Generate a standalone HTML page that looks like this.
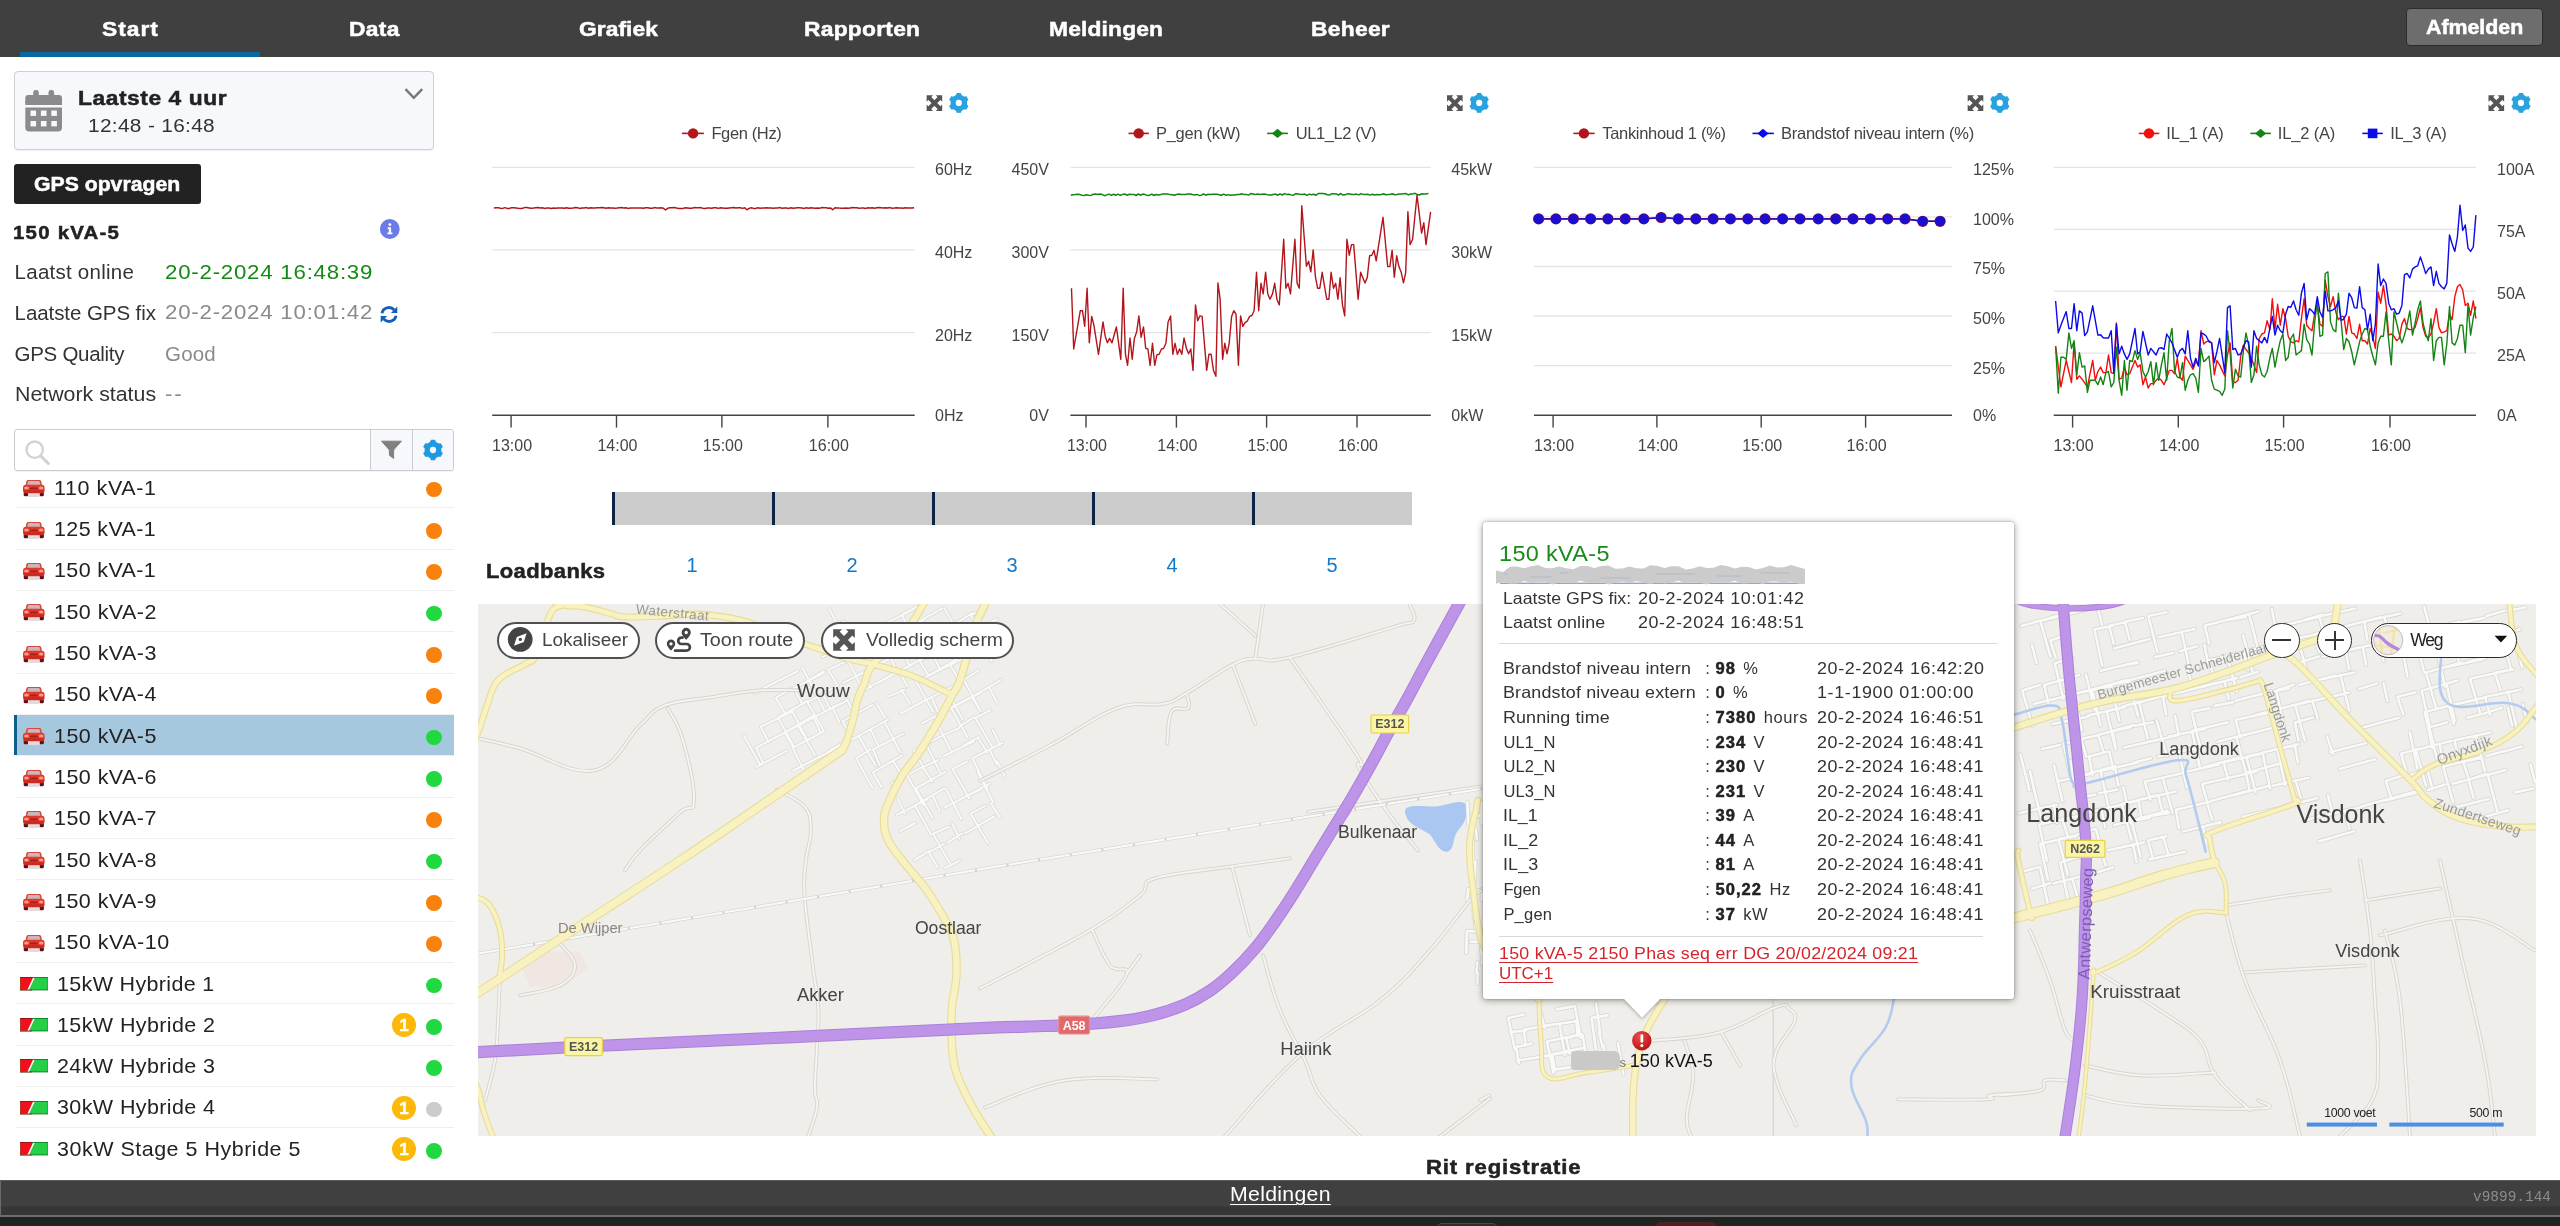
<!DOCTYPE html>
<html><head><meta charset="utf-8"><title>Dashboard</title>
<style>
html,body{margin:0;padding:0;background:#fff}
body{width:2560px;height:1226px;position:relative;overflow:hidden;font-family:"Liberation Sans",sans-serif;}
section{position:absolute;left:0;top:0;width:0;height:0}
section>div,section>span,section>svg{position:absolute;}
span{white-space:nowrap;line-height:1;display:block;opacity:.999}
svg{overflow:visible;opacity:.999}
svg text{font-family:"Liberation Sans",sans-serif}
</style></head><body>
<section id="sidebar">
<div id="nav" style="left:0;top:0;width:2560px;height:56.7px;background:#404040"></div>
<div style="left:19.7px;top:51.6px;width:240.6px;height:5.1px;background:#0869a2"></div>
<span style="left:102.20px;top:17.82px;font-size:21px;color:#fff;font-weight:700;-webkit-text-stroke:0.5px currentColor;letter-spacing:0.910px;transform:scaleX(1.0850);transform-origin:0 0;">Start</span>
<span style="left:348.50px;top:17.82px;font-size:21px;color:#fff;font-weight:700;-webkit-text-stroke:0.5px currentColor;letter-spacing:0.290px;transform:scaleX(1.0850);transform-origin:0 0;">Data</span>
<span style="left:578.50px;top:17.82px;font-size:21px;color:#fff;font-weight:700;-webkit-text-stroke:0.5px currentColor;letter-spacing:0.060px;transform:scaleX(1.0850);transform-origin:0 0;">Grafiek</span>
<span style="left:804.00px;top:17.82px;font-size:21px;color:#fff;font-weight:700;-webkit-text-stroke:0.5px currentColor;letter-spacing:0.239px;transform:scaleX(1.0850);transform-origin:0 0;">Rapporten</span>
<span style="left:1049.00px;top:17.82px;font-size:21px;color:#fff;font-weight:700;-webkit-text-stroke:0.5px currentColor;letter-spacing:0.153px;transform:scaleX(1.0850);transform-origin:0 0;">Meldingen</span>
<span style="left:1310.50px;top:17.82px;font-size:21px;color:#fff;font-weight:700;-webkit-text-stroke:0.5px currentColor;letter-spacing:0.269px;transform:scaleX(1.0850);transform-origin:0 0;">Beheer</span>
<div style="left:2405.6px;top:7.8px;width:137.6px;height:38.6px;background:#6d6d6d;border:1.4px solid #2c2c2c;border-radius:4px;box-sizing:border-box"></div>
<span style="left:2425.80px;top:17.37px;font-size:20px;color:#fff;font-weight:700;-webkit-text-stroke:0.5px currentColor;transform:scaleX(1.0670);transform-origin:0 0;">Afmelden</span>
<div style="left:14px;top:71px;width:420px;height:79px;background:#f7f8fb;border:1px solid #cdd0d4;border-radius:4px;box-sizing:border-box;box-shadow:0 1px 1px rgba(0,0,0,.06)"></div>
<svg style="left:25px;top:89px" width="38" height="44" viewBox="0 0 38 44">
<g fill="#8b8b8f"><rect x="0.3" y="6" width="36.7" height="9.5" rx="3"/><rect x="0.3" y="12" width="36.7" height="4"/>
<rect x="8.2" y="1" width="5.6" height="10" rx="2.4"/><rect x="23.5" y="1" width="5.6" height="10" rx="2.4"/>
<path d="M0.3,18.5 H37 V38.5 a4,4 0 0 1 -4,4 H4.3 a4,4 0 0 1 -4,-4 Z"/></g>
<g fill="#f7f8fb"><rect x="5.5" y="21.5" width="5.6" height="5.4"/><rect x="15.9" y="21.5" width="5.6" height="5.4"/><rect x="26.3" y="21.5" width="5.6" height="5.4"/>
<rect x="5.5" y="32" width="5.6" height="5.4"/><rect x="15.9" y="32" width="5.6" height="5.4"/><rect x="26.3" y="32" width="5.6" height="5.4"/></g></svg>
<span style="left:78.40px;top:87.22px;font-size:21px;color:#222;font-weight:700;-webkit-text-stroke:0.5px currentColor;letter-spacing:0.519px;transform:scaleX(1.0850);transform-origin:0 0;">Laatste 4 uur</span>
<span style="left:87.60px;top:115.65px;font-size:19.2px;color:#333;letter-spacing:0.307px;transform:scaleX(1.0850);transform-origin:0 0;">12:48 - 16:48</span>
<svg style="left:403px;top:86px" width="22" height="16" viewBox="0 0 22 16"><path d="M2.5,3.2 L10.8,11.8 L19.2,3.2" fill="none" stroke="#777" stroke-width="2.4"/></svg>
<div style="left:14px;top:164px;width:187px;height:40px;background:#222;border-radius:3px"></div>
<span style="left:34.30px;top:174.71px;font-size:19.6px;color:#fff;font-weight:700;-webkit-text-stroke:0.5px currentColor;transform:scaleX(1.0826);transform-origin:0 0;">GPS opvragen</span>
<span style="left:13.10px;top:224.39px;font-size:18.8px;color:#222;font-weight:700;-webkit-text-stroke:0.5px currentColor;letter-spacing:1.155px;transform:scaleX(1.0850);transform-origin:0 0;">150 kVA-5</span>
<svg style="left:379px;top:218px" width="22" height="22" viewBox="0 0 22 22"><circle cx="10.8" cy="11" r="9.9" fill="#6b7bea"/><g fill="#fff"><circle cx="10.9" cy="6.6" r="1.45"/><path d="M8.7,9.3 h3.4 v5.2 h1.3 v1.7 h-5 v-1.7 h1.4 v-3.5 h-1.1z"/></g></svg>
<span style="left:14.60px;top:261.85px;font-size:20.5px;color:#333;letter-spacing:0.247px;">Laatst online</span>
<span style="left:165.00px;top:261.65px;font-size:20.5px;color:#148a14;letter-spacing:0.717px;transform:scaleX(1.0850);transform-origin:0 0;">20-2-2024 16:48:39</span>
<span style="left:14.60px;top:302.65px;font-size:20.5px;color:#333;letter-spacing:-0.077px;">Laatste GPS fix</span>
<span style="left:165.00px;top:302.45px;font-size:20.5px;color:#8a8a8a;letter-spacing:0.717px;transform:scaleX(1.0850);transform-origin:0 0;">20-2-2024 10:01:42</span>
<span style="left:14.60px;top:344.35px;font-size:20.5px;color:#333;letter-spacing:-0.295px;">GPS Quality</span>
<span style="left:165.00px;top:344.15px;font-size:20.5px;color:#8a8a8a;letter-spacing:0.192px;">Good</span>
<span style="left:14.60px;top:384.35px;font-size:20.5px;color:#333;transform:scaleX(1.0405);transform-origin:0 0;">Network status</span>
<span style="left:165.00px;top:384.15px;font-size:20.5px;color:#8a8a8a;letter-spacing:1.667px;transform:scaleX(1.0850);transform-origin:0 0;">--</span>
<svg style="left:380px;top:306px" width="18" height="17" viewBox="0 0 18 17"><g fill="none" stroke="#125fba" stroke-width="2.9">
<path d="M2.0,7.2 A7,6.6 0 0 1 14.2,3.9"/><path d="M16.0,9.8 A7,6.6 0 0 1 3.8,13.1"/></g>
<g fill="#125fba"><polygon points="17.3,0.6 17.3,7.0 10.9,7.0"/><polygon points="0.7,16.4 0.7,10.0 7.1,10.0"/></g></svg>
<div style="left:14px;top:429px;width:440px;height:42px;background:#fff;border:1px solid #c9ccd0;border-radius:3px;box-sizing:border-box;box-shadow:0 1px 1px rgba(0,0,0,.05)"></div>
<div style="left:370px;top:430px;width:83px;height:40px;background:#f7f8fb;border-left:1px solid #c9ccd0;border-radius:0 2px 2px 0;box-sizing:border-box"></div>
<div style="left:411.5px;top:430px;width:1px;height:40px;background:#c9ccd0"></div>
<svg style="left:22px;top:437px" width="30" height="30" viewBox="0 0 30 30"><circle cx="12.7" cy="12.7" r="8.2" fill="none" stroke="#d2d2d2" stroke-width="2.4"/><path d="M18.6,18.8 L26.2,26.4" stroke="#d2d2d2" stroke-width="3" stroke-linecap="round"/></svg>
<svg style="left:380px;top:440px" width="23" height="20" viewBox="0 0 23 20"><path d="M1.6,1.2 H21.4 L13.6,10 V18.6 L9.4,15.2 V10 Z" fill="#808080" stroke="#808080" stroke-width="1" stroke-linejoin="round"/></svg>
<svg style="left:421px;top:438px" width="24" height="24" viewBox="421 438 24 24"><path d="M430.70,442.38 L431.28,440.46 L434.72,440.46 L435.30,442.38 L438.45,444.20 L440.40,443.75 L442.12,446.72 L440.75,448.18 L440.75,451.82 L442.12,453.28 L440.40,456.25 L438.45,455.80 L435.30,457.62 L434.72,459.54 L431.28,459.54 L430.70,457.62 L427.55,455.80 L425.60,456.25 L423.88,453.28 L425.25,451.82 L425.25,448.18 L423.88,446.72 L425.60,443.75 L427.55,444.20Z" fill="#1e9ae0" stroke="#1e9ae0" stroke-width="1.22" stroke-linejoin="round"/><path d="M425.04,450.00 a7.96,7.96 0 1,0 15.91,0 a7.96,7.96 0 1,0 -15.91,0Z" fill="#1e9ae0"/><circle cx="433.00" cy="450.00" r="3.16" fill="#f7f8fb"/></svg>
<div style="left:14px;top:715px;width:440px;height:40px;background:#a6c8de;border-left:3px solid #0e5d8c;box-sizing:border-box"></div>
<svg style="left:23.2px;top:480.30px" width="21.6" height="17.2" viewBox="0 0 21.6 16.6" preserveAspectRatio="none">
<rect x="0.7" y="11.4" width="4.5" height="4.3" rx="1.1" fill="#5c111a"/><rect x="16.4" y="11.4" width="4.5" height="4.3" rx="1.1" fill="#5c111a"/>
<rect x="5" y="11.8" width="11.6" height="4.7" rx="1" fill="#e4dada"/>
<path d="M2.4,5.8 L3.5,1.3 Q3.8,0.1 5.3,0.1 H16.3 Q17.8,0.1 18.1,1.3 L19.2,5.8 Z" fill="#d8463e"/>
<path d="M4.1,5.2 L4.9,1.7 Q5.1,1.0 5.9,1.0 H15.7 Q16.5,1.0 16.7,1.7 L17.5,5.2Z" fill="#cdb6ba"/>
<rect x="0" y="4.7" width="21.6" height="8.2" rx="3" fill="#e0392d"/>
<rect x="0.8" y="9.4" width="20" height="3.2" rx="1.5" fill="#cb2b22"/>
<ellipse cx="3.5" cy="7.7" rx="2.3" ry="1.5" fill="#ffa184"/><ellipse cx="18.1" cy="7.7" rx="2.3" ry="1.5" fill="#ffa184"/>
<rect x="7" y="7.2" width="7.6" height="1.7" rx="0.8" fill="#a91d18"/></svg>
<span style="left:53.80px;top:478.54px;font-size:19.8px;color:#222;letter-spacing:0.553px;transform:scaleX(1.0850);transform-origin:0 0;">110 kVA-1</span>
<div style="left:16px;top:507.40px;width:438px;height:1px;background:#efefef"></div>
<div style="left:426.10px;top:481.70px;width:15.8px;height:15.8px;border-radius:50%;background:#f8820b"></div>
<svg style="left:23.2px;top:521.63px" width="21.6" height="17.2" viewBox="0 0 21.6 16.6" preserveAspectRatio="none">
<rect x="0.7" y="11.4" width="4.5" height="4.3" rx="1.1" fill="#5c111a"/><rect x="16.4" y="11.4" width="4.5" height="4.3" rx="1.1" fill="#5c111a"/>
<rect x="5" y="11.8" width="11.6" height="4.7" rx="1" fill="#e4dada"/>
<path d="M2.4,5.8 L3.5,1.3 Q3.8,0.1 5.3,0.1 H16.3 Q17.8,0.1 18.1,1.3 L19.2,5.8 Z" fill="#d8463e"/>
<path d="M4.1,5.2 L4.9,1.7 Q5.1,1.0 5.9,1.0 H15.7 Q16.5,1.0 16.7,1.7 L17.5,5.2Z" fill="#cdb6ba"/>
<rect x="0" y="4.7" width="21.6" height="8.2" rx="3" fill="#e0392d"/>
<rect x="0.8" y="9.4" width="20" height="3.2" rx="1.5" fill="#cb2b22"/>
<ellipse cx="3.5" cy="7.7" rx="2.3" ry="1.5" fill="#ffa184"/><ellipse cx="18.1" cy="7.7" rx="2.3" ry="1.5" fill="#ffa184"/>
<rect x="7" y="7.2" width="7.6" height="1.7" rx="0.8" fill="#a91d18"/></svg>
<span style="left:53.80px;top:519.87px;font-size:19.8px;color:#222;letter-spacing:0.367px;transform:scaleX(1.0850);transform-origin:0 0;">125 kVA-1</span>
<div style="left:16px;top:548.73px;width:438px;height:1px;background:#efefef"></div>
<div style="left:426.10px;top:523.03px;width:15.8px;height:15.8px;border-radius:50%;background:#f8820b"></div>
<svg style="left:23.2px;top:562.96px" width="21.6" height="17.2" viewBox="0 0 21.6 16.6" preserveAspectRatio="none">
<rect x="0.7" y="11.4" width="4.5" height="4.3" rx="1.1" fill="#5c111a"/><rect x="16.4" y="11.4" width="4.5" height="4.3" rx="1.1" fill="#5c111a"/>
<rect x="5" y="11.8" width="11.6" height="4.7" rx="1" fill="#e4dada"/>
<path d="M2.4,5.8 L3.5,1.3 Q3.8,0.1 5.3,0.1 H16.3 Q17.8,0.1 18.1,1.3 L19.2,5.8 Z" fill="#d8463e"/>
<path d="M4.1,5.2 L4.9,1.7 Q5.1,1.0 5.9,1.0 H15.7 Q16.5,1.0 16.7,1.7 L17.5,5.2Z" fill="#cdb6ba"/>
<rect x="0" y="4.7" width="21.6" height="8.2" rx="3" fill="#e0392d"/>
<rect x="0.8" y="9.4" width="20" height="3.2" rx="1.5" fill="#cb2b22"/>
<ellipse cx="3.5" cy="7.7" rx="2.3" ry="1.5" fill="#ffa184"/><ellipse cx="18.1" cy="7.7" rx="2.3" ry="1.5" fill="#ffa184"/>
<rect x="7" y="7.2" width="7.6" height="1.7" rx="0.8" fill="#a91d18"/></svg>
<span style="left:53.80px;top:561.20px;font-size:19.8px;color:#222;letter-spacing:0.367px;transform:scaleX(1.0850);transform-origin:0 0;">150 kVA-1</span>
<div style="left:16px;top:590.06px;width:438px;height:1px;background:#efefef"></div>
<div style="left:426.10px;top:564.36px;width:15.8px;height:15.8px;border-radius:50%;background:#f8820b"></div>
<svg style="left:23.2px;top:604.29px" width="21.6" height="17.2" viewBox="0 0 21.6 16.6" preserveAspectRatio="none">
<rect x="0.7" y="11.4" width="4.5" height="4.3" rx="1.1" fill="#5c111a"/><rect x="16.4" y="11.4" width="4.5" height="4.3" rx="1.1" fill="#5c111a"/>
<rect x="5" y="11.8" width="11.6" height="4.7" rx="1" fill="#e4dada"/>
<path d="M2.4,5.8 L3.5,1.3 Q3.8,0.1 5.3,0.1 H16.3 Q17.8,0.1 18.1,1.3 L19.2,5.8 Z" fill="#d8463e"/>
<path d="M4.1,5.2 L4.9,1.7 Q5.1,1.0 5.9,1.0 H15.7 Q16.5,1.0 16.7,1.7 L17.5,5.2Z" fill="#cdb6ba"/>
<rect x="0" y="4.7" width="21.6" height="8.2" rx="3" fill="#e0392d"/>
<rect x="0.8" y="9.4" width="20" height="3.2" rx="1.5" fill="#cb2b22"/>
<ellipse cx="3.5" cy="7.7" rx="2.3" ry="1.5" fill="#ffa184"/><ellipse cx="18.1" cy="7.7" rx="2.3" ry="1.5" fill="#ffa184"/>
<rect x="7" y="7.2" width="7.6" height="1.7" rx="0.8" fill="#a91d18"/></svg>
<span style="left:53.80px;top:602.53px;font-size:19.8px;color:#222;letter-spacing:0.436px;transform:scaleX(1.0850);transform-origin:0 0;">150 kVA-2</span>
<div style="left:16px;top:631.39px;width:438px;height:1px;background:#efefef"></div>
<div style="left:426.10px;top:605.69px;width:15.8px;height:15.8px;border-radius:50%;background:#20d840"></div>
<svg style="left:23.2px;top:645.62px" width="21.6" height="17.2" viewBox="0 0 21.6 16.6" preserveAspectRatio="none">
<rect x="0.7" y="11.4" width="4.5" height="4.3" rx="1.1" fill="#5c111a"/><rect x="16.4" y="11.4" width="4.5" height="4.3" rx="1.1" fill="#5c111a"/>
<rect x="5" y="11.8" width="11.6" height="4.7" rx="1" fill="#e4dada"/>
<path d="M2.4,5.8 L3.5,1.3 Q3.8,0.1 5.3,0.1 H16.3 Q17.8,0.1 18.1,1.3 L19.2,5.8 Z" fill="#d8463e"/>
<path d="M4.1,5.2 L4.9,1.7 Q5.1,1.0 5.9,1.0 H15.7 Q16.5,1.0 16.7,1.7 L17.5,5.2Z" fill="#cdb6ba"/>
<rect x="0" y="4.7" width="21.6" height="8.2" rx="3" fill="#e0392d"/>
<rect x="0.8" y="9.4" width="20" height="3.2" rx="1.5" fill="#cb2b22"/>
<ellipse cx="3.5" cy="7.7" rx="2.3" ry="1.5" fill="#ffa184"/><ellipse cx="18.1" cy="7.7" rx="2.3" ry="1.5" fill="#ffa184"/>
<rect x="7" y="7.2" width="7.6" height="1.7" rx="0.8" fill="#a91d18"/></svg>
<span style="left:53.80px;top:643.86px;font-size:19.8px;color:#222;letter-spacing:0.436px;transform:scaleX(1.0850);transform-origin:0 0;">150 kVA-3</span>
<div style="left:16px;top:672.72px;width:438px;height:1px;background:#efefef"></div>
<div style="left:426.10px;top:647.02px;width:15.8px;height:15.8px;border-radius:50%;background:#f8820b"></div>
<svg style="left:23.2px;top:686.95px" width="21.6" height="17.2" viewBox="0 0 21.6 16.6" preserveAspectRatio="none">
<rect x="0.7" y="11.4" width="4.5" height="4.3" rx="1.1" fill="#5c111a"/><rect x="16.4" y="11.4" width="4.5" height="4.3" rx="1.1" fill="#5c111a"/>
<rect x="5" y="11.8" width="11.6" height="4.7" rx="1" fill="#e4dada"/>
<path d="M2.4,5.8 L3.5,1.3 Q3.8,0.1 5.3,0.1 H16.3 Q17.8,0.1 18.1,1.3 L19.2,5.8 Z" fill="#d8463e"/>
<path d="M4.1,5.2 L4.9,1.7 Q5.1,1.0 5.9,1.0 H15.7 Q16.5,1.0 16.7,1.7 L17.5,5.2Z" fill="#cdb6ba"/>
<rect x="0" y="4.7" width="21.6" height="8.2" rx="3" fill="#e0392d"/>
<rect x="0.8" y="9.4" width="20" height="3.2" rx="1.5" fill="#cb2b22"/>
<ellipse cx="3.5" cy="7.7" rx="2.3" ry="1.5" fill="#ffa184"/><ellipse cx="18.1" cy="7.7" rx="2.3" ry="1.5" fill="#ffa184"/>
<rect x="7" y="7.2" width="7.6" height="1.7" rx="0.8" fill="#a91d18"/></svg>
<span style="left:53.80px;top:685.19px;font-size:19.8px;color:#222;letter-spacing:0.436px;transform:scaleX(1.0850);transform-origin:0 0;">150 kVA-4</span>
<div style="left:16px;top:714.05px;width:438px;height:1px;background:#efefef"></div>
<div style="left:426.10px;top:688.35px;width:15.8px;height:15.8px;border-radius:50%;background:#f8820b"></div>
<svg style="left:23.2px;top:728.28px" width="21.6" height="17.2" viewBox="0 0 21.6 16.6" preserveAspectRatio="none">
<rect x="0.7" y="11.4" width="4.5" height="4.3" rx="1.1" fill="#5c111a"/><rect x="16.4" y="11.4" width="4.5" height="4.3" rx="1.1" fill="#5c111a"/>
<rect x="5" y="11.8" width="11.6" height="4.7" rx="1" fill="#e4dada"/>
<path d="M2.4,5.8 L3.5,1.3 Q3.8,0.1 5.3,0.1 H16.3 Q17.8,0.1 18.1,1.3 L19.2,5.8 Z" fill="#d8463e"/>
<path d="M4.1,5.2 L4.9,1.7 Q5.1,1.0 5.9,1.0 H15.7 Q16.5,1.0 16.7,1.7 L17.5,5.2Z" fill="#cdb6ba"/>
<rect x="0" y="4.7" width="21.6" height="8.2" rx="3" fill="#e0392d"/>
<rect x="0.8" y="9.4" width="20" height="3.2" rx="1.5" fill="#cb2b22"/>
<ellipse cx="3.5" cy="7.7" rx="2.3" ry="1.5" fill="#ffa184"/><ellipse cx="18.1" cy="7.7" rx="2.3" ry="1.5" fill="#ffa184"/>
<rect x="7" y="7.2" width="7.6" height="1.7" rx="0.8" fill="#a91d18"/></svg>
<span style="left:53.80px;top:726.52px;font-size:19.8px;color:#222;letter-spacing:0.436px;transform:scaleX(1.0850);transform-origin:0 0;">150 kVA-5</span>
<div style="left:16px;top:755.38px;width:438px;height:1px;background:#efefef"></div>
<div style="left:426.10px;top:729.68px;width:15.8px;height:15.8px;border-radius:50%;background:#20d840"></div>
<svg style="left:23.2px;top:769.61px" width="21.6" height="17.2" viewBox="0 0 21.6 16.6" preserveAspectRatio="none">
<rect x="0.7" y="11.4" width="4.5" height="4.3" rx="1.1" fill="#5c111a"/><rect x="16.4" y="11.4" width="4.5" height="4.3" rx="1.1" fill="#5c111a"/>
<rect x="5" y="11.8" width="11.6" height="4.7" rx="1" fill="#e4dada"/>
<path d="M2.4,5.8 L3.5,1.3 Q3.8,0.1 5.3,0.1 H16.3 Q17.8,0.1 18.1,1.3 L19.2,5.8 Z" fill="#d8463e"/>
<path d="M4.1,5.2 L4.9,1.7 Q5.1,1.0 5.9,1.0 H15.7 Q16.5,1.0 16.7,1.7 L17.5,5.2Z" fill="#cdb6ba"/>
<rect x="0" y="4.7" width="21.6" height="8.2" rx="3" fill="#e0392d"/>
<rect x="0.8" y="9.4" width="20" height="3.2" rx="1.5" fill="#cb2b22"/>
<ellipse cx="3.5" cy="7.7" rx="2.3" ry="1.5" fill="#ffa184"/><ellipse cx="18.1" cy="7.7" rx="2.3" ry="1.5" fill="#ffa184"/>
<rect x="7" y="7.2" width="7.6" height="1.7" rx="0.8" fill="#a91d18"/></svg>
<span style="left:53.80px;top:767.85px;font-size:19.8px;color:#222;letter-spacing:0.436px;transform:scaleX(1.0850);transform-origin:0 0;">150 kVA-6</span>
<div style="left:16px;top:796.71px;width:438px;height:1px;background:#efefef"></div>
<div style="left:426.10px;top:771.01px;width:15.8px;height:15.8px;border-radius:50%;background:#20d840"></div>
<svg style="left:23.2px;top:810.94px" width="21.6" height="17.2" viewBox="0 0 21.6 16.6" preserveAspectRatio="none">
<rect x="0.7" y="11.4" width="4.5" height="4.3" rx="1.1" fill="#5c111a"/><rect x="16.4" y="11.4" width="4.5" height="4.3" rx="1.1" fill="#5c111a"/>
<rect x="5" y="11.8" width="11.6" height="4.7" rx="1" fill="#e4dada"/>
<path d="M2.4,5.8 L3.5,1.3 Q3.8,0.1 5.3,0.1 H16.3 Q17.8,0.1 18.1,1.3 L19.2,5.8 Z" fill="#d8463e"/>
<path d="M4.1,5.2 L4.9,1.7 Q5.1,1.0 5.9,1.0 H15.7 Q16.5,1.0 16.7,1.7 L17.5,5.2Z" fill="#cdb6ba"/>
<rect x="0" y="4.7" width="21.6" height="8.2" rx="3" fill="#e0392d"/>
<rect x="0.8" y="9.4" width="20" height="3.2" rx="1.5" fill="#cb2b22"/>
<ellipse cx="3.5" cy="7.7" rx="2.3" ry="1.5" fill="#ffa184"/><ellipse cx="18.1" cy="7.7" rx="2.3" ry="1.5" fill="#ffa184"/>
<rect x="7" y="7.2" width="7.6" height="1.7" rx="0.8" fill="#a91d18"/></svg>
<span style="left:53.80px;top:809.18px;font-size:19.8px;color:#222;letter-spacing:0.436px;transform:scaleX(1.0850);transform-origin:0 0;">150 kVA-7</span>
<div style="left:16px;top:838.04px;width:438px;height:1px;background:#efefef"></div>
<div style="left:426.10px;top:812.34px;width:15.8px;height:15.8px;border-radius:50%;background:#f8820b"></div>
<svg style="left:23.2px;top:852.27px" width="21.6" height="17.2" viewBox="0 0 21.6 16.6" preserveAspectRatio="none">
<rect x="0.7" y="11.4" width="4.5" height="4.3" rx="1.1" fill="#5c111a"/><rect x="16.4" y="11.4" width="4.5" height="4.3" rx="1.1" fill="#5c111a"/>
<rect x="5" y="11.8" width="11.6" height="4.7" rx="1" fill="#e4dada"/>
<path d="M2.4,5.8 L3.5,1.3 Q3.8,0.1 5.3,0.1 H16.3 Q17.8,0.1 18.1,1.3 L19.2,5.8 Z" fill="#d8463e"/>
<path d="M4.1,5.2 L4.9,1.7 Q5.1,1.0 5.9,1.0 H15.7 Q16.5,1.0 16.7,1.7 L17.5,5.2Z" fill="#cdb6ba"/>
<rect x="0" y="4.7" width="21.6" height="8.2" rx="3" fill="#e0392d"/>
<rect x="0.8" y="9.4" width="20" height="3.2" rx="1.5" fill="#cb2b22"/>
<ellipse cx="3.5" cy="7.7" rx="2.3" ry="1.5" fill="#ffa184"/><ellipse cx="18.1" cy="7.7" rx="2.3" ry="1.5" fill="#ffa184"/>
<rect x="7" y="7.2" width="7.6" height="1.7" rx="0.8" fill="#a91d18"/></svg>
<span style="left:53.80px;top:850.51px;font-size:19.8px;color:#222;letter-spacing:0.436px;transform:scaleX(1.0850);transform-origin:0 0;">150 kVA-8</span>
<div style="left:16px;top:879.37px;width:438px;height:1px;background:#efefef"></div>
<div style="left:426.10px;top:853.67px;width:15.8px;height:15.8px;border-radius:50%;background:#20d840"></div>
<svg style="left:23.2px;top:893.60px" width="21.6" height="17.2" viewBox="0 0 21.6 16.6" preserveAspectRatio="none">
<rect x="0.7" y="11.4" width="4.5" height="4.3" rx="1.1" fill="#5c111a"/><rect x="16.4" y="11.4" width="4.5" height="4.3" rx="1.1" fill="#5c111a"/>
<rect x="5" y="11.8" width="11.6" height="4.7" rx="1" fill="#e4dada"/>
<path d="M2.4,5.8 L3.5,1.3 Q3.8,0.1 5.3,0.1 H16.3 Q17.8,0.1 18.1,1.3 L19.2,5.8 Z" fill="#d8463e"/>
<path d="M4.1,5.2 L4.9,1.7 Q5.1,1.0 5.9,1.0 H15.7 Q16.5,1.0 16.7,1.7 L17.5,5.2Z" fill="#cdb6ba"/>
<rect x="0" y="4.7" width="21.6" height="8.2" rx="3" fill="#e0392d"/>
<rect x="0.8" y="9.4" width="20" height="3.2" rx="1.5" fill="#cb2b22"/>
<ellipse cx="3.5" cy="7.7" rx="2.3" ry="1.5" fill="#ffa184"/><ellipse cx="18.1" cy="7.7" rx="2.3" ry="1.5" fill="#ffa184"/>
<rect x="7" y="7.2" width="7.6" height="1.7" rx="0.8" fill="#a91d18"/></svg>
<span style="left:53.80px;top:891.84px;font-size:19.8px;color:#222;letter-spacing:0.436px;transform:scaleX(1.0850);transform-origin:0 0;">150 kVA-9</span>
<div style="left:16px;top:920.70px;width:438px;height:1px;background:#efefef"></div>
<div style="left:426.10px;top:895.00px;width:15.8px;height:15.8px;border-radius:50%;background:#f8820b"></div>
<svg style="left:23.2px;top:934.93px" width="21.6" height="17.2" viewBox="0 0 21.6 16.6" preserveAspectRatio="none">
<rect x="0.7" y="11.4" width="4.5" height="4.3" rx="1.1" fill="#5c111a"/><rect x="16.4" y="11.4" width="4.5" height="4.3" rx="1.1" fill="#5c111a"/>
<rect x="5" y="11.8" width="11.6" height="4.7" rx="1" fill="#e4dada"/>
<path d="M2.4,5.8 L3.5,1.3 Q3.8,0.1 5.3,0.1 H16.3 Q17.8,0.1 18.1,1.3 L19.2,5.8 Z" fill="#d8463e"/>
<path d="M4.1,5.2 L4.9,1.7 Q5.1,1.0 5.9,1.0 H15.7 Q16.5,1.0 16.7,1.7 L17.5,5.2Z" fill="#cdb6ba"/>
<rect x="0" y="4.7" width="21.6" height="8.2" rx="3" fill="#e0392d"/>
<rect x="0.8" y="9.4" width="20" height="3.2" rx="1.5" fill="#cb2b22"/>
<ellipse cx="3.5" cy="7.7" rx="2.3" ry="1.5" fill="#ffa184"/><ellipse cx="18.1" cy="7.7" rx="2.3" ry="1.5" fill="#ffa184"/>
<rect x="7" y="7.2" width="7.6" height="1.7" rx="0.8" fill="#a91d18"/></svg>
<span style="left:53.80px;top:933.17px;font-size:19.8px;color:#222;letter-spacing:0.467px;transform:scaleX(1.0850);transform-origin:0 0;">150 kVA-10</span>
<div style="left:16px;top:962.03px;width:438px;height:1px;background:#efefef"></div>
<div style="left:426.10px;top:936.33px;width:15.8px;height:15.8px;border-radius:50%;background:#f8820b"></div>
<svg style="left:20px;top:976.66px" width="28" height="14" viewBox="0 0 28 14">
<rect x="0" y="0" width="28" height="13.4" fill="#0f8a2c"/><rect x="0" y="0" width="12" height="13.4" fill="#a30d14"/>
<rect x="0.4" y="1" width="27.2" height="11.4" fill="#25cf48"/>
<polygon points="0.4,1 14.2,1 8.6,12.4 0.4,12.4" fill="#f20f1e"/>
<polygon points="12.9,1 14.6,1 9.2,12.4 7.5,12.4" fill="#fff"/></svg>
<span style="left:56.70px;top:974.50px;font-size:19.8px;color:#222;letter-spacing:0.322px;transform:scaleX(1.0850);transform-origin:0 0;">15kW Hybride 1</span>
<div style="left:16px;top:1003.36px;width:438px;height:1px;background:#efefef"></div>
<div style="left:426.10px;top:977.66px;width:15.8px;height:15.8px;border-radius:50%;background:#20d840"></div>
<svg style="left:20px;top:1017.99px" width="28" height="14" viewBox="0 0 28 14">
<rect x="0" y="0" width="28" height="13.4" fill="#0f8a2c"/><rect x="0" y="0" width="12" height="13.4" fill="#a30d14"/>
<rect x="0.4" y="1" width="27.2" height="11.4" fill="#25cf48"/>
<polygon points="0.4,1 14.2,1 8.6,12.4 0.4,12.4" fill="#f20f1e"/>
<polygon points="12.9,1 14.6,1 9.2,12.4 7.5,12.4" fill="#fff"/></svg>
<span style="left:56.70px;top:1015.83px;font-size:19.8px;color:#222;letter-spacing:0.379px;transform:scaleX(1.0850);transform-origin:0 0;">15kW Hybride 2</span>
<div style="left:16px;top:1044.69px;width:438px;height:1px;background:#efefef"></div>
<div style="left:426.10px;top:1018.99px;width:15.8px;height:15.8px;border-radius:50%;background:#20d840"></div>
<div style="left:392.10px;top:1013.09px;width:23.8px;height:23.8px;border-radius:50%;background:#fcb908"></div>
<span style="left:399.42px;top:1017.22px;font-size:16.5px;color:#fff;font-weight:700;-webkit-text-stroke:0.5px currentColor;">1</span>
<div style="left:400.3px;top:1028.89px;width:8px;height:2.3px;background:#fff"></div>
<svg style="left:20px;top:1059.32px" width="28" height="14" viewBox="0 0 28 14">
<rect x="0" y="0" width="28" height="13.4" fill="#0f8a2c"/><rect x="0" y="0" width="12" height="13.4" fill="#a30d14"/>
<rect x="0.4" y="1" width="27.2" height="11.4" fill="#25cf48"/>
<polygon points="0.4,1 14.2,1 8.6,12.4 0.4,12.4" fill="#f20f1e"/>
<polygon points="12.9,1 14.6,1 9.2,12.4 7.5,12.4" fill="#fff"/></svg>
<span style="left:56.70px;top:1057.16px;font-size:19.8px;color:#222;letter-spacing:0.379px;transform:scaleX(1.0850);transform-origin:0 0;">24kW Hybride 3</span>
<div style="left:16px;top:1086.02px;width:438px;height:1px;background:#efefef"></div>
<div style="left:426.10px;top:1060.32px;width:15.8px;height:15.8px;border-radius:50%;background:#20d840"></div>
<svg style="left:20px;top:1100.65px" width="28" height="14" viewBox="0 0 28 14">
<rect x="0" y="0" width="28" height="13.4" fill="#0f8a2c"/><rect x="0" y="0" width="12" height="13.4" fill="#a30d14"/>
<rect x="0.4" y="1" width="27.2" height="11.4" fill="#25cf48"/>
<polygon points="0.4,1 14.2,1 8.6,12.4 0.4,12.4" fill="#f20f1e"/>
<polygon points="12.9,1 14.6,1 9.2,12.4 7.5,12.4" fill="#fff"/></svg>
<span style="left:56.70px;top:1098.49px;font-size:19.8px;color:#222;letter-spacing:0.379px;transform:scaleX(1.0850);transform-origin:0 0;">30kW Hybride 4</span>
<div style="left:16px;top:1127.35px;width:438px;height:1px;background:#efefef"></div>
<div style="left:426.10px;top:1101.65px;width:15.8px;height:15.8px;border-radius:50%;background:#cccccc"></div>
<div style="left:392.10px;top:1095.75px;width:23.8px;height:23.8px;border-radius:50%;background:#fcb908"></div>
<span style="left:399.42px;top:1099.88px;font-size:16.5px;color:#fff;font-weight:700;-webkit-text-stroke:0.5px currentColor;">1</span>
<div style="left:400.3px;top:1111.55px;width:8px;height:2.3px;background:#fff"></div>
<svg style="left:20px;top:1141.98px" width="28" height="14" viewBox="0 0 28 14">
<rect x="0" y="0" width="28" height="13.4" fill="#0f8a2c"/><rect x="0" y="0" width="12" height="13.4" fill="#a30d14"/>
<rect x="0.4" y="1" width="27.2" height="11.4" fill="#25cf48"/>
<polygon points="0.4,1 14.2,1 8.6,12.4 0.4,12.4" fill="#f20f1e"/>
<polygon points="12.9,1 14.6,1 9.2,12.4 7.5,12.4" fill="#fff"/></svg>
<span style="left:56.70px;top:1139.82px;font-size:19.8px;color:#222;letter-spacing:0.475px;transform:scaleX(1.0850);transform-origin:0 0;">30kW Stage 5 Hybride 5</span>
<div style="left:426.10px;top:1142.98px;width:15.8px;height:15.8px;border-radius:50%;background:#20d840"></div>
<div style="left:392.10px;top:1137.08px;width:23.8px;height:23.8px;border-radius:50%;background:#fcb908"></div>
<span style="left:399.42px;top:1141.21px;font-size:16.5px;color:#fff;font-weight:700;-webkit-text-stroke:0.5px currentColor;">1</span>
<div style="left:400.3px;top:1152.88px;width:8px;height:2.3px;background:#fff"></div>
</section>
<section id="charts">
<svg style="left:0;top:0" width="2560" height="480"><line x1="492.2" y1="167.3" x2="914.5" y2="167.3" stroke="#e4e4e4" stroke-width="1.3"/><line x1="492.2" y1="249.9" x2="914.5" y2="249.9" stroke="#e4e4e4" stroke-width="1.3"/><line x1="492.2" y1="332.6" x2="914.5" y2="332.6" stroke="#e4e4e4" stroke-width="1.3"/><line x1="492.2" y1="415.2" x2="914.7" y2="415.2" stroke="#444" stroke-width="1.6"/><line x1="511.1" y1="415.2" x2="511.1" y2="427.59999999999997" stroke="#444" stroke-width="1.4"/><line x1="616.5" y1="415.2" x2="616.5" y2="427.59999999999997" stroke="#444" stroke-width="1.4"/><line x1="721.9" y1="415.2" x2="721.9" y2="427.59999999999997" stroke="#444" stroke-width="1.4"/><line x1="827.9" y1="415.2" x2="827.9" y2="427.59999999999997" stroke="#444" stroke-width="1.4"/><polyline points="493.9,208.1 496.1,207.8 498.3,207.8 500.5,208.2 502.7,208.4 504.9,207.6 507.1,208.4 509.3,208.4 511.5,207.8 513.7,207.8 515.9,207.9 518.1,208.2 520.3,208.4 522.5,208.3 524.7,207.6 526.9,207.6 529.1,207.9 531.3,208.2 533.5,208.1 535.7,207.8 537.9,207.6 540.1,208.1 542.3,207.7 544.5,208.4 546.7,208.0 548.9,208.0 551.1,208.4 553.3,208.1 555.5,208.3 557.7,208.0 559.9,207.9 562.1,207.9 564.3,208.3 566.5,207.7 568.7,208.3 570.9,208.2 573.1,208.1 575.3,207.6 577.5,207.8 579.7,208.4 581.9,208.1 584.1,207.9 586.3,207.6 588.5,208.3 590.7,207.7 592.9,208.0 595.1,207.9 597.3,207.7 599.5,207.7 601.7,207.6 603.9,207.8 606.1,208.3 608.3,207.8 610.5,208.1 612.7,208.1 614.9,208.3 617.1,208.1 619.3,207.8 621.5,207.6 623.7,208.0 625.9,207.8 628.1,208.4 630.3,208.0 632.5,208.1 634.7,208.1 636.9,208.0 639.1,208.0 641.3,207.9 643.5,208.2 645.7,207.7 647.9,207.8 650.1,208.2 652.3,208.2 654.5,207.6 656.7,208.0 658.9,208.0 661.1,207.8 663.3,208.2 665.5,210.0 667.7,208.3 669.9,207.8 672.1,207.7 674.3,207.6 676.5,208.1 678.7,208.4 680.9,208.4 683.1,208.4 685.3,207.8 687.5,207.9 689.7,208.3 691.9,208.2 694.1,207.6 696.3,207.8 698.5,207.7 700.7,207.6 702.9,208.3 705.1,208.4 707.3,207.9 709.5,208.0 711.7,208.2 713.9,207.7 716.1,207.8 718.3,208.4 720.5,207.8 722.7,208.0 724.9,208.2 727.1,208.2 729.3,207.9 731.5,207.7 733.7,207.6 735.9,208.1 738.1,207.8 740.3,207.7 742.5,208.4 744.7,207.7 746.9,209.8 749.1,208.4 751.3,207.8 753.5,208.4 755.7,208.4 757.9,207.7 760.1,208.2 762.3,208.0 764.5,208.0 766.7,207.8 768.9,208.1 771.1,208.0 773.3,208.2 775.5,207.9 777.7,208.0 779.9,207.6 782.1,208.2 784.3,208.0 786.5,208.1 788.7,208.4 790.9,207.7 793.1,208.3 795.3,208.0 797.5,207.8 799.7,207.8 801.9,208.1 804.1,208.4 806.3,207.8 808.5,208.2 810.7,207.7 812.9,207.9 815.1,208.2 817.3,208.0 819.5,208.3 821.7,207.6 823.9,207.7 826.1,207.7 828.3,208.3 830.5,207.9 832.7,209.8 834.9,207.8 837.1,207.9 839.3,208.1 841.5,208.2 843.7,208.2 845.9,208.1 848.1,208.2 850.3,207.9 852.5,207.6 854.7,207.8 856.9,207.8 859.1,208.2 861.3,208.1 863.5,207.9 865.7,208.4 867.9,207.7 870.1,207.9 872.3,207.7 874.5,208.2 876.7,207.8 878.9,207.6 881.1,207.8 883.3,208.1 885.5,207.7 887.7,207.9 889.9,207.6 892.1,208.3 894.3,208.1 896.5,207.7 898.7,208.0 900.9,208.0 903.1,208.2 905.3,207.7 907.5,208.1 909.7,208.1 911.9,208.0 914.1,207.7" fill="none" stroke="#b2151c" stroke-width="1.5" stroke-linejoin="round"/><line x1="1070.4" y1="167.3" x2="1430.8" y2="167.3" stroke="#e4e4e4" stroke-width="1.3"/><line x1="1070.4" y1="249.9" x2="1430.8" y2="249.9" stroke="#e4e4e4" stroke-width="1.3"/><line x1="1070.4" y1="332.6" x2="1430.8" y2="332.6" stroke="#e4e4e4" stroke-width="1.3"/><line x1="1070.4" y1="415.2" x2="1430.8" y2="415.2" stroke="#444" stroke-width="1.6"/><line x1="1086.0" y1="415.2" x2="1086.0" y2="427.59999999999997" stroke="#444" stroke-width="1.4"/><line x1="1176.4" y1="415.2" x2="1176.4" y2="427.59999999999997" stroke="#444" stroke-width="1.4"/><line x1="1266.6" y1="415.2" x2="1266.6" y2="427.59999999999997" stroke="#444" stroke-width="1.4"/><line x1="1357.0" y1="415.2" x2="1357.0" y2="427.59999999999997" stroke="#444" stroke-width="1.4"/><polyline points="1070.8,195.2 1073.0,194.7 1075.3,194.6 1077.5,194.2 1079.8,194.6 1082.0,195.3 1084.3,195.5 1086.5,194.8 1088.8,195.3 1091.0,195.4 1093.3,194.3 1095.5,194.0 1097.8,194.5 1100.0,194.1 1102.3,194.6 1104.5,195.7 1106.8,194.9 1109.0,194.1 1111.3,195.3 1113.5,194.2 1115.8,195.3 1118.0,194.2 1120.3,195.4 1122.5,194.4 1124.8,193.9 1127.0,195.3 1129.3,194.3 1131.5,194.5 1133.8,194.4 1136.0,195.5 1138.3,194.0 1140.5,195.2 1142.8,194.1 1145.0,194.6 1147.3,195.4 1149.5,195.3 1151.8,194.1 1154.0,195.5 1156.3,194.5 1158.5,194.9 1160.8,194.5 1163.0,193.9 1165.3,193.9 1167.5,193.9 1169.8,194.6 1172.0,194.7 1174.3,195.3 1176.5,194.5 1178.8,193.9 1181.0,194.4 1183.3,194.6 1185.5,194.4 1187.8,194.1 1190.0,194.0 1192.3,194.6 1194.5,195.0 1196.8,194.4 1199.0,195.4 1201.3,195.2 1203.5,194.0 1205.8,195.2 1208.0,194.3 1210.3,194.5 1212.5,194.3 1214.8,194.2 1217.0,194.2 1219.3,194.7 1221.5,195.2 1223.8,194.1 1226.0,195.3 1228.3,194.6 1230.5,195.3 1232.8,194.9 1235.0,195.0 1237.3,194.6 1239.5,194.4 1241.8,193.8 1244.0,194.4 1246.3,194.4 1248.5,195.1 1250.8,193.6 1253.0,194.0 1255.3,194.6 1257.5,194.0 1259.8,194.4 1262.0,194.2 1264.3,194.0 1266.5,194.4 1268.8,195.1 1271.0,195.0 1273.3,194.4 1275.5,194.1 1277.8,195.2 1280.0,193.8 1282.3,195.0 1284.5,193.6 1286.8,194.4 1289.0,194.2 1291.3,194.9 1293.5,195.2 1295.8,193.7 1298.0,194.0 1300.3,194.3 1302.5,194.5 1304.8,194.1 1307.0,195.3 1309.3,194.1 1311.5,194.8 1313.8,194.2 1316.0,195.2 1318.3,193.5 1320.5,193.5 1322.8,193.6 1325.0,193.7 1327.3,194.8 1329.5,195.1 1331.8,193.7 1334.0,193.7 1336.3,193.9 1338.5,195.0 1340.8,193.5 1343.0,195.1 1345.3,194.8 1347.5,193.7 1349.8,194.0 1352.0,194.5 1354.3,194.6 1356.5,194.1 1358.8,194.9 1361.0,193.6 1363.3,194.4 1365.5,194.4 1367.8,194.2 1370.0,195.1 1372.3,194.2 1374.5,195.0 1376.8,194.6 1379.0,194.8 1381.3,194.6 1383.5,193.8 1385.8,194.8 1388.0,194.5 1390.3,194.3 1392.5,193.7 1394.8,194.8 1397.0,194.4 1399.3,193.9 1401.5,193.9 1403.8,193.7 1406.0,193.6 1408.3,194.9 1410.5,194.0 1412.8,193.9 1415.0,193.3 1417.3,194.6 1419.5,195.0 1421.8,193.7 1424.0,194.1 1426.3,194.0 1428.5,193.4" fill="none" stroke="#138313" stroke-width="1.5" stroke-linejoin="round"/><polyline points="1071.5,288.2 1073.7,349.0 1080.3,310.7 1082.5,310.7 1084.7,326.3 1087.1,288.2 1089.3,342.8 1091.7,316.4 1093.9,325.2 1098.5,354.3 1103.0,321.9 1105.2,336.2 1107.4,342.8 1109.6,338.4 1112.0,342.8 1116.4,327.0 1120.8,359.3 1123.2,288.2 1125.4,353.8 1127.6,365.3 1130.0,338.0 1132.2,359.3 1134.4,338.4 1136.7,331.8 1138.9,315.9 1141.1,337.3 1143.5,327.0 1145.7,348.3 1147.9,349.0 1150.1,365.3 1152.5,343.3 1154.7,365.3 1156.9,354.9 1159.1,354.3 1161.5,349.0 1163.7,348.3 1165.9,343.3 1168.1,321.9 1170.6,315.9 1172.8,354.3 1175.0,343.3 1177.4,354.3 1179.6,349.0 1181.8,354.3 1184.0,338.0 1186.4,348.3 1188.6,353.8 1190.8,349.0 1193.0,370.4 1195.5,304.9 1197.7,320.8 1199.9,315.9 1202.1,316.4 1206.7,370.4 1208.9,354.3 1211.1,354.3 1213.5,370.4 1215.9,376.3 1217.9,282.9 1220.1,298.8 1222.6,359.3 1224.8,343.3 1227.0,353.8 1229.2,343.3 1231.6,316.4 1233.8,310.7 1236.0,314.2 1238.4,365.3 1240.6,315.9 1242.8,326.3 1245.0,322.6 1247.2,321.2 1249.6,316.4 1251.9,315.5 1254.1,310.7 1256.5,272.3 1258.7,310.7 1261.0,283.3 1263.2,293.9 1265.6,272.3 1267.8,293.9 1270.0,299.2 1272.5,293.9 1274.7,283.3 1276.9,299.2 1279.3,304.9 1283.7,239.3 1285.9,288.2 1288.1,283.3 1290.5,293.9 1294.9,239.3 1297.1,283.3 1299.3,288.2 1301.8,205.8 1306.4,266.2 1308.6,261.3 1310.8,271.9 1313.2,249.9 1315.4,276.7 1317.6,288.2 1319.8,288.2 1322.2,272.3 1326.7,299.2 1328.9,299.2 1331.1,272.3 1333.5,288.2 1335.7,283.3 1337.9,299.2 1340.1,277.8 1342.5,304.9 1344.7,315.9 1346.9,239.3 1349.3,255.2 1351.5,244.6 1353.7,244.6 1358.1,299.2 1360.6,272.3 1365.0,282.9 1367.2,277.8 1369.6,255.8 1371.8,255.2 1374.0,250.3 1376.2,260.9 1383.0,217.3 1387.7,266.6 1389.9,266.6 1392.1,250.3 1394.3,277.2 1396.7,255.8 1398.9,266.6 1401.1,271.9 1403.5,282.9 1405.7,272.3 1407.9,211.8 1410.1,244.6 1412.6,239.3 1417.0,195.2 1421.6,233.1 1423.8,222.8 1426.0,244.6 1430.6,211.8" fill="none" stroke="#b2151c" stroke-width="1.4" stroke-linejoin="round"/><line x1="1533.9" y1="167.3" x2="1952" y2="167.3" stroke="#e4e4e4" stroke-width="1.3"/><line x1="1533.9" y1="216.9" x2="1952" y2="216.9" stroke="#e4e4e4" stroke-width="1.3"/><line x1="1533.9" y1="266.5" x2="1952" y2="266.5" stroke="#e4e4e4" stroke-width="1.3"/><line x1="1533.9" y1="316.0" x2="1952" y2="316.0" stroke="#e4e4e4" stroke-width="1.3"/><line x1="1533.9" y1="365.6" x2="1952" y2="365.6" stroke="#e4e4e4" stroke-width="1.3"/><line x1="1533.9" y1="415.2" x2="1952" y2="415.2" stroke="#444" stroke-width="1.6"/><line x1="1553.1" y1="415.2" x2="1553.1" y2="427.59999999999997" stroke="#444" stroke-width="1.4"/><line x1="1656.9" y1="415.2" x2="1656.9" y2="427.59999999999997" stroke="#444" stroke-width="1.4"/><line x1="1761.2" y1="415.2" x2="1761.2" y2="427.59999999999997" stroke="#444" stroke-width="1.4"/><line x1="1865.6" y1="415.2" x2="1865.6" y2="427.59999999999997" stroke="#444" stroke-width="1.4"/><polyline points="1538.6,218.9 1555.9,218.9 1573.4,218.9 1590.6,218.9 1607.9,218.9 1625.2,218.9 1643.8,218.9 1661.1,217.5 1678.4,218.9 1695.8,218.9 1713.1,218.9 1730.4,218.9 1747.8,218.9 1765.1,218.9 1782.6,218.9 1800.0,218.9 1818.3,218.9 1835.7,218.9 1853.0,218.9 1870.3,218.9 1887.7,218.9 1905.0,218.9 1922.7,221.3 1940.1,221.3" fill="none" stroke="#b2151c" stroke-width="1.6" stroke-linejoin="round"/><polyline points="1538.6,218.9 1555.9,218.9 1573.4,218.9 1590.6,218.9 1607.9,218.9 1625.2,218.9 1643.8,218.9 1661.1,217.5 1678.4,218.9 1695.8,218.9 1713.1,218.9 1730.4,218.9 1747.8,218.9 1765.1,218.9 1782.6,218.9 1800.0,218.9 1818.3,218.9 1835.7,218.9 1853.0,218.9 1870.3,218.9 1887.7,218.9 1905.0,218.9 1922.7,221.3 1940.1,221.3" fill="none" stroke="#0b0bea" stroke-width="1.4" stroke-linejoin="round"/><circle cx="1538.6" cy="218.9" r="5.6" fill="#8a1040"/><circle cx="1538.6" cy="218.9" r="5.0" fill="#1a0fd0"/><circle cx="1555.9" cy="218.9" r="5.6" fill="#8a1040"/><circle cx="1555.9" cy="218.9" r="5.0" fill="#1a0fd0"/><circle cx="1573.4" cy="218.9" r="5.6" fill="#8a1040"/><circle cx="1573.4" cy="218.9" r="5.0" fill="#1a0fd0"/><circle cx="1590.6" cy="218.9" r="5.6" fill="#8a1040"/><circle cx="1590.6" cy="218.9" r="5.0" fill="#1a0fd0"/><circle cx="1607.9" cy="218.9" r="5.6" fill="#8a1040"/><circle cx="1607.9" cy="218.9" r="5.0" fill="#1a0fd0"/><circle cx="1625.2" cy="218.9" r="5.6" fill="#8a1040"/><circle cx="1625.2" cy="218.9" r="5.0" fill="#1a0fd0"/><circle cx="1643.8" cy="218.9" r="5.6" fill="#8a1040"/><circle cx="1643.8" cy="218.9" r="5.0" fill="#1a0fd0"/><circle cx="1661.1" cy="217.5" r="5.6" fill="#8a1040"/><circle cx="1661.1" cy="217.5" r="5.0" fill="#1a0fd0"/><circle cx="1678.4" cy="218.9" r="5.6" fill="#8a1040"/><circle cx="1678.4" cy="218.9" r="5.0" fill="#1a0fd0"/><circle cx="1695.8" cy="218.9" r="5.6" fill="#8a1040"/><circle cx="1695.8" cy="218.9" r="5.0" fill="#1a0fd0"/><circle cx="1713.1" cy="218.9" r="5.6" fill="#8a1040"/><circle cx="1713.1" cy="218.9" r="5.0" fill="#1a0fd0"/><circle cx="1730.4" cy="218.9" r="5.6" fill="#8a1040"/><circle cx="1730.4" cy="218.9" r="5.0" fill="#1a0fd0"/><circle cx="1747.8" cy="218.9" r="5.6" fill="#8a1040"/><circle cx="1747.8" cy="218.9" r="5.0" fill="#1a0fd0"/><circle cx="1765.1" cy="218.9" r="5.6" fill="#8a1040"/><circle cx="1765.1" cy="218.9" r="5.0" fill="#1a0fd0"/><circle cx="1782.6" cy="218.9" r="5.6" fill="#8a1040"/><circle cx="1782.6" cy="218.9" r="5.0" fill="#1a0fd0"/><circle cx="1800.0" cy="218.9" r="5.6" fill="#8a1040"/><circle cx="1800.0" cy="218.9" r="5.0" fill="#1a0fd0"/><circle cx="1818.3" cy="218.9" r="5.6" fill="#8a1040"/><circle cx="1818.3" cy="218.9" r="5.0" fill="#1a0fd0"/><circle cx="1835.7" cy="218.9" r="5.6" fill="#8a1040"/><circle cx="1835.7" cy="218.9" r="5.0" fill="#1a0fd0"/><circle cx="1853.0" cy="218.9" r="5.6" fill="#8a1040"/><circle cx="1853.0" cy="218.9" r="5.0" fill="#1a0fd0"/><circle cx="1870.3" cy="218.9" r="5.6" fill="#8a1040"/><circle cx="1870.3" cy="218.9" r="5.0" fill="#1a0fd0"/><circle cx="1887.7" cy="218.9" r="5.6" fill="#8a1040"/><circle cx="1887.7" cy="218.9" r="5.0" fill="#1a0fd0"/><circle cx="1905.0" cy="218.9" r="5.6" fill="#8a1040"/><circle cx="1905.0" cy="218.9" r="5.0" fill="#1a0fd0"/><circle cx="1922.7" cy="221.3" r="5.6" fill="#8a1040"/><circle cx="1922.7" cy="221.3" r="5.0" fill="#1a0fd0"/><circle cx="1940.1" cy="221.3" r="5.6" fill="#8a1040"/><circle cx="1940.1" cy="221.3" r="5.0" fill="#1a0fd0"/><line x1="2053.7" y1="167.3" x2="2476" y2="167.3" stroke="#e4e4e4" stroke-width="1.3"/><line x1="2053.7" y1="229.3" x2="2476" y2="229.3" stroke="#e4e4e4" stroke-width="1.3"/><line x1="2053.7" y1="291.2" x2="2476" y2="291.2" stroke="#e4e4e4" stroke-width="1.3"/><line x1="2053.7" y1="353.2" x2="2476" y2="353.2" stroke="#e4e4e4" stroke-width="1.3"/><line x1="2053.7" y1="415.2" x2="2476" y2="415.2" stroke="#444" stroke-width="1.6"/><line x1="2072.6" y1="415.2" x2="2072.6" y2="427.59999999999997" stroke="#444" stroke-width="1.4"/><line x1="2178.3" y1="415.2" x2="2178.3" y2="427.59999999999997" stroke="#444" stroke-width="1.4"/><line x1="2283.6" y1="415.2" x2="2283.6" y2="427.59999999999997" stroke="#444" stroke-width="1.4"/><line x1="2390.0" y1="415.2" x2="2390.0" y2="427.59999999999997" stroke="#444" stroke-width="1.4"/><polyline points="2055.6,346.2 2060.9,386.9 2066.2,360.5 2071.5,382.5 2074.1,342.9 2076.8,379.2 2079.4,375.9 2082.1,379.2 2087.4,386.9 2092.7,360.5 2095.3,380.3 2097.9,371.5 2100.6,367.1 2103.2,372.6 2105.9,372.6 2108.5,355.0 2111.2,372.6 2113.8,373.7 2116.4,323.0 2119.1,379.2 2121.7,378.1 2124.4,367.1 2127.0,374.8 2129.7,373.7 2135.0,360.5 2137.6,367.1 2140.2,364.9 2142.9,384.7 2145.5,377.0 2148.2,388.0 2150.8,383.6 2153.5,383.6 2156.1,380.3 2158.7,378.1 2161.4,380.3 2164.0,384.7 2166.7,378.1 2169.3,370.4 2172.0,370.4 2174.6,373.7 2177.3,358.3 2179.9,377.0 2182.5,380.3 2185.2,356.1 2190.5,364.9 2193.1,369.3 2195.8,361.6 2198.4,364.9 2201.0,330.7 2203.7,344.0 2206.3,341.8 2209.0,340.7 2211.6,342.9 2214.3,374.8 2216.9,360.5 2219.6,364.9 2222.2,370.4 2224.8,375.9 2227.5,355.0 2230.1,342.9 2232.8,382.5 2235.4,382.5 2238.1,380.3 2240.7,356.1 2243.3,345.1 2246.0,349.5 2248.6,352.8 2251.3,358.3 2253.9,364.9 2256.6,372.6 2259.2,338.5 2261.9,334.0 2264.5,332.9 2267.1,320.8 2270.0,329.6 2272.3,298.8 2275.0,329.6 2277.6,304.3 2280.3,325.2 2282.9,308.7 2285.6,318.6 2288.2,336.3 2290.8,341.8 2293.5,342.9 2296.1,340.7 2298.8,341.8 2301.4,318.6 2304.1,298.8 2306.7,325.2 2309.4,328.5 2312.0,330.7 2314.6,314.2 2317.3,305.4 2319.9,324.1 2322.6,326.3 2325.2,280.1 2327.9,296.6 2330.5,306.5 2333.1,296.6 2335.8,312.0 2338.4,319.7 2341.1,316.4 2343.7,316.4 2346.4,334.0 2349.0,316.4 2351.7,332.9 2354.3,334.0 2356.9,338.5 2359.6,324.1 2362.2,340.7 2364.9,340.7 2367.5,344.0 2370.2,328.5 2372.8,336.3 2375.4,348.4 2378.1,292.2 2380.7,303.2 2383.4,285.6 2386.0,304.3 2388.7,335.1 2391.3,334.0 2394.0,336.3 2396.6,340.7 2399.2,338.5 2401.9,324.1 2404.5,318.6 2407.2,328.5 2409.8,329.6 2412.5,329.6 2415.1,327.4 2417.7,318.6 2420.4,307.6 2423.0,327.4 2425.7,336.3 2428.3,337.4 2431.0,334.0 2433.6,323.0 2436.3,308.7 2438.9,327.4 2441.5,332.9 2444.2,331.8 2446.8,330.7 2449.5,314.2 2452.1,319.7 2454.8,296.6 2457.4,286.7 2460.0,284.5 2462.7,290.0 2465.3,305.4 2468.0,303.2 2470.6,315.3 2473.3,301.0 2475.9,318.6" fill="none" stroke="#f40d0d" stroke-width="1.4" stroke-linejoin="round"/><polyline points="2055.6,346.2 2058.3,393.1 2060.9,357.2 2063.6,357.2 2066.2,359.4 2068.9,332.9 2071.5,348.4 2074.1,340.7 2076.8,374.8 2079.4,352.8 2082.1,367.1 2084.7,366.0 2087.4,392.4 2090.0,380.3 2092.7,380.3 2095.3,380.3 2097.9,384.7 2100.6,377.0 2103.2,384.7 2105.9,372.6 2108.5,371.5 2111.2,386.9 2113.8,382.5 2116.4,347.3 2119.1,380.3 2121.7,395.3 2124.4,360.5 2127.0,390.2 2129.7,360.5 2132.3,361.6 2135.0,350.6 2137.6,359.4 2140.2,352.8 2142.9,371.5 2145.5,377.0 2148.2,371.5 2150.8,361.6 2153.5,384.7 2156.1,362.7 2158.7,380.3 2161.4,364.9 2164.0,352.8 2166.7,380.3 2169.3,340.7 2172.0,328.5 2174.6,371.5 2177.3,377.0 2179.9,378.1 2182.5,362.7 2185.2,390.2 2187.8,380.3 2190.5,374.8 2193.1,373.7 2195.8,378.1 2198.4,392.4 2201.0,348.4 2203.7,361.6 2206.3,359.4 2209.0,356.1 2211.6,380.3 2214.3,389.1 2216.9,390.2 2219.6,391.3 2222.2,395.3 2224.8,389.1 2227.5,330.7 2230.1,352.8 2232.8,388.0 2235.4,369.3 2238.1,375.9 2240.7,377.0 2243.3,351.7 2246.0,332.9 2248.6,345.1 2251.3,382.5 2253.9,374.8 2256.6,346.2 2259.2,364.9 2261.9,374.8 2264.5,377.0 2267.1,371.5 2270.0,357.2 2272.3,348.4 2275.0,367.1 2277.6,352.8 2280.3,340.7 2282.9,334.0 2285.6,360.5 2288.2,357.2 2290.8,338.5 2293.5,334.0 2296.1,355.0 2298.8,352.8 2301.4,350.6 2304.1,324.1 2306.7,339.6 2309.4,344.0 2312.0,355.0 2314.6,323.0 2317.3,301.0 2319.9,336.3 2322.6,335.1 2325.2,273.5 2327.9,271.9 2330.5,321.9 2333.1,329.6 2335.8,331.8 2338.4,293.3 2341.1,320.8 2343.7,349.5 2346.4,338.5 2349.0,341.8 2351.7,351.7 2354.3,364.9 2356.9,353.9 2359.6,341.8 2362.2,334.0 2364.9,328.5 2367.5,329.6 2370.2,346.2 2372.8,356.1 2375.4,364.9 2378.1,342.9 2380.7,336.3 2383.4,336.3 2386.0,312.0 2388.7,340.7 2391.3,364.9 2394.0,312.0 2396.6,323.0 2399.2,334.0 2401.9,342.9 2404.5,335.1 2407.2,324.1 2409.8,310.9 2412.5,335.1 2415.1,323.0 2417.7,309.8 2420.4,301.0 2423.0,323.0 2425.7,334.0 2428.3,340.7 2431.0,318.6 2433.6,360.5 2436.3,340.7 2438.9,337.4 2441.5,337.4 2444.2,364.9 2446.8,344.0 2449.5,306.5 2452.1,342.9 2454.8,345.1 2457.4,338.5 2460.0,325.2 2462.7,325.2 2465.3,352.8 2468.0,305.4 2470.6,335.1 2473.3,317.5 2475.9,306.5" fill="none" stroke="#138313" stroke-width="1.4" stroke-linejoin="round"/><polyline points="2055.6,301.0 2058.3,332.9 2060.9,325.2 2066.2,311.6 2068.9,328.5 2071.5,328.5 2074.1,303.6 2076.8,330.7 2079.4,310.9 2082.1,313.1 2084.7,335.6 2087.4,331.8 2092.7,305.8 2097.9,335.1 2100.6,334.7 2103.2,337.8 2105.9,338.0 2108.5,338.0 2111.2,330.7 2113.8,372.6 2116.4,324.1 2119.1,353.9 2121.7,346.2 2124.4,353.9 2127.0,359.4 2129.7,353.9 2135.0,328.5 2137.6,353.9 2140.2,351.7 2142.9,331.4 2148.2,355.0 2150.8,348.4 2156.1,355.0 2158.7,348.4 2161.4,347.7 2164.0,349.5 2166.7,334.0 2172.0,342.9 2177.3,357.2 2179.9,350.6 2182.5,348.4 2185.2,353.9 2187.8,330.7 2190.5,358.3 2193.1,367.1 2195.8,358.3 2198.4,366.0 2201.0,332.9 2203.7,334.0 2206.3,336.3 2209.0,341.8 2211.6,342.9 2214.3,362.7 2216.9,351.7 2219.6,338.5 2224.8,372.6 2227.5,307.6 2230.1,305.8 2232.8,349.5 2235.4,348.4 2238.1,355.0 2240.7,353.9 2246.0,340.7 2248.6,341.8 2251.3,367.1 2253.9,330.7 2256.6,338.5 2261.9,342.9 2264.5,337.4 2267.1,342.9 2270.0,327.4 2272.3,316.4 2275.0,335.1 2277.6,325.2 2280.3,330.7 2282.9,332.9 2285.6,314.2 2288.2,306.5 2290.8,307.2 2293.5,301.0 2296.1,309.8 2298.8,315.3 2301.4,293.3 2304.1,283.4 2306.7,319.7 2309.4,308.7 2312.0,310.9 2314.6,314.2 2317.3,296.6 2319.9,312.0 2322.6,317.5 2325.2,291.1 2327.9,310.9 2330.5,310.9 2333.1,309.8 2335.8,307.6 2338.4,301.0 2341.1,320.4 2343.7,319.1 2346.4,314.2 2349.0,293.3 2351.7,297.7 2354.3,307.6 2356.9,308.1 2359.6,286.7 2362.2,307.6 2364.9,309.8 2367.5,329.6 2370.2,314.2 2372.8,340.7 2375.4,324.1 2378.1,264.0 2380.7,285.6 2383.4,279.0 2386.0,283.4 2388.7,303.2 2391.3,309.8 2394.0,308.7 2396.6,314.2 2399.2,313.1 2401.9,305.4 2404.5,274.6 2407.2,273.5 2409.8,277.9 2412.5,269.1 2415.1,266.9 2417.7,265.8 2420.4,256.9 2423.0,264.6 2425.7,273.5 2428.3,269.1 2431.0,266.9 2433.6,285.6 2436.3,271.3 2438.9,283.4 2441.5,286.7 2444.2,288.9 2446.8,283.4 2449.5,234.9 2452.1,243.7 2454.8,251.4 2457.4,237.1 2460.0,205.2 2462.7,230.5 2465.3,225.0 2468.0,248.1 2470.6,251.4 2473.3,247.0 2475.9,215.1" fill="none" stroke="#0b0bea" stroke-width="1.4" stroke-linejoin="round"/></svg>
<span style="left:492.06px;top:438.16px;font-size:16px;color:#444;">13:00</span>
<span style="left:597.46px;top:438.16px;font-size:16px;color:#444;">14:00</span>
<span style="left:702.86px;top:438.16px;font-size:16px;color:#444;">15:00</span>
<span style="left:808.86px;top:438.16px;font-size:16px;color:#444;">16:00</span>
<span style="left:935.00px;top:162.26px;font-size:16px;color:#444;">60Hz</span>
<span style="left:935.00px;top:244.89px;font-size:16px;color:#444;">40Hz</span>
<span style="left:935.00px;top:327.52px;font-size:16px;color:#444;">20Hz</span>
<span style="left:935.00px;top:407.56px;font-size:16px;color:#444;">0Hz</span>
<span style="left:1066.96px;top:438.16px;font-size:16px;color:#444;">13:00</span>
<span style="left:1157.36px;top:438.16px;font-size:16px;color:#444;">14:00</span>
<span style="left:1247.56px;top:438.16px;font-size:16px;color:#444;">15:00</span>
<span style="left:1337.96px;top:438.16px;font-size:16px;color:#444;">16:00</span>
<span style="left:1011.54px;top:162.26px;font-size:16px;color:#444;">450V</span>
<span style="left:1011.54px;top:244.89px;font-size:16px;color:#444;">300V</span>
<span style="left:1011.54px;top:327.52px;font-size:16px;color:#444;">150V</span>
<span style="left:1029.30px;top:407.56px;font-size:16px;color:#444;">0V</span>
<span style="left:1451.30px;top:162.26px;font-size:16px;color:#444;">45kW</span>
<span style="left:1451.30px;top:244.89px;font-size:16px;color:#444;">30kW</span>
<span style="left:1451.30px;top:327.52px;font-size:16px;color:#444;">15kW</span>
<span style="left:1451.30px;top:407.56px;font-size:16px;color:#444;">0kW</span>
<span style="left:1534.06px;top:438.16px;font-size:16px;color:#444;">13:00</span>
<span style="left:1637.86px;top:438.16px;font-size:16px;color:#444;">14:00</span>
<span style="left:1742.16px;top:438.16px;font-size:16px;color:#444;">15:00</span>
<span style="left:1846.56px;top:438.16px;font-size:16px;color:#444;">16:00</span>
<span style="left:1973.00px;top:162.26px;font-size:16px;color:#444;">125%</span>
<span style="left:1973.00px;top:211.84px;font-size:16px;color:#444;">100%</span>
<span style="left:1973.00px;top:261.42px;font-size:16px;color:#444;">75%</span>
<span style="left:1973.00px;top:311.00px;font-size:16px;color:#444;">50%</span>
<span style="left:1973.00px;top:360.58px;font-size:16px;color:#444;">25%</span>
<span style="left:1973.00px;top:407.56px;font-size:16px;color:#444;">0%</span>
<span style="left:2053.56px;top:438.16px;font-size:16px;color:#444;">13:00</span>
<span style="left:2159.26px;top:438.16px;font-size:16px;color:#444;">14:00</span>
<span style="left:2264.56px;top:438.16px;font-size:16px;color:#444;">15:00</span>
<span style="left:2370.96px;top:438.16px;font-size:16px;color:#444;">16:00</span>
<span style="left:2497.00px;top:162.26px;font-size:16px;color:#444;">100A</span>
<span style="left:2497.00px;top:224.23px;font-size:16px;color:#444;">75A</span>
<span style="left:2497.00px;top:286.21px;font-size:16px;color:#444;">50A</span>
<span style="left:2497.00px;top:348.18px;font-size:16px;color:#444;">25A</span>
<span style="left:2497.00px;top:407.56px;font-size:16px;color:#444;">0A</span>
<svg style="left:0;top:0" width="2560" height="130"><polygon points="926.60,95.30 933.03,95.30 926.60,101.73" fill="#555"/><polygon points="942.20,95.30 935.76,95.30 942.20,101.73" fill="#555"/><polygon points="926.60,110.90 933.03,110.90 926.60,104.47" fill="#555"/><polygon points="942.20,110.90 935.76,110.90 942.20,104.47" fill="#555"/><path d="M929.04,97.74 L939.76,108.46 M939.76,97.74 L929.04,108.46" stroke="#555" stroke-width="4.00" fill="none"/><path d="M956.55,95.43 L957.12,93.55 L960.48,93.55 L961.05,95.43 L964.14,97.21 L966.06,96.77 L967.74,99.68 L966.39,101.12 L966.39,104.68 L967.74,106.12 L966.06,109.03 L964.14,108.59 L961.05,110.37 L960.48,112.25 L957.12,112.25 L956.55,110.37 L953.46,108.59 L951.54,109.03 L949.86,106.12 L951.21,104.68 L951.21,101.12 L949.86,99.68 L951.54,96.77 L953.46,97.21Z" fill="#29a3e0" stroke="#29a3e0" stroke-width="1.20" stroke-linejoin="round"/><path d="M951.00,102.90 a7.80,7.80 0 1,0 15.60,0 a7.80,7.80 0 1,0 -15.60,0Z" fill="#29a3e0"/><circle cx="958.80" cy="102.90" r="3.10" fill="#fff"/></svg>
<svg style="left:0;top:0" width="2560" height="130"><polygon points="1447.00,95.30 1453.43,95.30 1447.00,101.73" fill="#555"/><polygon points="1462.60,95.30 1456.16,95.30 1462.60,101.73" fill="#555"/><polygon points="1447.00,110.90 1453.43,110.90 1447.00,104.47" fill="#555"/><polygon points="1462.60,110.90 1456.16,110.90 1462.60,104.47" fill="#555"/><path d="M1449.44,97.74 L1460.16,108.46 M1460.16,97.74 L1449.44,108.46" stroke="#555" stroke-width="4.00" fill="none"/><path d="M1476.95,95.43 L1477.52,93.55 L1480.88,93.55 L1481.45,95.43 L1484.54,97.21 L1486.46,96.77 L1488.14,99.68 L1486.79,101.12 L1486.79,104.68 L1488.14,106.12 L1486.46,109.03 L1484.54,108.59 L1481.45,110.37 L1480.88,112.25 L1477.52,112.25 L1476.95,110.37 L1473.86,108.59 L1471.94,109.03 L1470.26,106.12 L1471.61,104.68 L1471.61,101.12 L1470.26,99.68 L1471.94,96.77 L1473.86,97.21Z" fill="#29a3e0" stroke="#29a3e0" stroke-width="1.20" stroke-linejoin="round"/><path d="M1471.40,102.90 a7.80,7.80 0 1,0 15.60,0 a7.80,7.80 0 1,0 -15.60,0Z" fill="#29a3e0"/><circle cx="1479.20" cy="102.90" r="3.10" fill="#fff"/></svg>
<svg style="left:0;top:0" width="2560" height="130"><polygon points="1967.70,95.30 1974.13,95.30 1967.70,101.73" fill="#555"/><polygon points="1983.30,95.30 1976.87,95.30 1983.30,101.73" fill="#555"/><polygon points="1967.70,110.90 1974.13,110.90 1967.70,104.47" fill="#555"/><polygon points="1983.30,110.90 1976.87,110.90 1983.30,104.47" fill="#555"/><path d="M1970.14,97.74 L1980.86,108.46 M1980.86,97.74 L1970.14,108.46" stroke="#555" stroke-width="4.00" fill="none"/><path d="M1997.55,95.43 L1998.12,93.55 L2001.48,93.55 L2002.05,95.43 L2005.14,97.21 L2007.06,96.77 L2008.74,99.68 L2007.39,101.12 L2007.39,104.68 L2008.74,106.12 L2007.06,109.03 L2005.14,108.59 L2002.05,110.37 L2001.48,112.25 L1998.12,112.25 L1997.55,110.37 L1994.46,108.59 L1992.54,109.03 L1990.86,106.12 L1992.21,104.68 L1992.21,101.12 L1990.86,99.68 L1992.54,96.77 L1994.46,97.21Z" fill="#29a3e0" stroke="#29a3e0" stroke-width="1.20" stroke-linejoin="round"/><path d="M1992.00,102.90 a7.80,7.80 0 1,0 15.60,0 a7.80,7.80 0 1,0 -15.60,0Z" fill="#29a3e0"/><circle cx="1999.80" cy="102.90" r="3.10" fill="#fff"/></svg>
<svg style="left:0;top:0" width="2560" height="130"><polygon points="2488.50,95.30 2494.93,95.30 2488.50,101.73" fill="#555"/><polygon points="2504.10,95.30 2497.66,95.30 2504.10,101.73" fill="#555"/><polygon points="2488.50,110.90 2494.93,110.90 2488.50,104.47" fill="#555"/><polygon points="2504.10,110.90 2497.66,110.90 2504.10,104.47" fill="#555"/><path d="M2490.94,97.74 L2501.66,108.46 M2501.66,97.74 L2490.94,108.46" stroke="#555" stroke-width="4.00" fill="none"/><path d="M2518.75,95.43 L2519.32,93.55 L2522.68,93.55 L2523.25,95.43 L2526.34,97.21 L2528.26,96.77 L2529.94,99.68 L2528.59,101.12 L2528.59,104.68 L2529.94,106.12 L2528.26,109.03 L2526.34,108.59 L2523.25,110.37 L2522.68,112.25 L2519.32,112.25 L2518.75,110.37 L2515.66,108.59 L2513.74,109.03 L2512.06,106.12 L2513.41,104.68 L2513.41,101.12 L2512.06,99.68 L2513.74,96.77 L2515.66,97.21Z" fill="#29a3e0" stroke="#29a3e0" stroke-width="1.20" stroke-linejoin="round"/><path d="M2513.20,102.90 a7.80,7.80 0 1,0 15.60,0 a7.80,7.80 0 1,0 -15.60,0Z" fill="#29a3e0"/><circle cx="2521.00" cy="102.90" r="3.10" fill="#fff"/></svg>
<svg style="left:0;top:0" width="2560" height="150"><line x1="681.9" y1="133.4" x2="703.9" y2="133.4" stroke="#b2151c" stroke-width="1.6"/><circle cx="693.1" cy="133.4" r="5.2" fill="#b2151c"/></svg>
<span style="left:711.40px;top:125.13px;font-size:16.5px;color:#444;letter-spacing:-0.368px;">Fgen (Hz)</span>
<svg style="left:0;top:0" width="2560" height="150"><line x1="1128.5" y1="133.4" x2="1148.9" y2="133.4" stroke="#b2151c" stroke-width="1.6"/><circle cx="1138.7" cy="133.4" r="5.2" fill="#b2151c"/><line x1="1267.1" y1="133.4" x2="1287.9" y2="133.4" stroke="#138313" stroke-width="1.6"/><polygon points="1271.9,133.4 1277.5,128.8 1283.1,133.4 1277.5,138.0" fill="#138313"/></svg>
<span style="left:1156.00px;top:125.13px;font-size:16.5px;color:#444;letter-spacing:-0.280px;">P_gen (kW)</span>
<span style="left:1295.70px;top:125.13px;font-size:16.5px;color:#444;letter-spacing:-0.389px;">UL1_L2 (V)</span>
<svg style="left:0;top:0" width="2560" height="150"><line x1="1573.4" y1="133.4" x2="1594.6" y2="133.4" stroke="#b2151c" stroke-width="1.6"/><circle cx="1583.9" cy="133.4" r="5.2" fill="#b2151c"/><line x1="1752.5" y1="133.4" x2="1773.9" y2="133.4" stroke="#0b0bea" stroke-width="1.6"/><polygon points="1757.4,133.4 1763,128.8 1768.6,133.4 1763,138.0" fill="#0b0bea"/></svg>
<span style="left:1602.20px;top:125.13px;font-size:16.5px;color:#444;letter-spacing:-0.305px;">Tankinhoud 1 (%)</span>
<span style="left:1781.00px;top:125.13px;font-size:16.5px;color:#444;letter-spacing:-0.257px;">Brandstof niveau intern (%)</span>
<svg style="left:0;top:0" width="2560" height="150"><line x1="2138.8" y1="133.4" x2="2159.3" y2="133.4" stroke="#f40d0d" stroke-width="1.6"/><circle cx="2149" cy="133.4" r="5.2" fill="#f40d0d"/><line x1="2250.4" y1="133.4" x2="2270.9" y2="133.4" stroke="#138313" stroke-width="1.6"/><polygon points="2255.0,133.4 2260.6,128.8 2266.2,133.4 2260.6,138.0" fill="#138313"/><line x1="2362.3" y1="133.4" x2="2382.9" y2="133.4" stroke="#0b0bea" stroke-width="1.6"/><rect x="2367.7999999999997" y="128.6" width="9.6" height="9.6" fill="#0b0bea"/></svg>
<span style="left:2166.30px;top:125.13px;font-size:16.5px;color:#444;letter-spacing:-0.180px;">IL_1 (A)</span>
<span style="left:2277.80px;top:125.13px;font-size:16.5px;color:#444;letter-spacing:-0.165px;">IL_2 (A)</span>
<span style="left:2390.20px;top:125.13px;font-size:16.5px;color:#444;letter-spacing:-0.294px;">IL_3 (A)</span>
<div style="left:612px;top:492px;width:800px;height:33px;background:#cccccc"></div>
<div style="left:612px;top:492px;width:3px;height:33px;background:#0b2345"></div>
<span style="left:686.45px;top:554.97px;font-size:20px;color:#1478c8;">1</span>
<div style="left:772px;top:492px;width:3px;height:33px;background:#0b2345"></div>
<span style="left:846.45px;top:554.97px;font-size:20px;color:#1478c8;">2</span>
<div style="left:932px;top:492px;width:3px;height:33px;background:#0b2345"></div>
<span style="left:1006.45px;top:554.97px;font-size:20px;color:#1478c8;">3</span>
<div style="left:1092px;top:492px;width:3px;height:33px;background:#0b2345"></div>
<span style="left:1166.45px;top:554.97px;font-size:20px;color:#1478c8;">4</span>
<div style="left:1252px;top:492px;width:3px;height:33px;background:#0b2345"></div>
<span style="left:1326.45px;top:554.97px;font-size:20px;color:#1478c8;">5</span>
<span style="left:485.80px;top:561.22px;font-size:20.3px;color:#222;font-weight:700;-webkit-text-stroke:0.5px currentColor;letter-spacing:0.335px;transform:scaleX(1.0850);transform-origin:0 0;">Loadbanks</span>
</section>
<section id="map-panel">
<svg id="map" style="left:478px;top:603.6px;overflow:hidden" width="2058" height="532.7" viewBox="478 603.6 2058 532.7"><rect x="478" y="603.6" width="2058" height="532.7" fill="#efeeea"/><path d="M521.4,965 L545.4,951.3 L579.6,951.3 L588.7,967.3 L561.3,987.9 L529.4,985.6Z" fill="#efe5e1" opacity=".9"/><path d="M1405,812 C1404,803 1420,806 1436,806 C1450,804 1458,799 1465,803 C1470,809 1466,822 1458,830 C1452,838 1455,848 1448,851 C1440,853 1436,842 1430,834 C1422,828 1408,826 1405,812Z" fill="#a9c7f0"/><line x1="1773.2" y1="990" x2="1773.2" y2="1140" stroke="#d4d4d2" stroke-width="1.2"/><path d="M829.6,608.8 L844.8,639.2 M828.9,629.0 L844.0,621.0 M828.9,629.0 L836.1,644.4 M754.6,692.7 L769.6,684.9 M767.2,686.0 L797.7,670.9 M802.3,667.4 L818.1,697.4 M822.3,656.7 L852.0,640.1 M839.6,647.5 L853.9,638.2 M839.6,647.5 L848.4,662.1 M854.2,639.8 L884.5,624.4 M854.2,639.8 L869.5,670.1 M868.8,632.0 L883.7,623.9 M883.6,624.1 L913.9,608.7 M883.6,624.1 L899.7,654.1 M902.0,614.3 L917.1,606.4 M902.0,614.3 L908.9,629.9 M775.7,697.5 L790.3,688.7 M775.7,697.5 L784.6,712.0 M793.8,687.9 L824.0,672.4 M793.8,687.9 L801.8,702.9 M809.0,679.8 L823.6,671.0 M809.0,679.8 L824.4,710.1 M828.2,669.6 L843.5,662.2 M828.2,669.6 L837.0,684.2 M847.9,659.1 L862.8,689.7 M864.6,650.2 L894.8,634.5 M864.6,650.2 L871.6,665.8 M880.8,641.6 L895.7,633.4 M880.8,641.6 L889.7,656.1 M893.1,635.1 L923.6,620.0 M893.1,635.1 L909.6,664.8 M912.4,624.8 L942.1,608.3 M912.4,624.8 L927.1,655.5 M944.4,607.8 L961.2,637.4 M743.8,735.4 L760.5,765.0 M760.7,726.4 L791.4,711.6 M760.7,726.4 L768.6,741.5 M777.9,717.2 L807.6,700.6 M777.9,717.2 L794.4,747.0 M791.7,709.9 L806.1,700.7 M791.7,709.9 L807.5,740.0 M807.3,701.7 L822.5,694.2 M807.3,701.7 L824.0,731.2 M823.0,693.3 L837.9,685.0 M823.0,693.3 L830.1,708.7 M843.0,682.7 L873.1,666.9 M862.3,672.4 L870.9,687.1 M876.9,664.6 L892.0,656.8 M890.6,657.3 L897.5,672.9 M911.4,646.3 L925.9,637.5 M924.7,639.2 L954.4,622.8 M924.7,639.2 L940.5,669.3 M937.3,632.5 L952.5,624.8 M937.3,632.5 L946.2,647.0 M957.7,621.7 L972.2,612.7 M970.8,614.7 L986.4,607.9 M970.8,614.7 L979.1,629.6 M756.1,747.3 L771.1,739.4 M756.1,747.3 L763.1,762.9 M771.1,739.3 L816.4,715.7 M784.9,732.0 L814.3,714.8 M784.9,732.0 L793.4,746.8 M797.9,725.1 L814.9,754.6 M813.5,716.8 L844.2,702.0 M813.5,716.8 L820.7,732.2 M832.5,706.7 L848.1,699.7 M832.5,706.7 L839.5,722.2 M846.8,699.1 L854.9,714.1 M864.4,689.8 L893.9,672.9 M878.7,682.1 L923.4,657.5 M899.3,671.2 L914.1,663.0 M899.3,671.2 L907.4,686.1 M919.7,660.4 L965.4,637.7 M919.7,660.4 L928.4,675.0 M934.6,652.4 L950.1,645.5 M948.5,645.0 L963.4,636.7 M967.4,635.0 L997.2,618.6 M967.4,635.0 L976.4,649.4 M987.3,624.4 L996.3,638.9 M756.3,766.6 L771.3,758.6 M771.7,758.4 L786.8,750.5 M792.6,747.3 L822.8,731.6 M792.6,747.3 L807.5,777.8 M842.6,720.7 L872.5,704.5 M842.6,720.7 L850.7,735.6 M876.4,702.7 L884.9,717.5 M889.1,695.9 L904.8,689.2 M901.3,689.5 L910.4,703.9 M916.3,681.5 L961.9,658.7 M916.3,681.5 L933.0,711.1 M930.6,673.9 L960.0,656.8 M949.5,663.9 L958.5,678.3 M963.3,656.5 L992.7,639.4 M982.5,646.3 L996.9,637.0 M982.5,646.3 L991.7,660.7 M793.0,770.3 L823.1,754.6 M810.2,761.2 L840.7,746.1 M826.9,752.3 L841.4,743.5 M845.2,742.6 L860.2,734.6 M858.5,735.5 L888.2,718.9 M858.5,735.5 L875.5,765.0 M870.6,729.1 L878.0,744.4 M884.5,721.7 L900.3,751.8 M900.6,713.1 L930.6,697.1 M931.5,696.7 L962.1,681.8 M931.5,696.7 L938.2,712.3 M946.1,688.9 L962.5,718.7 M963.9,679.4 L978.3,670.3 M963.9,679.4 L979.9,709.4 M856.3,758.0 L870.6,748.8 M856.3,758.0 L872.6,787.9 M873.1,749.1 L903.3,733.5 M873.1,749.1 L879.8,764.8 M922.0,723.0 L966.9,698.8 M934.2,716.6 L949.3,708.6 M934.2,716.6 L949.3,747.0 M951.1,707.6 L981.3,691.9 M951.1,707.6 L967.6,737.3 M971.7,696.6 L1001.1,679.5 M971.7,696.6 L980.7,711.1 M989.3,687.3 L997.0,702.4 M872.9,772.0 L902.4,755.0 M872.9,772.0 L881.5,786.7 M893.6,761.0 L902.4,775.6 M913.6,750.4 L929.1,743.3 M913.6,750.4 L922.5,764.9 M926.2,743.7 L941.2,735.7 M926.2,743.7 L941.1,774.2 M943.1,734.7 L958.8,727.8 M943.1,734.7 L950.6,749.9 M959.4,726.0 L973.9,717.0 M975.3,717.6 L990.4,709.9 M975.3,717.6 L992.5,746.9 M891.7,783.3 L921.5,766.9 M907.3,775.0 L923.6,804.8 M922.9,766.7 L938.4,759.5 M922.9,766.7 L932.2,781.0 M943.3,755.8 L973.9,740.9 M963.6,745.0 L978.5,736.7 M977.9,737.4 L987.2,751.7 M992.7,729.5 L1000.0,744.9 M897.5,797.8 L904.7,813.2 M915.7,788.1 L945.3,771.5 M915.7,788.1 L932.7,817.6 M952.4,768.6 L967.6,761.0 M952.4,768.6 L969.4,798.1 M972.4,758.0 L1002.6,742.4 M972.4,758.0 L987.4,788.5 M989.4,748.9 L996.9,764.2 M897.0,814.3 L927.4,799.0 M914.8,804.9 L944.3,787.9 M914.8,804.9 L931.3,834.6 M933.0,795.2 L939.7,810.9 M945.8,788.4 L961.3,818.6 M977.7,771.4 L993.1,801.8 M997.3,761.0 L1004.9,776.2 M900.2,830.8 L915.1,822.6 M944.8,807.1 L989.9,783.2 M965.4,796.1 L980.9,789.0 M933.1,833.3 L948.8,826.5 M933.1,833.3 L949.8,863.0 M952.1,823.2 L959.6,838.5 M970.7,813.3 L985.6,805.3 M970.7,813.3 L987.9,842.7 M990.8,802.7 L1000.0,817.0 M914.9,859.6 L929.3,850.5 M929.1,852.0 L943.8,843.5 M929.1,852.0 L937.5,866.8 M947.6,842.2 L961.9,833.0 M964.5,833.2 L994.0,816.1 M945.1,867.6 L960.2,860.0" fill="none" stroke="#d9d9d6" stroke-width="3.6" stroke-linecap="round"/><path d="M829.6,608.8 L844.8,639.2 M828.9,629.0 L844.0,621.0 M828.9,629.0 L836.1,644.4 M754.6,692.7 L769.6,684.9 M767.2,686.0 L797.7,670.9 M802.3,667.4 L818.1,697.4 M822.3,656.7 L852.0,640.1 M839.6,647.5 L853.9,638.2 M839.6,647.5 L848.4,662.1 M854.2,639.8 L884.5,624.4 M854.2,639.8 L869.5,670.1 M868.8,632.0 L883.7,623.9 M883.6,624.1 L913.9,608.7 M883.6,624.1 L899.7,654.1 M902.0,614.3 L917.1,606.4 M902.0,614.3 L908.9,629.9 M775.7,697.5 L790.3,688.7 M775.7,697.5 L784.6,712.0 M793.8,687.9 L824.0,672.4 M793.8,687.9 L801.8,702.9 M809.0,679.8 L823.6,671.0 M809.0,679.8 L824.4,710.1 M828.2,669.6 L843.5,662.2 M828.2,669.6 L837.0,684.2 M847.9,659.1 L862.8,689.7 M864.6,650.2 L894.8,634.5 M864.6,650.2 L871.6,665.8 M880.8,641.6 L895.7,633.4 M880.8,641.6 L889.7,656.1 M893.1,635.1 L923.6,620.0 M893.1,635.1 L909.6,664.8 M912.4,624.8 L942.1,608.3 M912.4,624.8 L927.1,655.5 M944.4,607.8 L961.2,637.4 M743.8,735.4 L760.5,765.0 M760.7,726.4 L791.4,711.6 M760.7,726.4 L768.6,741.5 M777.9,717.2 L807.6,700.6 M777.9,717.2 L794.4,747.0 M791.7,709.9 L806.1,700.7 M791.7,709.9 L807.5,740.0 M807.3,701.7 L822.5,694.2 M807.3,701.7 L824.0,731.2 M823.0,693.3 L837.9,685.0 M823.0,693.3 L830.1,708.7 M843.0,682.7 L873.1,666.9 M862.3,672.4 L870.9,687.1 M876.9,664.6 L892.0,656.8 M890.6,657.3 L897.5,672.9 M911.4,646.3 L925.9,637.5 M924.7,639.2 L954.4,622.8 M924.7,639.2 L940.5,669.3 M937.3,632.5 L952.5,624.8 M937.3,632.5 L946.2,647.0 M957.7,621.7 L972.2,612.7 M970.8,614.7 L986.4,607.9 M970.8,614.7 L979.1,629.6 M756.1,747.3 L771.1,739.4 M756.1,747.3 L763.1,762.9 M771.1,739.3 L816.4,715.7 M784.9,732.0 L814.3,714.8 M784.9,732.0 L793.4,746.8 M797.9,725.1 L814.9,754.6 M813.5,716.8 L844.2,702.0 M813.5,716.8 L820.7,732.2 M832.5,706.7 L848.1,699.7 M832.5,706.7 L839.5,722.2 M846.8,699.1 L854.9,714.1 M864.4,689.8 L893.9,672.9 M878.7,682.1 L923.4,657.5 M899.3,671.2 L914.1,663.0 M899.3,671.2 L907.4,686.1 M919.7,660.4 L965.4,637.7 M919.7,660.4 L928.4,675.0 M934.6,652.4 L950.1,645.5 M948.5,645.0 L963.4,636.7 M967.4,635.0 L997.2,618.6 M967.4,635.0 L976.4,649.4 M987.3,624.4 L996.3,638.9 M756.3,766.6 L771.3,758.6 M771.7,758.4 L786.8,750.5 M792.6,747.3 L822.8,731.6 M792.6,747.3 L807.5,777.8 M842.6,720.7 L872.5,704.5 M842.6,720.7 L850.7,735.6 M876.4,702.7 L884.9,717.5 M889.1,695.9 L904.8,689.2 M901.3,689.5 L910.4,703.9 M916.3,681.5 L961.9,658.7 M916.3,681.5 L933.0,711.1 M930.6,673.9 L960.0,656.8 M949.5,663.9 L958.5,678.3 M963.3,656.5 L992.7,639.4 M982.5,646.3 L996.9,637.0 M982.5,646.3 L991.7,660.7 M793.0,770.3 L823.1,754.6 M810.2,761.2 L840.7,746.1 M826.9,752.3 L841.4,743.5 M845.2,742.6 L860.2,734.6 M858.5,735.5 L888.2,718.9 M858.5,735.5 L875.5,765.0 M870.6,729.1 L878.0,744.4 M884.5,721.7 L900.3,751.8 M900.6,713.1 L930.6,697.1 M931.5,696.7 L962.1,681.8 M931.5,696.7 L938.2,712.3 M946.1,688.9 L962.5,718.7 M963.9,679.4 L978.3,670.3 M963.9,679.4 L979.9,709.4 M856.3,758.0 L870.6,748.8 M856.3,758.0 L872.6,787.9 M873.1,749.1 L903.3,733.5 M873.1,749.1 L879.8,764.8 M922.0,723.0 L966.9,698.8 M934.2,716.6 L949.3,708.6 M934.2,716.6 L949.3,747.0 M951.1,707.6 L981.3,691.9 M951.1,707.6 L967.6,737.3 M971.7,696.6 L1001.1,679.5 M971.7,696.6 L980.7,711.1 M989.3,687.3 L997.0,702.4 M872.9,772.0 L902.4,755.0 M872.9,772.0 L881.5,786.7 M893.6,761.0 L902.4,775.6 M913.6,750.4 L929.1,743.3 M913.6,750.4 L922.5,764.9 M926.2,743.7 L941.2,735.7 M926.2,743.7 L941.1,774.2 M943.1,734.7 L958.8,727.8 M943.1,734.7 L950.6,749.9 M959.4,726.0 L973.9,717.0 M975.3,717.6 L990.4,709.9 M975.3,717.6 L992.5,746.9 M891.7,783.3 L921.5,766.9 M907.3,775.0 L923.6,804.8 M922.9,766.7 L938.4,759.5 M922.9,766.7 L932.2,781.0 M943.3,755.8 L973.9,740.9 M963.6,745.0 L978.5,736.7 M977.9,737.4 L987.2,751.7 M992.7,729.5 L1000.0,744.9 M897.5,797.8 L904.7,813.2 M915.7,788.1 L945.3,771.5 M915.7,788.1 L932.7,817.6 M952.4,768.6 L967.6,761.0 M952.4,768.6 L969.4,798.1 M972.4,758.0 L1002.6,742.4 M972.4,758.0 L987.4,788.5 M989.4,748.9 L996.9,764.2 M897.0,814.3 L927.4,799.0 M914.8,804.9 L944.3,787.9 M914.8,804.9 L931.3,834.6 M933.0,795.2 L939.7,810.9 M945.8,788.4 L961.3,818.6 M977.7,771.4 L993.1,801.8 M997.3,761.0 L1004.9,776.2 M900.2,830.8 L915.1,822.6 M944.8,807.1 L989.9,783.2 M965.4,796.1 L980.9,789.0 M933.1,833.3 L948.8,826.5 M933.1,833.3 L949.8,863.0 M952.1,823.2 L959.6,838.5 M970.7,813.3 L985.6,805.3 M970.7,813.3 L987.9,842.7 M990.8,802.7 L1000.0,817.0 M914.9,859.6 L929.3,850.5 M929.1,852.0 L943.8,843.5 M929.1,852.0 L937.5,866.8 M947.6,842.2 L961.9,833.0 M964.5,833.2 L994.0,816.1 M945.1,867.6 L960.2,860.0" fill="none" stroke="#f9f9f8" stroke-width="2.1" stroke-linecap="round"/><path d="M2021.2,625.5 L2056.8,615.5 M2040.4,620.7 L2094.2,607.0 M2040.4,620.7 L2050.5,656.4 M2064.0,614.9 L2081.8,609.9 M2097.5,606.5 L2102.1,624.4 M2032.0,644.6 L2036.6,662.5 M2050.5,640.0 L2068.1,634.2 M2050.5,640.0 L2055.7,657.7 M2094.5,629.0 L2112.7,625.5 M2094.5,629.0 L2102.3,665.2 M2109.1,625.4 L2127.2,621.4 M2109.1,625.4 L2113.8,643.2 M2124.8,621.4 L2142.9,617.6 M2124.8,621.4 L2129.7,639.3 M2148.3,615.6 L2166.5,611.9 M2148.3,615.6 L2157.4,651.4 M2054.7,662.8 L2072.5,657.6 M2054.7,662.8 L2063.5,698.7 M2113.8,648.0 L2149.6,638.7 M2158.8,636.8 L2194.9,628.6 M2181.6,631.1 L2189.4,667.3 M2204.7,625.4 L2258.3,611.0 M2204.7,625.4 L2209.2,643.3 M2227.7,619.6 L2245.9,616.5 M2249.2,614.2 L2258.4,650.1 M2271.8,608.6 L2275.5,626.8 M2022.3,690.0 L2040.0,684.7 M2022.3,690.0 L2032.4,725.6 M2044.4,684.5 L2062.2,679.4 M2044.4,684.5 L2048.1,702.6 M2061.5,680.2 L2079.2,674.5 M2085.9,674.1 L2094.7,710.1 M2100.9,670.4 L2136.8,661.7 M2119.4,665.8 L2137.6,662.3 M2155.0,656.9 L2172.9,652.6 M2179.6,650.8 L2197.4,645.8 M2204.5,644.6 L2208.0,662.8 M2243.2,634.9 L2252.4,670.8 M2282.9,625.0 L2318.9,616.7 M2304.3,619.7 L2322.0,614.0 M2319.2,616.0 L2355.3,608.1 M2319.2,616.0 L2329.3,651.6 M2033.7,703.7 L2051.6,699.0 M2050.5,699.5 L2086.3,690.3 M2073.9,693.7 L2110.1,685.9 M2073.9,693.7 L2081.8,729.8 M2092.1,689.1 L2127.8,679.4 M2092.1,689.1 L2100.7,725.1 M2111.0,684.4 L2129.2,680.9 M2111.0,684.4 L2119.4,720.4 M2128.4,680.1 L2146.3,675.4 M2128.4,680.1 L2138.1,715.8 M2147.0,675.4 L2164.9,670.4 M2186.4,665.6 L2191.8,683.3 M2208.8,660.0 L2244.9,652.0 M2208.8,660.0 L2214.5,677.7 M2226.8,655.5 L2236.8,691.2 M2243.7,651.3 L2279.5,642.0 M2243.7,651.3 L2248.1,669.3 M2275.1,643.5 L2293.2,639.8 M2297.8,637.8 L2334.0,630.3 M2297.8,637.8 L2307.4,673.6 M2314.7,633.6 L2333.0,630.4 M2314.7,633.6 L2319.2,651.6 M2344.7,626.2 L2380.5,616.8 M2344.7,626.2 L2350.2,643.8 M2364.4,621.2 L2400.5,613.2 M2364.4,621.2 L2367.4,639.6 M2384.2,616.3 L2389.1,634.1 M2424.1,606.3 L2433.6,642.1 M2052.9,723.7 L2089.1,716.0 M2068.6,719.8 L2077.8,755.6 M2087.7,715.0 L2123.9,707.1 M2106.6,710.3 L2124.9,706.9 M2106.6,710.3 L2115.0,746.3 M2122.2,706.4 L2140.0,701.4 M2139.3,702.1 L2174.9,692.1 M2139.3,702.1 L2147.7,738.1 M2163.0,696.2 L2180.8,691.0 M2163.0,696.2 L2166.1,714.5 M2180.3,691.9 L2216.1,682.3 M2200.9,686.8 L2236.7,677.6 M2224.6,680.9 L2228.7,698.9 M2240.2,677.0 L2257.9,671.3 M2301.2,661.7 L2318.9,656.1 M2322.8,656.4 L2358.6,647.0 M2345.7,650.7 L2399.6,637.6 M2345.7,650.7 L2349.2,668.8 M2362.8,646.4 L2381.0,643.1 M2362.8,646.4 L2366.1,664.6 M2379.0,642.4 L2383.6,660.3 M2423.7,631.2 L2459.4,621.2 M2448.5,625.0 L2484.8,617.3 M2448.5,625.0 L2458.7,660.6 M2463.1,621.4 L2481.3,618.2 M2486.6,615.5 L2504.3,610.3 M2507.1,610.4 L2525.3,607.1 M2020.3,753.9 L2029.4,789.8 M2041.9,748.5 L2059.9,744.5 M2063.5,743.1 L2081.8,739.9 M2063.5,743.1 L2071.5,779.3 M2081.1,738.7 L2099.1,734.7 M2081.1,738.7 L2086.3,756.5 M2098.2,734.5 L2133.8,724.5 M2098.2,734.5 L2103.7,752.2 M2112.7,730.9 L2130.8,726.8 M2112.7,730.9 L2115.8,749.1 M2134.8,725.4 L2152.9,721.8 M2156.6,719.9 L2166.9,755.5 M2175.0,715.3 L2178.6,733.5 M2191.7,711.2 L2209.9,707.8 M2191.7,711.2 L2200.2,747.2 M2214.8,705.4 L2233.0,702.0 M2235.4,700.3 L2271.1,690.8 M2252.7,695.9 L2288.9,687.9 M2276.3,690.1 L2294.0,684.2 M2276.3,690.1 L2283.9,726.3 M2299.5,684.3 L2335.4,675.2 M2318.3,679.6 L2354.5,672.0 M2340.3,674.1 L2349.3,710.0 M2404.3,658.2 L2407.5,676.4 M2419.9,654.3 L2456.0,646.1 M2419.9,654.3 L2424.2,672.3 M2437.2,649.9 L2444.9,686.2 M2458.3,644.7 L2494.0,635.1 M2478.1,639.8 L2496.1,635.5 M2501.7,633.9 L2519.6,629.2 M2501.7,633.9 L2511.1,669.7 M2030.0,770.7 L2038.3,806.8 M2054.0,764.7 L2062.5,800.7 M2070.4,760.6 L2078.1,796.8 M2089.1,756.0 L2107.0,751.3 M2089.1,756.0 L2092.3,774.2 M2109.1,751.0 L2113.4,769.0 M2124.1,747.2 L2178.2,734.8 M2145.8,741.8 L2164.0,738.1 M2168.8,736.1 L2205.0,728.5 M2192.0,730.3 L2228.0,721.8 M2192.0,730.3 L2199.8,766.5 M2235.7,719.4 L2271.9,711.9 M2235.7,719.4 L2240.4,737.3 M2255.5,714.5 L2291.4,705.4 M2273.0,710.1 L2308.7,700.6 M2273.0,710.1 L2278.8,727.8 M2295.2,704.6 L2349.3,692.2 M2295.2,704.6 L2304.8,740.3 M2312.4,700.3 L2317.8,718.0 M2359.2,688.6 L2376.9,683.0 M2383.6,682.6 L2387.4,700.7 M2425.9,672.0 L2461.6,662.0 M2425.9,672.0 L2436.2,707.6 M2447.6,666.6 L2483.7,658.5 M2467.5,661.6 L2485.5,657.0 M2517.8,649.1 L2522.1,667.1 M2033.4,787.2 L2042.7,823.0 M2057.4,781.2 L2093.4,772.8 M2079.4,775.7 L2115.1,765.7 M2100.5,770.5 L2136.6,762.4 M2100.5,770.5 L2108.5,806.6 M2114.9,766.9 L2118.4,785.1 M2133.0,762.4 L2151.0,757.9 M2158.1,756.1 L2194.2,748.1 M2178.8,751.0 L2197.0,747.8 M2178.8,751.0 L2186.9,787.1 M2194.6,747.0 L2199.1,765.0 M2217.5,741.3 L2253.4,732.2 M2236.4,736.6 L2272.2,727.6 M2236.4,736.6 L2245.9,772.3 M2295.0,722.0 L2312.9,717.1 M2295.0,722.0 L2298.5,740.2 M2397.5,696.4 L2415.5,692.0 M2397.5,696.4 L2403.3,714.0 M2421.7,690.4 L2457.3,680.1 M2421.7,690.4 L2429.8,726.5 M2446.8,684.1 L2454.7,720.3 M2470.1,678.3 L2506.3,670.3 M2470.1,678.3 L2480.4,713.9 M2495.0,672.1 L2513.2,669.0 M2495.0,672.1 L2500.5,689.8 M2018.9,812.8 L2036.9,808.7 M2038.7,807.9 L2056.9,804.6 M2053.9,804.1 L2057.0,822.4 M2077.4,798.2 L2095.5,794.2 M2099.2,792.8 L2117.4,789.1 M2123.4,786.8 L2131.0,823.0 M2144.8,781.4 L2180.8,773.2 M2144.8,781.4 L2150.4,799.1 M2162.6,777.0 L2172.6,812.6 M2182.2,772.1 L2218.4,764.4 M2203.5,766.8 L2239.3,757.1 M2223.7,761.8 L2259.9,753.9 M2223.7,761.8 L2228.2,779.7 M2246.4,756.1 L2264.5,752.2 M2246.4,756.1 L2255.7,791.9 M2262.5,752.1 L2298.6,743.8 M2262.5,752.1 L2270.3,788.3 M2277.5,748.3 L2295.8,745.3 M2277.5,748.3 L2285.1,784.6 M2294.6,744.1 L2298.1,762.3 M2327.0,736.0 L2332.9,753.6 M2362.9,727.0 L2398.6,717.4 M2424.8,711.6 L2460.7,702.4 M2424.8,711.6 L2432.4,747.8 M2449.2,705.5 L2485.2,697.2 M2449.2,705.5 L2453.9,723.4 M2466.4,701.2 L2484.5,697.1 M2484.9,696.6 L2521.1,689.0 M2484.9,696.6 L2490.1,714.4 M2508.1,690.8 L2516.6,726.9 M2039.1,824.2 L2075.3,816.6 M2039.1,824.2 L2047.0,860.4 M2062.4,818.4 L2080.8,815.4 M2062.4,818.4 L2067.9,836.1 M2082.1,813.5 L2136.1,800.9 M2082.1,813.5 L2090.3,849.6 M2101.3,808.7 L2105.2,826.8 M2121.6,803.6 L2175.7,791.2 M2121.6,803.6 L2131.5,839.3 M2138.3,799.5 L2156.2,794.8 M2138.3,799.5 L2141.4,817.8 M2158.1,794.5 L2162.7,812.4 M2202.1,783.6 L2256.3,771.2 M2202.1,783.6 L2212.1,819.2 M2246.1,772.6 L2281.7,762.5 M2246.1,772.6 L2249.7,790.8 M2330.2,751.6 L2366.1,742.8 M2409.8,731.8 L2417.4,768.0 M2429.4,726.9 L2447.2,722.0 M2429.4,726.9 L2437.9,762.9 M2467.3,717.4 L2485.3,712.9 M2484.2,713.2 L2501.8,707.3 M2507.9,707.3 L2512.2,725.3 M2522.9,703.6 L2526.8,721.7 M2040.1,843.3 L2076.3,835.6 M2040.1,843.3 L2048.0,879.4 M2058.5,838.7 L2076.6,835.0 M2058.5,838.7 L2067.8,874.5 M2077.3,834.0 L2095.0,828.5 M2096.1,829.3 L2105.6,865.1 M2114.0,824.8 L2167.6,810.4 M2131.6,820.5 L2149.9,817.4 M2131.6,820.5 L2140.6,856.3 M2150.9,815.6 L2169.2,812.5 M2175.9,809.4 L2211.9,800.8 M2175.9,809.4 L2179.0,827.7 M2212.1,800.4 L2247.7,790.5 M2233.6,795.0 L2269.3,785.4 M2272.7,785.3 L2308.8,777.4 M2295.5,779.6 L2300.7,797.4 M2339.5,768.6 L2375.2,758.9 M2401.1,753.3 L2418.9,748.4 M2401.1,753.3 L2406.3,771.0 M2415.9,749.6 L2451.8,740.4 M2415.9,749.6 L2425.9,785.2 M2439.8,743.6 L2442.9,761.9 M2454.6,739.9 L2490.8,732.2 M2454.6,739.9 L2458.4,758.0 M2475.8,734.6 L2484.8,770.5 M2021.5,871.5 L2039.4,866.6 M2021.5,871.5 L2024.8,889.7 M2040.1,866.9 L2047.8,903.1 M2060.2,861.9 L2095.8,851.6 M2060.2,861.9 L2067.9,898.1 M2083.3,856.1 L2100.9,850.2 M2108.0,849.9 L2144.1,842.0 M2133.1,843.7 L2136.4,861.9 M2148.2,839.9 L2166.3,836.0 M2148.2,839.9 L2152.7,857.9 M2163.0,836.2 L2168.4,854.0 M2183.0,831.2 L2218.8,822.2 M2202.9,826.3 L2220.8,821.8 M2202.9,826.3 L2207.2,844.3 M2242.8,816.3 L2278.9,807.9 M2281.5,806.7 L2317.4,797.7 M2328.0,795.1 L2332.5,813.0 M2385.9,780.6 L2403.5,774.9 M2385.9,780.6 L2391.4,798.3 M2407.8,775.2 L2425.7,770.7 M2427.6,770.3 L2432.4,788.1 M2443.2,766.4 L2479.0,757.0 M2443.2,766.4 L2453.2,802.0 M2463.2,761.4 L2481.3,757.7 M2463.2,761.4 L2469.0,779.0 M2486.5,755.6 L2504.3,750.5 M2504.0,751.2 L2521.8,746.1 M2032.3,888.2 L2050.0,882.8 M2053.3,883.0 L2089.2,873.9 M2072.3,878.3 L2077.3,896.1 M2095.3,872.5 L2112.9,867.0 M2149.0,859.1 L2185.2,851.3 M2304.7,820.3 L2322.4,814.8 M2326.4,814.9 L2362.4,806.3 M2344.9,810.3 L2349.4,828.3 M2361.2,806.2 L2414.6,791.4 M2385.6,800.2 L2421.4,791.1 M2427.7,789.7 L2445.3,784.1 M2452.6,783.4 L2488.4,774.1 M2468.7,779.4 L2486.3,773.5 M2468.7,779.4 L2473.5,797.3 M2487.9,774.6 L2505.8,769.7 M2487.9,774.6 L2497.2,810.5 M2530.5,764.0 L2535.3,781.9 M2318.6,841.0 L2354.2,830.9 M2452.6,807.6 L2488.5,798.6 M2515.3,792.0 L2533.5,788.2 M2472.6,819.9 L2508.2,809.8 M1508.3,1017.6 L1523.9,1014.1 M1508.3,1017.6 L1514.8,1048.9 M1540.6,1011.9 L1544.5,1027.4 M1556.8,1009.0 L1572.5,1006.0 M1574.8,1005.8 L1580.8,1037.3 M1596.0,1002.1 L1600.2,1033.9 M1510.0,1031.7 L1525.9,1030.1 M1523.7,1029.3 L1555.1,1023.6 M1523.7,1029.3 L1525.7,1045.2 M1544.5,1025.7 L1576.1,1020.8 M1559.3,1023.0 L1565.0,1054.5 M1576.1,1020.1 L1577.7,1036.0 M1591.5,1017.4 L1607.3,1015.0 M1591.5,1017.4 L1595.9,1049.1 M1516.1,1046.7 L1531.7,1043.1 M1516.1,1046.7 L1518.8,1062.5 M1547.0,1041.2 L1578.3,1034.5 M1547.0,1041.2 L1553.4,1072.6 M1566.3,1037.8 L1581.8,1033.7 M1566.3,1037.8 L1570.0,1053.4 M1582.7,1034.9 L1585.3,1050.7 M1599.0,1032.1 L1602.9,1047.6 M1517.2,1060.2 L1548.8,1055.3 M1537.5,1056.6 L1569.1,1051.7 M1552.2,1054.0 L1583.5,1047.3 M1552.2,1054.0 L1555.0,1069.8 M1603.7,1045.0 L1605.4,1060.9 M1617.9,1042.5 L1623.5,1074.0 M1554.0,1069.2 L1569.9,1067.0 M1592.1,1062.5 L1607.9,1059.7 M1467.5,801.7 L1468.2,823.7 M1481.7,801.7 L1481.6,823.7 M1471.8,814.8 L1482.8,815.5 M1471.8,814.8 L1470.4,836.8 M1475.8,827.9 L1477.0,838.9 M1472.6,840.4 L1473.1,862.4 M1470.0,850.4 L1470.2,872.4 M1475.5,861.1 L1474.5,883.1 M1468.2,888.7 L1479.2,890.0 M1468.2,888.7 L1467.0,899.7 M1482.0,888.7 L1481.6,899.7 M1473.5,907.6 L1474.0,918.6 M1475.7,916.5 L1475.0,927.5 M1466.9,930.6 L1477.9,930.9 M1466.9,930.6 L1466.2,952.6 M1481.1,930.6 L1481.5,952.6 M1470.9,941.5 L1481.9,941.4 M1482.3,941.5 L1481.9,963.5 M1477.5,961.7 L1476.4,972.7 M1478.1,972.6 L1477.4,983.6" fill="none" stroke="#d6d6d3" stroke-width="4.2" stroke-linecap="round"/><path d="M2021.2,625.5 L2056.8,615.5 M2040.4,620.7 L2094.2,607.0 M2040.4,620.7 L2050.5,656.4 M2064.0,614.9 L2081.8,609.9 M2097.5,606.5 L2102.1,624.4 M2032.0,644.6 L2036.6,662.5 M2050.5,640.0 L2068.1,634.2 M2050.5,640.0 L2055.7,657.7 M2094.5,629.0 L2112.7,625.5 M2094.5,629.0 L2102.3,665.2 M2109.1,625.4 L2127.2,621.4 M2109.1,625.4 L2113.8,643.2 M2124.8,621.4 L2142.9,617.6 M2124.8,621.4 L2129.7,639.3 M2148.3,615.6 L2166.5,611.9 M2148.3,615.6 L2157.4,651.4 M2054.7,662.8 L2072.5,657.6 M2054.7,662.8 L2063.5,698.7 M2113.8,648.0 L2149.6,638.7 M2158.8,636.8 L2194.9,628.6 M2181.6,631.1 L2189.4,667.3 M2204.7,625.4 L2258.3,611.0 M2204.7,625.4 L2209.2,643.3 M2227.7,619.6 L2245.9,616.5 M2249.2,614.2 L2258.4,650.1 M2271.8,608.6 L2275.5,626.8 M2022.3,690.0 L2040.0,684.7 M2022.3,690.0 L2032.4,725.6 M2044.4,684.5 L2062.2,679.4 M2044.4,684.5 L2048.1,702.6 M2061.5,680.2 L2079.2,674.5 M2085.9,674.1 L2094.7,710.1 M2100.9,670.4 L2136.8,661.7 M2119.4,665.8 L2137.6,662.3 M2155.0,656.9 L2172.9,652.6 M2179.6,650.8 L2197.4,645.8 M2204.5,644.6 L2208.0,662.8 M2243.2,634.9 L2252.4,670.8 M2282.9,625.0 L2318.9,616.7 M2304.3,619.7 L2322.0,614.0 M2319.2,616.0 L2355.3,608.1 M2319.2,616.0 L2329.3,651.6 M2033.7,703.7 L2051.6,699.0 M2050.5,699.5 L2086.3,690.3 M2073.9,693.7 L2110.1,685.9 M2073.9,693.7 L2081.8,729.8 M2092.1,689.1 L2127.8,679.4 M2092.1,689.1 L2100.7,725.1 M2111.0,684.4 L2129.2,680.9 M2111.0,684.4 L2119.4,720.4 M2128.4,680.1 L2146.3,675.4 M2128.4,680.1 L2138.1,715.8 M2147.0,675.4 L2164.9,670.4 M2186.4,665.6 L2191.8,683.3 M2208.8,660.0 L2244.9,652.0 M2208.8,660.0 L2214.5,677.7 M2226.8,655.5 L2236.8,691.2 M2243.7,651.3 L2279.5,642.0 M2243.7,651.3 L2248.1,669.3 M2275.1,643.5 L2293.2,639.8 M2297.8,637.8 L2334.0,630.3 M2297.8,637.8 L2307.4,673.6 M2314.7,633.6 L2333.0,630.4 M2314.7,633.6 L2319.2,651.6 M2344.7,626.2 L2380.5,616.8 M2344.7,626.2 L2350.2,643.8 M2364.4,621.2 L2400.5,613.2 M2364.4,621.2 L2367.4,639.6 M2384.2,616.3 L2389.1,634.1 M2424.1,606.3 L2433.6,642.1 M2052.9,723.7 L2089.1,716.0 M2068.6,719.8 L2077.8,755.6 M2087.7,715.0 L2123.9,707.1 M2106.6,710.3 L2124.9,706.9 M2106.6,710.3 L2115.0,746.3 M2122.2,706.4 L2140.0,701.4 M2139.3,702.1 L2174.9,692.1 M2139.3,702.1 L2147.7,738.1 M2163.0,696.2 L2180.8,691.0 M2163.0,696.2 L2166.1,714.5 M2180.3,691.9 L2216.1,682.3 M2200.9,686.8 L2236.7,677.6 M2224.6,680.9 L2228.7,698.9 M2240.2,677.0 L2257.9,671.3 M2301.2,661.7 L2318.9,656.1 M2322.8,656.4 L2358.6,647.0 M2345.7,650.7 L2399.6,637.6 M2345.7,650.7 L2349.2,668.8 M2362.8,646.4 L2381.0,643.1 M2362.8,646.4 L2366.1,664.6 M2379.0,642.4 L2383.6,660.3 M2423.7,631.2 L2459.4,621.2 M2448.5,625.0 L2484.8,617.3 M2448.5,625.0 L2458.7,660.6 M2463.1,621.4 L2481.3,618.2 M2486.6,615.5 L2504.3,610.3 M2507.1,610.4 L2525.3,607.1 M2020.3,753.9 L2029.4,789.8 M2041.9,748.5 L2059.9,744.5 M2063.5,743.1 L2081.8,739.9 M2063.5,743.1 L2071.5,779.3 M2081.1,738.7 L2099.1,734.7 M2081.1,738.7 L2086.3,756.5 M2098.2,734.5 L2133.8,724.5 M2098.2,734.5 L2103.7,752.2 M2112.7,730.9 L2130.8,726.8 M2112.7,730.9 L2115.8,749.1 M2134.8,725.4 L2152.9,721.8 M2156.6,719.9 L2166.9,755.5 M2175.0,715.3 L2178.6,733.5 M2191.7,711.2 L2209.9,707.8 M2191.7,711.2 L2200.2,747.2 M2214.8,705.4 L2233.0,702.0 M2235.4,700.3 L2271.1,690.8 M2252.7,695.9 L2288.9,687.9 M2276.3,690.1 L2294.0,684.2 M2276.3,690.1 L2283.9,726.3 M2299.5,684.3 L2335.4,675.2 M2318.3,679.6 L2354.5,672.0 M2340.3,674.1 L2349.3,710.0 M2404.3,658.2 L2407.5,676.4 M2419.9,654.3 L2456.0,646.1 M2419.9,654.3 L2424.2,672.3 M2437.2,649.9 L2444.9,686.2 M2458.3,644.7 L2494.0,635.1 M2478.1,639.8 L2496.1,635.5 M2501.7,633.9 L2519.6,629.2 M2501.7,633.9 L2511.1,669.7 M2030.0,770.7 L2038.3,806.8 M2054.0,764.7 L2062.5,800.7 M2070.4,760.6 L2078.1,796.8 M2089.1,756.0 L2107.0,751.3 M2089.1,756.0 L2092.3,774.2 M2109.1,751.0 L2113.4,769.0 M2124.1,747.2 L2178.2,734.8 M2145.8,741.8 L2164.0,738.1 M2168.8,736.1 L2205.0,728.5 M2192.0,730.3 L2228.0,721.8 M2192.0,730.3 L2199.8,766.5 M2235.7,719.4 L2271.9,711.9 M2235.7,719.4 L2240.4,737.3 M2255.5,714.5 L2291.4,705.4 M2273.0,710.1 L2308.7,700.6 M2273.0,710.1 L2278.8,727.8 M2295.2,704.6 L2349.3,692.2 M2295.2,704.6 L2304.8,740.3 M2312.4,700.3 L2317.8,718.0 M2359.2,688.6 L2376.9,683.0 M2383.6,682.6 L2387.4,700.7 M2425.9,672.0 L2461.6,662.0 M2425.9,672.0 L2436.2,707.6 M2447.6,666.6 L2483.7,658.5 M2467.5,661.6 L2485.5,657.0 M2517.8,649.1 L2522.1,667.1 M2033.4,787.2 L2042.7,823.0 M2057.4,781.2 L2093.4,772.8 M2079.4,775.7 L2115.1,765.7 M2100.5,770.5 L2136.6,762.4 M2100.5,770.5 L2108.5,806.6 M2114.9,766.9 L2118.4,785.1 M2133.0,762.4 L2151.0,757.9 M2158.1,756.1 L2194.2,748.1 M2178.8,751.0 L2197.0,747.8 M2178.8,751.0 L2186.9,787.1 M2194.6,747.0 L2199.1,765.0 M2217.5,741.3 L2253.4,732.2 M2236.4,736.6 L2272.2,727.6 M2236.4,736.6 L2245.9,772.3 M2295.0,722.0 L2312.9,717.1 M2295.0,722.0 L2298.5,740.2 M2397.5,696.4 L2415.5,692.0 M2397.5,696.4 L2403.3,714.0 M2421.7,690.4 L2457.3,680.1 M2421.7,690.4 L2429.8,726.5 M2446.8,684.1 L2454.7,720.3 M2470.1,678.3 L2506.3,670.3 M2470.1,678.3 L2480.4,713.9 M2495.0,672.1 L2513.2,669.0 M2495.0,672.1 L2500.5,689.8 M2018.9,812.8 L2036.9,808.7 M2038.7,807.9 L2056.9,804.6 M2053.9,804.1 L2057.0,822.4 M2077.4,798.2 L2095.5,794.2 M2099.2,792.8 L2117.4,789.1 M2123.4,786.8 L2131.0,823.0 M2144.8,781.4 L2180.8,773.2 M2144.8,781.4 L2150.4,799.1 M2162.6,777.0 L2172.6,812.6 M2182.2,772.1 L2218.4,764.4 M2203.5,766.8 L2239.3,757.1 M2223.7,761.8 L2259.9,753.9 M2223.7,761.8 L2228.2,779.7 M2246.4,756.1 L2264.5,752.2 M2246.4,756.1 L2255.7,791.9 M2262.5,752.1 L2298.6,743.8 M2262.5,752.1 L2270.3,788.3 M2277.5,748.3 L2295.8,745.3 M2277.5,748.3 L2285.1,784.6 M2294.6,744.1 L2298.1,762.3 M2327.0,736.0 L2332.9,753.6 M2362.9,727.0 L2398.6,717.4 M2424.8,711.6 L2460.7,702.4 M2424.8,711.6 L2432.4,747.8 M2449.2,705.5 L2485.2,697.2 M2449.2,705.5 L2453.9,723.4 M2466.4,701.2 L2484.5,697.1 M2484.9,696.6 L2521.1,689.0 M2484.9,696.6 L2490.1,714.4 M2508.1,690.8 L2516.6,726.9 M2039.1,824.2 L2075.3,816.6 M2039.1,824.2 L2047.0,860.4 M2062.4,818.4 L2080.8,815.4 M2062.4,818.4 L2067.9,836.1 M2082.1,813.5 L2136.1,800.9 M2082.1,813.5 L2090.3,849.6 M2101.3,808.7 L2105.2,826.8 M2121.6,803.6 L2175.7,791.2 M2121.6,803.6 L2131.5,839.3 M2138.3,799.5 L2156.2,794.8 M2138.3,799.5 L2141.4,817.8 M2158.1,794.5 L2162.7,812.4 M2202.1,783.6 L2256.3,771.2 M2202.1,783.6 L2212.1,819.2 M2246.1,772.6 L2281.7,762.5 M2246.1,772.6 L2249.7,790.8 M2330.2,751.6 L2366.1,742.8 M2409.8,731.8 L2417.4,768.0 M2429.4,726.9 L2447.2,722.0 M2429.4,726.9 L2437.9,762.9 M2467.3,717.4 L2485.3,712.9 M2484.2,713.2 L2501.8,707.3 M2507.9,707.3 L2512.2,725.3 M2522.9,703.6 L2526.8,721.7 M2040.1,843.3 L2076.3,835.6 M2040.1,843.3 L2048.0,879.4 M2058.5,838.7 L2076.6,835.0 M2058.5,838.7 L2067.8,874.5 M2077.3,834.0 L2095.0,828.5 M2096.1,829.3 L2105.6,865.1 M2114.0,824.8 L2167.6,810.4 M2131.6,820.5 L2149.9,817.4 M2131.6,820.5 L2140.6,856.3 M2150.9,815.6 L2169.2,812.5 M2175.9,809.4 L2211.9,800.8 M2175.9,809.4 L2179.0,827.7 M2212.1,800.4 L2247.7,790.5 M2233.6,795.0 L2269.3,785.4 M2272.7,785.3 L2308.8,777.4 M2295.5,779.6 L2300.7,797.4 M2339.5,768.6 L2375.2,758.9 M2401.1,753.3 L2418.9,748.4 M2401.1,753.3 L2406.3,771.0 M2415.9,749.6 L2451.8,740.4 M2415.9,749.6 L2425.9,785.2 M2439.8,743.6 L2442.9,761.9 M2454.6,739.9 L2490.8,732.2 M2454.6,739.9 L2458.4,758.0 M2475.8,734.6 L2484.8,770.5 M2021.5,871.5 L2039.4,866.6 M2021.5,871.5 L2024.8,889.7 M2040.1,866.9 L2047.8,903.1 M2060.2,861.9 L2095.8,851.6 M2060.2,861.9 L2067.9,898.1 M2083.3,856.1 L2100.9,850.2 M2108.0,849.9 L2144.1,842.0 M2133.1,843.7 L2136.4,861.9 M2148.2,839.9 L2166.3,836.0 M2148.2,839.9 L2152.7,857.9 M2163.0,836.2 L2168.4,854.0 M2183.0,831.2 L2218.8,822.2 M2202.9,826.3 L2220.8,821.8 M2202.9,826.3 L2207.2,844.3 M2242.8,816.3 L2278.9,807.9 M2281.5,806.7 L2317.4,797.7 M2328.0,795.1 L2332.5,813.0 M2385.9,780.6 L2403.5,774.9 M2385.9,780.6 L2391.4,798.3 M2407.8,775.2 L2425.7,770.7 M2427.6,770.3 L2432.4,788.1 M2443.2,766.4 L2479.0,757.0 M2443.2,766.4 L2453.2,802.0 M2463.2,761.4 L2481.3,757.7 M2463.2,761.4 L2469.0,779.0 M2486.5,755.6 L2504.3,750.5 M2504.0,751.2 L2521.8,746.1 M2032.3,888.2 L2050.0,882.8 M2053.3,883.0 L2089.2,873.9 M2072.3,878.3 L2077.3,896.1 M2095.3,872.5 L2112.9,867.0 M2149.0,859.1 L2185.2,851.3 M2304.7,820.3 L2322.4,814.8 M2326.4,814.9 L2362.4,806.3 M2344.9,810.3 L2349.4,828.3 M2361.2,806.2 L2414.6,791.4 M2385.6,800.2 L2421.4,791.1 M2427.7,789.7 L2445.3,784.1 M2452.6,783.4 L2488.4,774.1 M2468.7,779.4 L2486.3,773.5 M2468.7,779.4 L2473.5,797.3 M2487.9,774.6 L2505.8,769.7 M2487.9,774.6 L2497.2,810.5 M2530.5,764.0 L2535.3,781.9 M2318.6,841.0 L2354.2,830.9 M2452.6,807.6 L2488.5,798.6 M2515.3,792.0 L2533.5,788.2 M2472.6,819.9 L2508.2,809.8 M1508.3,1017.6 L1523.9,1014.1 M1508.3,1017.6 L1514.8,1048.9 M1540.6,1011.9 L1544.5,1027.4 M1556.8,1009.0 L1572.5,1006.0 M1574.8,1005.8 L1580.8,1037.3 M1596.0,1002.1 L1600.2,1033.9 M1510.0,1031.7 L1525.9,1030.1 M1523.7,1029.3 L1555.1,1023.6 M1523.7,1029.3 L1525.7,1045.2 M1544.5,1025.7 L1576.1,1020.8 M1559.3,1023.0 L1565.0,1054.5 M1576.1,1020.1 L1577.7,1036.0 M1591.5,1017.4 L1607.3,1015.0 M1591.5,1017.4 L1595.9,1049.1 M1516.1,1046.7 L1531.7,1043.1 M1516.1,1046.7 L1518.8,1062.5 M1547.0,1041.2 L1578.3,1034.5 M1547.0,1041.2 L1553.4,1072.6 M1566.3,1037.8 L1581.8,1033.7 M1566.3,1037.8 L1570.0,1053.4 M1582.7,1034.9 L1585.3,1050.7 M1599.0,1032.1 L1602.9,1047.6 M1517.2,1060.2 L1548.8,1055.3 M1537.5,1056.6 L1569.1,1051.7 M1552.2,1054.0 L1583.5,1047.3 M1552.2,1054.0 L1555.0,1069.8 M1603.7,1045.0 L1605.4,1060.9 M1617.9,1042.5 L1623.5,1074.0 M1554.0,1069.2 L1569.9,1067.0 M1592.1,1062.5 L1607.9,1059.7 M1467.5,801.7 L1468.2,823.7 M1481.7,801.7 L1481.6,823.7 M1471.8,814.8 L1482.8,815.5 M1471.8,814.8 L1470.4,836.8 M1475.8,827.9 L1477.0,838.9 M1472.6,840.4 L1473.1,862.4 M1470.0,850.4 L1470.2,872.4 M1475.5,861.1 L1474.5,883.1 M1468.2,888.7 L1479.2,890.0 M1468.2,888.7 L1467.0,899.7 M1482.0,888.7 L1481.6,899.7 M1473.5,907.6 L1474.0,918.6 M1475.7,916.5 L1475.0,927.5 M1466.9,930.6 L1477.9,930.9 M1466.9,930.6 L1466.2,952.6 M1481.1,930.6 L1481.5,952.6 M1470.9,941.5 L1481.9,941.4 M1482.3,941.5 L1481.9,963.5 M1477.5,961.7 L1476.4,972.7 M1478.1,972.6 L1477.4,983.6" fill="none" stroke="#f9f9f8" stroke-width="2.6" stroke-linecap="round"/><path d="M1893.5,990.0 C1893.5,992.1 1895.2,992.9 1893.5,1000.5 C1891.8,1008.1 1891.8,1016.2 1885.0,1028.0 C1878.2,1039.8 1866.4,1048.2 1859.7,1059.6 C1853.0,1071.0 1850.0,1072.7 1851.3,1084.9 C1852.6,1097.1 1862.8,1109.8 1866.0,1120.8 C1869.2,1131.8 1866.9,1136.2 1867.1,1140.0" fill="none" stroke="#b3cbef" stroke-width="2.6" stroke-linecap="round" stroke-linejoin="round"/><path d="M2005.0,716.0 C2007.0,715.6 2005.3,716.4 2014.8,714.2 C2024.3,712.0 2043.1,704.2 2052.5,705.1 C2061.9,706.0 2058.6,707.8 2061.7,718.8 C2064.8,729.8 2065.7,747.2 2068.0,760.0 C2070.3,772.8 2069.3,778.2 2073.1,782.7 C2076.9,787.2 2065.8,787.3 2086.8,782.7 C2107.8,778.1 2158.4,761.4 2178.2,759.9 C2198.0,758.4 2182.0,763.0 2186.0,775.0 C2190.0,787.0 2194.1,804.7 2198.0,820.0 C2201.9,835.3 2204.1,845.0 2205.6,851.3" fill="none" stroke="#b3cbef" stroke-width="2.6" stroke-linecap="round" stroke-linejoin="round"/><path d="M2440.8,655.0 C2442.2,664.6 2434.0,693.2 2447.7,702.8 C2461.4,712.4 2491.8,699.6 2509.4,702.8 C2527.0,706.0 2530.4,715.6 2535.6,718.8" fill="none" stroke="#b3cbef" stroke-width="2.6" stroke-linecap="round" stroke-linejoin="round"/><path d="M980.0,780.6 C994.0,773.5 1022.7,759.5 1050.0,745.0 C1077.3,730.5 1094.0,716.2 1116.6,707.9 C1139.2,699.6 1148.7,706.6 1162.8,703.5 C1176.9,700.4 1172.9,700.4 1187.0,692.5 C1201.1,684.6 1219.6,670.7 1233.3,663.9 C1247.0,657.1 1244.3,659.7 1255.3,658.4 C1266.3,657.1 1260.6,663.7 1288.4,657.3 C1316.2,650.9 1369.0,633.9 1394.1,626.4 C1419.2,618.9 1410.8,624.4 1413.9,619.8 C1417.0,615.2 1410.7,608.1 1409.5,603.3 C1408.3,598.5 1408.3,597.5 1408.0,596.0 M1264.1,596.0 L1255.3,658.4 M1220.0,603.3 L1255.3,635.2 M1233.3,666.0 L1255.3,723.3 M1290.6,658.4 C1303.8,677.6 1343.0,732.4 1356.7,754.2 C1370.4,776.0 1352.2,755.2 1358.9,767.4 C1365.6,779.6 1378.2,798.5 1390.0,815.0 C1401.8,831.5 1412.4,843.0 1418.0,850.0 M1187.0,694.7 C1187.2,697.4 1191.1,704.7 1188.0,708.0 C1184.9,711.3 1175.8,704.2 1171.6,711.2 C1167.4,718.2 1168.1,736.8 1167.2,743.2 M1308.2,811.5 C1326.6,808.8 1365.2,803.1 1400.0,798.0 C1434.8,792.9 1465.8,788.4 1482.2,786.0 M980.0,988.0 C1002.0,976.4 1058.0,948.6 1090.0,930.0 C1122.0,911.4 1127.0,905.4 1140.0,895.0 C1153.0,884.6 1136.6,883.8 1155.0,878.0 C1173.4,872.2 1205.0,870.0 1232.0,866.0 C1259.0,862.0 1278.4,859.6 1290.0,858.0 M1232.0,866.0 L1250.0,935.0 M1092.0,929.0 C1095.6,936.2 1103.0,956.2 1110.0,965.0 C1117.0,973.8 1129.0,964.0 1127.0,973.0 C1125.0,982.0 1107.2,1000.6 1100.0,1010.0 C1092.8,1019.4 1092.8,1018.0 1091.0,1020.0 M1127.0,973.0 L1140.0,955.0 M1263.0,955.0 C1266.4,966.0 1271.6,989.0 1280.0,1010.0 C1288.4,1031.0 1297.0,1043.0 1305.0,1060.0 C1313.0,1077.0 1309.0,1079.8 1320.0,1095.0 C1331.0,1110.2 1352.0,1127.8 1360.0,1136.0 M1225.0,1136.0 C1240.0,1119.8 1269.0,1082.2 1300.0,1055.0 C1331.0,1027.8 1354.0,1021.0 1380.0,1000.0 C1406.0,979.0 1412.0,970.0 1430.0,950.0 C1448.0,930.0 1459.6,912.0 1470.0,900.0 C1480.4,888.0 1479.6,892.0 1482.0,890.0 M985.0,1107.0 C1001.0,1101.6 1030.6,1085.6 1065.0,1080.0 C1099.4,1074.4 1138.6,1079.2 1157.0,1079.0 M1440.0,1136.0 L1490.0,1098.0 M776.5,789.6 C782.0,792.8 797.1,797.8 804.0,805.6 C810.9,813.4 810.4,817.5 810.8,828.4 C811.2,839.3 807.3,846.8 806.0,860.0 C804.7,873.2 803.2,873.7 804.5,894.3 C805.8,914.9 809.7,940.0 812.5,962.8 C815.3,985.6 817.4,991.6 818.3,1008.4 C819.2,1025.2 817.7,1031.0 817.0,1047.0 C816.3,1063.0 814.8,1076.4 814.8,1088.4 C814.8,1100.4 818.4,1097.4 817.0,1107.0 C815.6,1116.6 809.8,1130.4 808.0,1136.3 M478.0,738.0 C486.4,740.0 496.8,741.6 520.0,748.0 C543.2,754.4 570.0,774.6 594.0,770.0 C618.0,765.4 625.8,738.0 640.0,725.0 C654.2,712.0 651.0,710.6 665.0,705.0 C679.0,699.4 691.0,700.0 710.0,697.0 C729.0,694.0 742.0,691.4 760.0,690.0 C778.0,688.6 792.0,690.0 800.0,690.0 M668.0,708.0 C671.0,714.4 677.8,721.6 683.0,740.0 C688.2,758.4 694.6,785.6 694.0,800.0 C693.4,814.4 690.8,802.0 680.0,812.0 C669.2,822.0 651.0,838.4 640.0,850.0 C629.0,861.6 628.0,866.0 625.0,870.0 M500.0,975.0 C499.6,984.0 499.0,1003.0 498.0,1020.0 C497.0,1037.0 497.6,1044.0 495.0,1060.0 C492.4,1076.0 487.0,1092.0 485.0,1100.0 M560.0,943.0 C563.0,947.4 575.0,956.6 575.0,965.0 C575.0,973.4 571.0,979.0 560.0,985.0 C549.0,991.0 528.0,993.0 520.0,995.0 M1648.8,1040.6 C1662.7,1038.9 1693.1,1038.9 1718.4,1032.2 C1743.7,1025.5 1761.1,1011.5 1775.4,1006.9 C1789.7,1002.3 1786.3,1006.1 1790.1,1009.0 C1793.9,1011.9 1797.2,1012.7 1794.3,1021.6 C1791.4,1030.5 1778.8,1041.1 1775.4,1053.3 C1772.0,1065.5 1773.3,1068.5 1777.5,1082.8 C1781.7,1097.1 1792.7,1116.6 1796.5,1125.0 M1684.6,1040.6 C1686.3,1047.4 1692.7,1059.2 1693.1,1074.4 C1693.5,1089.6 1687.1,1104.4 1686.7,1116.6 C1686.3,1128.8 1690.1,1131.8 1691.0,1135.6 M1722.0,1033.0 L1740.0,1065.0 M1898.0,1099.0 C1915.4,1099.0 1966.6,1099.8 1985.0,1099.0 C2003.4,1098.2 1983.0,1096.2 1990.0,1095.0 C1997.0,1093.8 2014.0,1093.4 2020.0,1093.0 M1480.0,1100.0 L1489.0,1095.0 M2226.0,912.0 C2229.8,925.6 2234.2,950.4 2245.0,980.0 C2255.8,1009.6 2269.0,1028.8 2280.0,1060.0 C2291.0,1091.2 2296.0,1120.8 2300.0,1136.0 M2226.0,905.0 C2238.8,903.0 2269.2,898.0 2290.0,895.0 C2310.8,892.0 2322.0,891.0 2330.0,890.0 M2360.0,860.0 C2362.0,874.0 2367.0,902.0 2370.0,930.0 C2373.0,958.0 2373.4,974.0 2375.0,1000.0 C2376.6,1026.0 2378.6,1040.0 2378.0,1060.0 C2377.4,1080.0 2379.6,1084.8 2372.0,1100.0 C2364.4,1115.2 2346.4,1128.8 2340.0,1136.0 M2385.0,930.0 C2388.0,944.0 2395.0,958.8 2400.0,1000.0 C2405.0,1041.2 2408.0,1108.8 2410.0,1136.0 M2440.0,860.0 C2444.0,878.0 2451.0,910.0 2460.0,950.0 C2469.0,990.0 2478.0,1022.8 2485.0,1060.0 C2492.0,1097.2 2493.0,1120.8 2495.0,1136.0 M2365.0,900.0 L2440.0,888.0 M2380.0,935.0 C2398.0,931.6 2439.0,915.0 2470.0,918.0 C2501.0,921.0 2522.0,943.6 2535.0,950.0 M2245.0,972.0 L2365.0,965.0 M2095.0,970.0 C2108.0,978.0 2139.0,996.0 2160.0,1010.0 C2181.0,1024.0 2189.0,1027.0 2200.0,1040.0 C2211.0,1053.0 2205.0,1061.0 2215.0,1075.0 C2225.0,1089.0 2243.0,1103.0 2250.0,1110.0 M2085.0,1065.0 C2096.0,1067.0 2114.0,1073.6 2140.0,1075.0 C2166.0,1076.4 2200.0,1072.6 2215.0,1072.0 M2085.0,1095.0 C2096.0,1097.0 2105.0,1102.4 2140.0,1105.0 C2175.0,1107.6 2236.4,1109.0 2260.0,1108.0 C2283.6,1107.0 2258.4,1101.6 2258.0,1100.0 M2000.0,1095.0 C2008.0,1094.0 2031.0,1093.0 2040.0,1090.0 C2049.0,1087.0 2040.0,1082.0 2045.0,1080.0 C2050.0,1078.0 2061.0,1080.0 2065.0,1080.0 M2030.0,930.0 C2034.0,940.0 2043.0,960.0 2050.0,980.0 C2057.0,1000.0 2060.0,1018.0 2065.0,1030.0 C2070.0,1042.0 2073.0,1038.0 2075.0,1040.0" fill="none" stroke="#d6d5d0" stroke-width="3.8" stroke-linecap="round" stroke-linejoin="round"/><path d="M980.0,780.6 C994.0,773.5 1022.7,759.5 1050.0,745.0 C1077.3,730.5 1094.0,716.2 1116.6,707.9 C1139.2,699.6 1148.7,706.6 1162.8,703.5 C1176.9,700.4 1172.9,700.4 1187.0,692.5 C1201.1,684.6 1219.6,670.7 1233.3,663.9 C1247.0,657.1 1244.3,659.7 1255.3,658.4 C1266.3,657.1 1260.6,663.7 1288.4,657.3 C1316.2,650.9 1369.0,633.9 1394.1,626.4 C1419.2,618.9 1410.8,624.4 1413.9,619.8 C1417.0,615.2 1410.7,608.1 1409.5,603.3 C1408.3,598.5 1408.3,597.5 1408.0,596.0 M1264.1,596.0 L1255.3,658.4 M1220.0,603.3 L1255.3,635.2 M1233.3,666.0 L1255.3,723.3 M1290.6,658.4 C1303.8,677.6 1343.0,732.4 1356.7,754.2 C1370.4,776.0 1352.2,755.2 1358.9,767.4 C1365.6,779.6 1378.2,798.5 1390.0,815.0 C1401.8,831.5 1412.4,843.0 1418.0,850.0 M1187.0,694.7 C1187.2,697.4 1191.1,704.7 1188.0,708.0 C1184.9,711.3 1175.8,704.2 1171.6,711.2 C1167.4,718.2 1168.1,736.8 1167.2,743.2 M1308.2,811.5 C1326.6,808.8 1365.2,803.1 1400.0,798.0 C1434.8,792.9 1465.8,788.4 1482.2,786.0 M980.0,988.0 C1002.0,976.4 1058.0,948.6 1090.0,930.0 C1122.0,911.4 1127.0,905.4 1140.0,895.0 C1153.0,884.6 1136.6,883.8 1155.0,878.0 C1173.4,872.2 1205.0,870.0 1232.0,866.0 C1259.0,862.0 1278.4,859.6 1290.0,858.0 M1232.0,866.0 L1250.0,935.0 M1092.0,929.0 C1095.6,936.2 1103.0,956.2 1110.0,965.0 C1117.0,973.8 1129.0,964.0 1127.0,973.0 C1125.0,982.0 1107.2,1000.6 1100.0,1010.0 C1092.8,1019.4 1092.8,1018.0 1091.0,1020.0 M1127.0,973.0 L1140.0,955.0 M1263.0,955.0 C1266.4,966.0 1271.6,989.0 1280.0,1010.0 C1288.4,1031.0 1297.0,1043.0 1305.0,1060.0 C1313.0,1077.0 1309.0,1079.8 1320.0,1095.0 C1331.0,1110.2 1352.0,1127.8 1360.0,1136.0 M1225.0,1136.0 C1240.0,1119.8 1269.0,1082.2 1300.0,1055.0 C1331.0,1027.8 1354.0,1021.0 1380.0,1000.0 C1406.0,979.0 1412.0,970.0 1430.0,950.0 C1448.0,930.0 1459.6,912.0 1470.0,900.0 C1480.4,888.0 1479.6,892.0 1482.0,890.0 M985.0,1107.0 C1001.0,1101.6 1030.6,1085.6 1065.0,1080.0 C1099.4,1074.4 1138.6,1079.2 1157.0,1079.0 M1440.0,1136.0 L1490.0,1098.0 M776.5,789.6 C782.0,792.8 797.1,797.8 804.0,805.6 C810.9,813.4 810.4,817.5 810.8,828.4 C811.2,839.3 807.3,846.8 806.0,860.0 C804.7,873.2 803.2,873.7 804.5,894.3 C805.8,914.9 809.7,940.0 812.5,962.8 C815.3,985.6 817.4,991.6 818.3,1008.4 C819.2,1025.2 817.7,1031.0 817.0,1047.0 C816.3,1063.0 814.8,1076.4 814.8,1088.4 C814.8,1100.4 818.4,1097.4 817.0,1107.0 C815.6,1116.6 809.8,1130.4 808.0,1136.3 M478.0,738.0 C486.4,740.0 496.8,741.6 520.0,748.0 C543.2,754.4 570.0,774.6 594.0,770.0 C618.0,765.4 625.8,738.0 640.0,725.0 C654.2,712.0 651.0,710.6 665.0,705.0 C679.0,699.4 691.0,700.0 710.0,697.0 C729.0,694.0 742.0,691.4 760.0,690.0 C778.0,688.6 792.0,690.0 800.0,690.0 M668.0,708.0 C671.0,714.4 677.8,721.6 683.0,740.0 C688.2,758.4 694.6,785.6 694.0,800.0 C693.4,814.4 690.8,802.0 680.0,812.0 C669.2,822.0 651.0,838.4 640.0,850.0 C629.0,861.6 628.0,866.0 625.0,870.0 M500.0,975.0 C499.6,984.0 499.0,1003.0 498.0,1020.0 C497.0,1037.0 497.6,1044.0 495.0,1060.0 C492.4,1076.0 487.0,1092.0 485.0,1100.0 M560.0,943.0 C563.0,947.4 575.0,956.6 575.0,965.0 C575.0,973.4 571.0,979.0 560.0,985.0 C549.0,991.0 528.0,993.0 520.0,995.0 M1648.8,1040.6 C1662.7,1038.9 1693.1,1038.9 1718.4,1032.2 C1743.7,1025.5 1761.1,1011.5 1775.4,1006.9 C1789.7,1002.3 1786.3,1006.1 1790.1,1009.0 C1793.9,1011.9 1797.2,1012.7 1794.3,1021.6 C1791.4,1030.5 1778.8,1041.1 1775.4,1053.3 C1772.0,1065.5 1773.3,1068.5 1777.5,1082.8 C1781.7,1097.1 1792.7,1116.6 1796.5,1125.0 M1684.6,1040.6 C1686.3,1047.4 1692.7,1059.2 1693.1,1074.4 C1693.5,1089.6 1687.1,1104.4 1686.7,1116.6 C1686.3,1128.8 1690.1,1131.8 1691.0,1135.6 M1722.0,1033.0 L1740.0,1065.0 M1898.0,1099.0 C1915.4,1099.0 1966.6,1099.8 1985.0,1099.0 C2003.4,1098.2 1983.0,1096.2 1990.0,1095.0 C1997.0,1093.8 2014.0,1093.4 2020.0,1093.0 M1480.0,1100.0 L1489.0,1095.0 M2226.0,912.0 C2229.8,925.6 2234.2,950.4 2245.0,980.0 C2255.8,1009.6 2269.0,1028.8 2280.0,1060.0 C2291.0,1091.2 2296.0,1120.8 2300.0,1136.0 M2226.0,905.0 C2238.8,903.0 2269.2,898.0 2290.0,895.0 C2310.8,892.0 2322.0,891.0 2330.0,890.0 M2360.0,860.0 C2362.0,874.0 2367.0,902.0 2370.0,930.0 C2373.0,958.0 2373.4,974.0 2375.0,1000.0 C2376.6,1026.0 2378.6,1040.0 2378.0,1060.0 C2377.4,1080.0 2379.6,1084.8 2372.0,1100.0 C2364.4,1115.2 2346.4,1128.8 2340.0,1136.0 M2385.0,930.0 C2388.0,944.0 2395.0,958.8 2400.0,1000.0 C2405.0,1041.2 2408.0,1108.8 2410.0,1136.0 M2440.0,860.0 C2444.0,878.0 2451.0,910.0 2460.0,950.0 C2469.0,990.0 2478.0,1022.8 2485.0,1060.0 C2492.0,1097.2 2493.0,1120.8 2495.0,1136.0 M2365.0,900.0 L2440.0,888.0 M2380.0,935.0 C2398.0,931.6 2439.0,915.0 2470.0,918.0 C2501.0,921.0 2522.0,943.6 2535.0,950.0 M2245.0,972.0 L2365.0,965.0 M2095.0,970.0 C2108.0,978.0 2139.0,996.0 2160.0,1010.0 C2181.0,1024.0 2189.0,1027.0 2200.0,1040.0 C2211.0,1053.0 2205.0,1061.0 2215.0,1075.0 C2225.0,1089.0 2243.0,1103.0 2250.0,1110.0 M2085.0,1065.0 C2096.0,1067.0 2114.0,1073.6 2140.0,1075.0 C2166.0,1076.4 2200.0,1072.6 2215.0,1072.0 M2085.0,1095.0 C2096.0,1097.0 2105.0,1102.4 2140.0,1105.0 C2175.0,1107.6 2236.4,1109.0 2260.0,1108.0 C2283.6,1107.0 2258.4,1101.6 2258.0,1100.0 M2000.0,1095.0 C2008.0,1094.0 2031.0,1093.0 2040.0,1090.0 C2049.0,1087.0 2040.0,1082.0 2045.0,1080.0 C2050.0,1078.0 2061.0,1080.0 2065.0,1080.0 M2030.0,930.0 C2034.0,940.0 2043.0,960.0 2050.0,980.0 C2057.0,1000.0 2060.0,1018.0 2065.0,1030.0 C2070.0,1042.0 2073.0,1038.0 2075.0,1040.0" fill="none" stroke="#f6f5f2" stroke-width="1.9" stroke-linecap="round" stroke-linejoin="round"/><path d="M470.0,954.5 L888.3,884.5 L1000.0,865.7 L1346.5,810.0 L1482.2,788.3" fill="none" stroke="#d6d6d3" stroke-width="3.4"/><path d="M470.0,954.5 L888.3,884.5 L1000.0,865.7 L1346.5,810.0 L1482.2,788.3" fill="none" stroke="#fafafa" stroke-width="2"/><path d="M470.0,954.5 L888.3,884.5 L1000.0,865.7 L1346.5,810.0 L1482.2,788.3" fill="none" stroke="#cfcfcc" stroke-width="2.4" stroke-dasharray="2 30"/><path d="M470.0,748.0 C471.8,744.4 475.3,738.8 478.8,729.9 C482.3,721.0 483.6,713.6 487.6,703.5 C491.6,693.4 491.1,687.2 498.6,679.3 C506.1,671.4 517.5,668.8 525.0,663.9 C532.5,659.0 531.6,663.4 536.0,655.0 C540.4,646.6 543.5,631.2 547.0,622.0 C550.5,612.8 550.6,612.3 553.7,608.8 C556.8,605.3 558.2,606.6 562.5,604.4 C566.8,602.2 572.5,599.3 575.0,598.0" fill="none" stroke="#e8dc97" stroke-width="7" stroke-linecap="round" stroke-linejoin="round"/><path d="M545.0,596.0 C548.5,597.7 554.6,602.3 562.5,604.4 C570.4,606.5 574.8,604.8 584.5,606.6 C594.2,608.4 603.0,611.2 610.9,613.2 C618.8,615.2 614.8,616.0 624.1,616.5 C633.4,617.0 644.0,616.5 657.2,615.9 C670.4,615.3 679.2,613.9 690.2,613.7 C701.2,613.5 702.1,613.8 712.2,615.0 C722.3,616.2 727.6,616.2 740.8,619.8 C754.0,623.4 764.6,627.9 778.3,633.0 C792.0,638.1 800.3,641.8 809.1,645.1 C817.9,648.4 815.3,647.1 822.3,649.5 C829.3,651.9 834.2,654.3 844.3,657.2 C854.4,660.1 867.2,662.6 872.9,663.9" fill="none" stroke="#e8dc97" stroke-width="7" stroke-linecap="round" stroke-linejoin="round"/><path d="M927.0,596.0 C926.3,597.5 928.0,596.1 923.6,603.3 C919.2,610.5 915.1,619.9 905.0,632.0 C894.9,644.1 881.1,653.6 872.9,663.9 C864.7,674.2 867.2,676.7 864.1,683.7 C861.0,690.7 859.7,692.1 857.5,699.1 C855.3,706.1 855.3,710.5 853.1,718.9 C850.9,727.3 848.7,734.7 846.5,740.9 C844.3,747.1 843.0,747.9 842.1,749.7" fill="none" stroke="#e8dc97" stroke-width="8" stroke-linecap="round" stroke-linejoin="round"/><path d="M842.1,749.7 C825.9,760.8 793.4,782.9 761.0,805.0 C728.6,827.1 716.5,835.8 680.1,860.0 C643.7,884.2 619.4,899.5 579.0,926.0 C538.6,952.5 501.4,977.1 478.0,992.5 C454.6,1007.9 465.2,1000.9 462.0,1003.0" fill="none" stroke="#e8dc97" stroke-width="9.5" stroke-linecap="round" stroke-linejoin="round"/><path d="M872.9,663.9 C880.4,666.1 898.5,670.7 910.4,674.9 C922.3,679.1 924.0,680.8 932.4,684.8 C940.8,688.8 948.2,692.7 952.2,694.7" fill="none" stroke="#e8dc97" stroke-width="7" stroke-linecap="round" stroke-linejoin="round"/><path d="M988.0,596.0 C987.4,597.5 988.0,596.8 985.2,603.3 C982.4,609.8 979.0,613.8 974.2,628.6 C969.4,643.4 965.4,663.9 961.0,677.1 C956.6,690.3 957.0,685.5 952.2,694.7 C947.4,703.9 943.4,711.9 936.8,723.3 C930.2,734.7 926.2,741.3 919.2,751.9 C912.2,762.5 907.8,766.1 901.6,776.2 C895.4,786.3 891.9,793.8 888.4,802.6 C884.9,811.4 884.0,812.7 884.0,820.2 C884.0,827.7 884.3,831.6 888.3,840.0 C892.3,848.4 896.2,852.1 903.9,862.0 C911.6,871.9 918.5,878.2 926.7,889.7 C934.9,901.2 939.5,909.4 945.0,919.4 C950.5,929.4 951.8,928.9 954.1,939.9 C956.4,950.9 956.8,960.5 956.4,974.2 C956.0,987.9 952.8,994.7 951.9,1008.4 C951.0,1022.1 951.0,1029.9 951.9,1042.7 C952.8,1055.5 952.3,1059.6 956.4,1072.4 C960.5,1085.2 965.5,1093.8 972.4,1106.6 C979.3,1119.4 986.0,1128.4 990.7,1136.3 C995.4,1144.2 994.9,1144.1 996.0,1146.0" fill="none" stroke="#e8dc97" stroke-width="8.5" stroke-linecap="round" stroke-linejoin="round"/><path d="M470.0,895.0 C473.7,896.7 482.4,896.7 488.3,903.4 C494.2,910.1 497.0,918.0 499.7,928.5 C502.4,939.0 502.0,946.8 502.0,955.9 C502.0,965.0 500.2,970.5 499.7,974.2" fill="none" stroke="#e8dc97" stroke-width="6" stroke-linecap="round" stroke-linejoin="round"/><path d="M470.0,1072.0 C471.6,1075.3 475.3,1080.6 478.0,1088.4 C480.7,1096.2 480.7,1101.6 483.7,1111.2 C486.7,1120.8 490.3,1129.5 492.8,1136.3 C495.3,1143.1 495.4,1143.3 496.0,1145.0" fill="none" stroke="#e8dc97" stroke-width="6" stroke-linecap="round" stroke-linejoin="round"/><path d="M1668.0,992.0 C1667.1,993.7 1667.8,992.9 1663.5,1000.5 C1659.2,1008.1 1652.0,1018.2 1646.7,1030.0 C1641.4,1041.8 1639.9,1046.5 1637.2,1059.6 C1634.5,1072.7 1633.8,1078.4 1633.0,1095.5 C1632.2,1112.6 1633.0,1135.1 1633.0,1145.0" fill="none" stroke="#e8dc97" stroke-width="7.5" stroke-linecap="round" stroke-linejoin="round"/><path d="M1539.0,990.0 C1539.0,992.1 1538.6,990.0 1539.0,1000.5 C1539.4,1011.0 1539.5,1027.5 1541.2,1042.7 C1542.9,1057.9 1538.6,1070.6 1547.5,1076.5 C1556.4,1082.4 1569.5,1074.4 1585.5,1072.3 C1601.5,1070.2 1617.4,1067.6 1627.7,1065.9 C1638.0,1064.2 1635.1,1064.4 1637.0,1064.0" fill="none" stroke="#e8dc97" stroke-width="5" stroke-linecap="round" stroke-linejoin="round"/><path d="M1478.0,800.0 C1477.7,801.5 1478.2,798.3 1476.5,807.7 C1474.8,817.1 1470.0,829.2 1469.5,846.8 C1469.0,864.4 1472.1,879.2 1474.0,895.8 C1475.9,912.4 1476.6,919.2 1479.0,930.0 C1481.4,940.8 1480.8,940.4 1486.0,950.0 C1491.2,959.6 1496.2,969.6 1505.0,978.0 C1513.8,986.4 1523.2,987.6 1530.0,992.0 C1536.8,996.4 1537.2,998.4 1539.0,1000.0" fill="none" stroke="#e8dc97" stroke-width="7" stroke-linecap="round" stroke-linejoin="round"/><path d="M2005.0,729.5 C2007.0,729.0 1996.6,732.1 2014.8,726.8 C2033.0,721.5 2064.6,710.3 2095.9,702.8 C2127.2,695.3 2144.8,695.5 2171.3,689.1 C2197.8,682.7 2209.7,677.2 2228.4,670.8 C2247.1,664.4 2247.2,663.5 2265.0,657.1 C2282.8,650.7 2304.3,643.8 2317.5,638.8 C2330.7,633.8 2327.5,636.8 2331.2,632.0 C2334.9,627.2 2334.6,622.2 2336.0,615.0 C2337.4,607.8 2337.6,599.8 2338.0,596.0" fill="none" stroke="#e8dc97" stroke-width="8" stroke-linecap="round" stroke-linejoin="round"/><path d="M2265.0,657.1 C2270.0,657.1 2273.0,644.7 2290.0,657.1 C2307.0,669.5 2325.8,694.3 2350.0,719.0 C2374.2,743.7 2395.7,764.5 2411.1,780.4 C2426.5,796.3 2418.0,791.4 2427.1,798.7 C2436.2,806.0 2441.7,811.5 2456.8,817.0 C2471.9,822.5 2484.9,824.3 2502.5,826.1 C2520.1,827.9 2536.5,826.1 2545.0,826.1" fill="none" stroke="#e8dc97" stroke-width="7" stroke-linecap="round" stroke-linejoin="round"/><path d="M2411.1,780.4 C2415.7,777.2 2420.3,770.4 2434.0,764.5 C2447.7,758.6 2463.7,757.2 2479.7,750.8 C2495.7,744.4 2502.7,741.2 2513.9,732.5 C2525.1,723.8 2529.4,714.9 2535.6,707.4 C2541.8,699.9 2543.1,697.5 2545.0,695.0" fill="none" stroke="#e8dc97" stroke-width="6" stroke-linecap="round" stroke-linejoin="round"/><path d="M2508.0,596.0 C2508.3,597.5 2507.8,593.5 2509.4,603.4 C2511.0,613.3 2511.0,631.8 2516.2,645.7 C2521.4,659.6 2529.8,665.4 2535.6,673.1 C2541.4,680.8 2543.1,681.8 2545.0,684.0" fill="none" stroke="#e8dc97" stroke-width="6" stroke-linecap="round" stroke-linejoin="round"/><path d="M2171.3,689.1 C2172.2,691.4 2164.5,700.5 2175.9,700.5 C2187.3,700.5 2211.5,693.2 2228.4,689.1 C2245.3,685.0 2254.0,681.7 2260.4,679.9" fill="none" stroke="#e8dc97" stroke-width="5.5" stroke-linecap="round" stroke-linejoin="round"/><path d="M2260.4,679.9 C2261.3,682.2 2261.3,679.1 2265.0,691.4 C2268.7,703.7 2272.8,720.1 2278.7,741.6 C2284.6,763.1 2291.5,787.3 2294.7,798.7" fill="none" stroke="#e8dc97" stroke-width="5.5" stroke-linecap="round" stroke-linejoin="round"/><path d="M2294.7,798.7 C2293.8,800.0 2306.0,798.6 2290.0,805.0 C2274.0,811.4 2230.7,823.7 2214.7,830.7 C2198.7,837.7 2210.1,833.5 2210.1,839.8 C2210.1,846.1 2213.8,857.8 2214.7,862.3" fill="none" stroke="#e8dc97" stroke-width="6" stroke-linecap="round" stroke-linejoin="round"/><path d="M2005.0,920.0 C2007.2,919.4 1996.4,922.2 2016.0,917.1 C2035.6,912.0 2074.0,902.5 2102.8,894.3 C2131.6,886.1 2140.7,881.7 2159.9,876.0 C2179.1,870.3 2187.7,868.4 2198.7,865.7 C2209.7,863.0 2211.5,863.0 2214.7,862.3" fill="none" stroke="#e8dc97" stroke-width="11" stroke-linecap="round" stroke-linejoin="round"/><path d="M2214.7,862.3 C2216.8,866.4 2222.7,872.8 2225.0,882.8 C2227.3,892.8 2225.9,906.6 2226.1,912.5" fill="none" stroke="#e8dc97" stroke-width="5" stroke-linecap="round" stroke-linejoin="round"/><path d="M2226.1,912.5 C2218.3,913.0 2205.1,907.0 2187.3,914.8 C2169.5,922.6 2155.3,940.0 2137.0,951.4 C2118.7,962.8 2104.6,968.3 2095.9,971.9 C2087.2,975.5 2094.1,970.1 2093.7,969.6" fill="none" stroke="#e8dc97" stroke-width="5" stroke-linecap="round" stroke-linejoin="round"/><path d="M2093.7,969.6 C2093.0,979.7 2092.0,996.1 2090.2,1019.9 C2088.4,1043.7 2086.8,1065.1 2084.5,1088.4 C2082.2,1111.7 2080.1,1125.1 2078.8,1136.4 C2077.5,1147.7 2078.2,1143.3 2078.0,1145.0" fill="none" stroke="#e8dc97" stroke-width="4.5" stroke-linecap="round" stroke-linejoin="round"/><path d="M2018.3,850.0 C2018.3,852.0 2016.0,847.9 2018.3,860.0 C2020.6,872.1 2027.0,898.7 2029.7,910.3 C2032.4,921.9 2031.5,916.5 2032.0,918.0" fill="none" stroke="#e8dc97" stroke-width="6" stroke-linecap="round" stroke-linejoin="round"/><path d="M2214.7,862.7 C2207.8,864.6 2195.5,868.5 2180.0,872.0 C2164.5,875.5 2145.6,878.4 2137.0,880.0" fill="none" stroke="#e8dc97" stroke-width="5" stroke-linecap="round" stroke-linejoin="round"/><path d="M470.0,748.0 C471.8,744.4 475.3,738.8 478.8,729.9 C482.3,721.0 483.6,713.6 487.6,703.5 C491.6,693.4 491.1,687.2 498.6,679.3 C506.1,671.4 517.5,668.8 525.0,663.9 C532.5,659.0 531.6,663.4 536.0,655.0 C540.4,646.6 543.5,631.2 547.0,622.0 C550.5,612.8 550.6,612.3 553.7,608.8 C556.8,605.3 558.2,606.6 562.5,604.4 C566.8,602.2 572.5,599.3 575.0,598.0" fill="none" stroke="#f8f2c2" stroke-width="4.8" stroke-linecap="round" stroke-linejoin="round"/><path d="M545.0,596.0 C548.5,597.7 554.6,602.3 562.5,604.4 C570.4,606.5 574.8,604.8 584.5,606.6 C594.2,608.4 603.0,611.2 610.9,613.2 C618.8,615.2 614.8,616.0 624.1,616.5 C633.4,617.0 644.0,616.5 657.2,615.9 C670.4,615.3 679.2,613.9 690.2,613.7 C701.2,613.5 702.1,613.8 712.2,615.0 C722.3,616.2 727.6,616.2 740.8,619.8 C754.0,623.4 764.6,627.9 778.3,633.0 C792.0,638.1 800.3,641.8 809.1,645.1 C817.9,648.4 815.3,647.1 822.3,649.5 C829.3,651.9 834.2,654.3 844.3,657.2 C854.4,660.1 867.2,662.6 872.9,663.9" fill="none" stroke="#f8f2c2" stroke-width="4.8" stroke-linecap="round" stroke-linejoin="round"/><path d="M927.0,596.0 C926.3,597.5 928.0,596.1 923.6,603.3 C919.2,610.5 915.1,619.9 905.0,632.0 C894.9,644.1 881.1,653.6 872.9,663.9 C864.7,674.2 867.2,676.7 864.1,683.7 C861.0,690.7 859.7,692.1 857.5,699.1 C855.3,706.1 855.3,710.5 853.1,718.9 C850.9,727.3 848.7,734.7 846.5,740.9 C844.3,747.1 843.0,747.9 842.1,749.7" fill="none" stroke="#f8f2c2" stroke-width="5.8" stroke-linecap="round" stroke-linejoin="round"/><path d="M842.1,749.7 C825.9,760.8 793.4,782.9 761.0,805.0 C728.6,827.1 716.5,835.8 680.1,860.0 C643.7,884.2 619.4,899.5 579.0,926.0 C538.6,952.5 501.4,977.1 478.0,992.5 C454.6,1007.9 465.2,1000.9 462.0,1003.0" fill="none" stroke="#f8f2c2" stroke-width="7.3" stroke-linecap="round" stroke-linejoin="round"/><path d="M872.9,663.9 C880.4,666.1 898.5,670.7 910.4,674.9 C922.3,679.1 924.0,680.8 932.4,684.8 C940.8,688.8 948.2,692.7 952.2,694.7" fill="none" stroke="#f8f2c2" stroke-width="4.8" stroke-linecap="round" stroke-linejoin="round"/><path d="M988.0,596.0 C987.4,597.5 988.0,596.8 985.2,603.3 C982.4,609.8 979.0,613.8 974.2,628.6 C969.4,643.4 965.4,663.9 961.0,677.1 C956.6,690.3 957.0,685.5 952.2,694.7 C947.4,703.9 943.4,711.9 936.8,723.3 C930.2,734.7 926.2,741.3 919.2,751.9 C912.2,762.5 907.8,766.1 901.6,776.2 C895.4,786.3 891.9,793.8 888.4,802.6 C884.9,811.4 884.0,812.7 884.0,820.2 C884.0,827.7 884.3,831.6 888.3,840.0 C892.3,848.4 896.2,852.1 903.9,862.0 C911.6,871.9 918.5,878.2 926.7,889.7 C934.9,901.2 939.5,909.4 945.0,919.4 C950.5,929.4 951.8,928.9 954.1,939.9 C956.4,950.9 956.8,960.5 956.4,974.2 C956.0,987.9 952.8,994.7 951.9,1008.4 C951.0,1022.1 951.0,1029.9 951.9,1042.7 C952.8,1055.5 952.3,1059.6 956.4,1072.4 C960.5,1085.2 965.5,1093.8 972.4,1106.6 C979.3,1119.4 986.0,1128.4 990.7,1136.3 C995.4,1144.2 994.9,1144.1 996.0,1146.0" fill="none" stroke="#f8f2c2" stroke-width="6.3" stroke-linecap="round" stroke-linejoin="round"/><path d="M470.0,895.0 C473.7,896.7 482.4,896.7 488.3,903.4 C494.2,910.1 497.0,918.0 499.7,928.5 C502.4,939.0 502.0,946.8 502.0,955.9 C502.0,965.0 500.2,970.5 499.7,974.2" fill="none" stroke="#f8f2c2" stroke-width="3.8" stroke-linecap="round" stroke-linejoin="round"/><path d="M470.0,1072.0 C471.6,1075.3 475.3,1080.6 478.0,1088.4 C480.7,1096.2 480.7,1101.6 483.7,1111.2 C486.7,1120.8 490.3,1129.5 492.8,1136.3 C495.3,1143.1 495.4,1143.3 496.0,1145.0" fill="none" stroke="#f8f2c2" stroke-width="3.8" stroke-linecap="round" stroke-linejoin="round"/><path d="M1668.0,992.0 C1667.1,993.7 1667.8,992.9 1663.5,1000.5 C1659.2,1008.1 1652.0,1018.2 1646.7,1030.0 C1641.4,1041.8 1639.9,1046.5 1637.2,1059.6 C1634.5,1072.7 1633.8,1078.4 1633.0,1095.5 C1632.2,1112.6 1633.0,1135.1 1633.0,1145.0" fill="none" stroke="#f8f2c2" stroke-width="5.3" stroke-linecap="round" stroke-linejoin="round"/><path d="M1539.0,990.0 C1539.0,992.1 1538.6,990.0 1539.0,1000.5 C1539.4,1011.0 1539.5,1027.5 1541.2,1042.7 C1542.9,1057.9 1538.6,1070.6 1547.5,1076.5 C1556.4,1082.4 1569.5,1074.4 1585.5,1072.3 C1601.5,1070.2 1617.4,1067.6 1627.7,1065.9 C1638.0,1064.2 1635.1,1064.4 1637.0,1064.0" fill="none" stroke="#f8f2c2" stroke-width="2.8" stroke-linecap="round" stroke-linejoin="round"/><path d="M1478.0,800.0 C1477.7,801.5 1478.2,798.3 1476.5,807.7 C1474.8,817.1 1470.0,829.2 1469.5,846.8 C1469.0,864.4 1472.1,879.2 1474.0,895.8 C1475.9,912.4 1476.6,919.2 1479.0,930.0 C1481.4,940.8 1480.8,940.4 1486.0,950.0 C1491.2,959.6 1496.2,969.6 1505.0,978.0 C1513.8,986.4 1523.2,987.6 1530.0,992.0 C1536.8,996.4 1537.2,998.4 1539.0,1000.0" fill="none" stroke="#f8f2c2" stroke-width="4.8" stroke-linecap="round" stroke-linejoin="round"/><path d="M2005.0,729.5 C2007.0,729.0 1996.6,732.1 2014.8,726.8 C2033.0,721.5 2064.6,710.3 2095.9,702.8 C2127.2,695.3 2144.8,695.5 2171.3,689.1 C2197.8,682.7 2209.7,677.2 2228.4,670.8 C2247.1,664.4 2247.2,663.5 2265.0,657.1 C2282.8,650.7 2304.3,643.8 2317.5,638.8 C2330.7,633.8 2327.5,636.8 2331.2,632.0 C2334.9,627.2 2334.6,622.2 2336.0,615.0 C2337.4,607.8 2337.6,599.8 2338.0,596.0" fill="none" stroke="#f8f2c2" stroke-width="5.8" stroke-linecap="round" stroke-linejoin="round"/><path d="M2265.0,657.1 C2270.0,657.1 2273.0,644.7 2290.0,657.1 C2307.0,669.5 2325.8,694.3 2350.0,719.0 C2374.2,743.7 2395.7,764.5 2411.1,780.4 C2426.5,796.3 2418.0,791.4 2427.1,798.7 C2436.2,806.0 2441.7,811.5 2456.8,817.0 C2471.9,822.5 2484.9,824.3 2502.5,826.1 C2520.1,827.9 2536.5,826.1 2545.0,826.1" fill="none" stroke="#f8f2c2" stroke-width="4.8" stroke-linecap="round" stroke-linejoin="round"/><path d="M2411.1,780.4 C2415.7,777.2 2420.3,770.4 2434.0,764.5 C2447.7,758.6 2463.7,757.2 2479.7,750.8 C2495.7,744.4 2502.7,741.2 2513.9,732.5 C2525.1,723.8 2529.4,714.9 2535.6,707.4 C2541.8,699.9 2543.1,697.5 2545.0,695.0" fill="none" stroke="#f8f2c2" stroke-width="3.8" stroke-linecap="round" stroke-linejoin="round"/><path d="M2508.0,596.0 C2508.3,597.5 2507.8,593.5 2509.4,603.4 C2511.0,613.3 2511.0,631.8 2516.2,645.7 C2521.4,659.6 2529.8,665.4 2535.6,673.1 C2541.4,680.8 2543.1,681.8 2545.0,684.0" fill="none" stroke="#f8f2c2" stroke-width="3.8" stroke-linecap="round" stroke-linejoin="round"/><path d="M2171.3,689.1 C2172.2,691.4 2164.5,700.5 2175.9,700.5 C2187.3,700.5 2211.5,693.2 2228.4,689.1 C2245.3,685.0 2254.0,681.7 2260.4,679.9" fill="none" stroke="#f8f2c2" stroke-width="3.3" stroke-linecap="round" stroke-linejoin="round"/><path d="M2260.4,679.9 C2261.3,682.2 2261.3,679.1 2265.0,691.4 C2268.7,703.7 2272.8,720.1 2278.7,741.6 C2284.6,763.1 2291.5,787.3 2294.7,798.7" fill="none" stroke="#f8f2c2" stroke-width="3.3" stroke-linecap="round" stroke-linejoin="round"/><path d="M2294.7,798.7 C2293.8,800.0 2306.0,798.6 2290.0,805.0 C2274.0,811.4 2230.7,823.7 2214.7,830.7 C2198.7,837.7 2210.1,833.5 2210.1,839.8 C2210.1,846.1 2213.8,857.8 2214.7,862.3" fill="none" stroke="#f8f2c2" stroke-width="3.8" stroke-linecap="round" stroke-linejoin="round"/><path d="M2005.0,920.0 C2007.2,919.4 1996.4,922.2 2016.0,917.1 C2035.6,912.0 2074.0,902.5 2102.8,894.3 C2131.6,886.1 2140.7,881.7 2159.9,876.0 C2179.1,870.3 2187.7,868.4 2198.7,865.7 C2209.7,863.0 2211.5,863.0 2214.7,862.3" fill="none" stroke="#f8f2c2" stroke-width="8.8" stroke-linecap="round" stroke-linejoin="round"/><path d="M2214.7,862.3 C2216.8,866.4 2222.7,872.8 2225.0,882.8 C2227.3,892.8 2225.9,906.6 2226.1,912.5" fill="none" stroke="#f8f2c2" stroke-width="2.8" stroke-linecap="round" stroke-linejoin="round"/><path d="M2226.1,912.5 C2218.3,913.0 2205.1,907.0 2187.3,914.8 C2169.5,922.6 2155.3,940.0 2137.0,951.4 C2118.7,962.8 2104.6,968.3 2095.9,971.9 C2087.2,975.5 2094.1,970.1 2093.7,969.6" fill="none" stroke="#f8f2c2" stroke-width="2.8" stroke-linecap="round" stroke-linejoin="round"/><path d="M2093.7,969.6 C2093.0,979.7 2092.0,996.1 2090.2,1019.9 C2088.4,1043.7 2086.8,1065.1 2084.5,1088.4 C2082.2,1111.7 2080.1,1125.1 2078.8,1136.4 C2077.5,1147.7 2078.2,1143.3 2078.0,1145.0" fill="none" stroke="#f8f2c2" stroke-width="2.3" stroke-linecap="round" stroke-linejoin="round"/><path d="M2018.3,850.0 C2018.3,852.0 2016.0,847.9 2018.3,860.0 C2020.6,872.1 2027.0,898.7 2029.7,910.3 C2032.4,921.9 2031.5,916.5 2032.0,918.0" fill="none" stroke="#f8f2c2" stroke-width="3.8" stroke-linecap="round" stroke-linejoin="round"/><path d="M2214.7,862.7 C2207.8,864.6 2195.5,868.5 2180.0,872.0 C2164.5,875.5 2145.6,878.4 2137.0,880.0" fill="none" stroke="#f8f2c2" stroke-width="2.8" stroke-linecap="round" stroke-linejoin="round"/><path d="M470.0,1052.2 C492.8,1051.0 515.7,1049.4 584.2,1046.1 C652.7,1042.8 733.3,1039.5 812.5,1035.8 C891.7,1032.1 937.4,1029.7 980.0,1027.8 C1022.6,1025.9 1007.0,1026.9 1025.7,1026.2 C1044.4,1025.5 1055.3,1025.4 1073.6,1024.4 C1091.9,1023.4 1101.5,1022.8 1117.0,1021.0 C1132.5,1019.2 1137.6,1018.7 1151.3,1015.3 C1165.0,1011.9 1173.8,1008.9 1185.5,1003.9 C1197.2,998.9 1200.5,996.8 1209.8,990.5 C1219.1,984.2 1223.0,980.7 1231.8,972.5 C1240.6,964.3 1245.5,959.3 1253.8,949.5 C1262.1,939.7 1265.6,934.6 1273.4,923.5 C1281.2,912.4 1285.2,906.3 1293.0,894.0 C1300.8,881.7 1304.8,874.8 1312.6,862.0 C1320.4,849.2 1324.3,842.8 1332.1,830.0 C1339.9,817.2 1343.9,811.2 1351.7,797.9 C1359.5,784.6 1363.7,777.3 1371.3,763.6 C1378.9,749.9 1382.6,742.4 1389.7,729.5 C1396.8,716.6 1399.7,712.3 1407.0,699.0 C1414.3,685.7 1415.8,682.1 1426.2,663.0 C1436.6,643.9 1451.2,617.5 1459.0,603.3 C1466.8,589.1 1463.8,594.3 1465.0,592.0" fill="none" stroke="#ab80da" stroke-width="12.2" stroke-linejoin="round"/><path d="M2063.0,596.0 C2063.2,599.5 2062.9,599.2 2064.0,613.7 C2065.1,628.2 2065.8,639.3 2068.5,668.5 C2071.2,697.7 2074.3,725.6 2077.7,759.9 C2081.1,794.2 2084.1,815.8 2085.7,839.8 C2087.3,863.8 2085.9,862.3 2085.7,880.0 C2085.5,897.7 2085.2,905.1 2084.5,928.5 C2083.8,951.9 2084.0,969.6 2082.2,997.0 C2080.4,1024.4 2078.8,1037.7 2075.4,1065.6 C2072.0,1093.5 2067.4,1120.5 2065.1,1136.4 C2062.8,1152.3 2064.2,1143.3 2064.0,1145.0" fill="none" stroke="#ab80da" stroke-width="11.2" stroke-linejoin="round"/><ellipse cx="2071" cy="596.5" rx="57" ry="11.5" fill="none" stroke="#ab80da" stroke-width="6.4"/><ellipse cx="2071" cy="596.5" rx="57" ry="11.5" fill="none" stroke="#bd94e8" stroke-width="4.6"/><path d="M470.0,1052.2 C492.8,1051.0 515.7,1049.4 584.2,1046.1 C652.7,1042.8 733.3,1039.5 812.5,1035.8 C891.7,1032.1 937.4,1029.7 980.0,1027.8 C1022.6,1025.9 1007.0,1026.9 1025.7,1026.2 C1044.4,1025.5 1055.3,1025.4 1073.6,1024.4 C1091.9,1023.4 1101.5,1022.8 1117.0,1021.0 C1132.5,1019.2 1137.6,1018.7 1151.3,1015.3 C1165.0,1011.9 1173.8,1008.9 1185.5,1003.9 C1197.2,998.9 1200.5,996.8 1209.8,990.5 C1219.1,984.2 1223.0,980.7 1231.8,972.5 C1240.6,964.3 1245.5,959.3 1253.8,949.5 C1262.1,939.7 1265.6,934.6 1273.4,923.5 C1281.2,912.4 1285.2,906.3 1293.0,894.0 C1300.8,881.7 1304.8,874.8 1312.6,862.0 C1320.4,849.2 1324.3,842.8 1332.1,830.0 C1339.9,817.2 1343.9,811.2 1351.7,797.9 C1359.5,784.6 1363.7,777.3 1371.3,763.6 C1378.9,749.9 1382.6,742.4 1389.7,729.5 C1396.8,716.6 1399.7,712.3 1407.0,699.0 C1414.3,685.7 1415.8,682.1 1426.2,663.0 C1436.6,643.9 1451.2,617.5 1459.0,603.3 C1466.8,589.1 1463.8,594.3 1465.0,592.0" fill="none" stroke="#bd94e8" stroke-width="10.2" stroke-linejoin="round"/><path d="M2063.0,596.0 C2063.2,599.5 2062.9,599.2 2064.0,613.7 C2065.1,628.2 2065.8,639.3 2068.5,668.5 C2071.2,697.7 2074.3,725.6 2077.7,759.9 C2081.1,794.2 2084.1,815.8 2085.7,839.8 C2087.3,863.8 2085.9,862.3 2085.7,880.0 C2085.5,897.7 2085.2,905.1 2084.5,928.5 C2083.8,951.9 2084.0,969.6 2082.2,997.0 C2080.4,1024.4 2078.8,1037.7 2075.4,1065.6 C2072.0,1093.5 2067.4,1120.5 2065.1,1136.4 C2062.8,1152.3 2064.2,1143.3 2064.0,1145.0" fill="none" stroke="#bd94e8" stroke-width="9.2" stroke-linejoin="round"/><rect x="564.8" y="1037.2" width="37.6" height="18" rx="1.5" fill="#fbf4a3" stroke="#e6d24a" stroke-width="1.2"/><text x="583.5999999999999" y="1050.7" text-anchor="middle" font-size="12.5" font-weight="700" fill="#555">E312</text><rect x="1371" y="714.6" width="37.6" height="18" rx="1.5" fill="#fbf4a3" stroke="#e6d24a" stroke-width="1.2"/><text x="1389.8" y="728.1" text-anchor="middle" font-size="12.5" font-weight="700" fill="#555">E312</text><rect x="2065.3" y="840" width="39.6" height="17" rx="1.5" fill="#fbf4a3" stroke="#e6d24a" stroke-width="1.2"/><text x="2085.1000000000004" y="853.0" text-anchor="middle" font-size="12.5" font-weight="700" fill="#555">N262</text><rect x="1058.8" y="1015.8" width="30.6" height="17.8" rx="1.5" fill="#e2696b" stroke="#e98a8a" stroke-width="1.2"/><text x="1074.1" y="1029.2" text-anchor="middle" font-size="12.5" font-weight="700" fill="#fff">A58</text><rect x="2306.8" y="1122.2" width="70.2" height="4" fill="#4a90e2"/><rect x="2389.4" y="1122.2" width="114.3" height="4" fill="#4a90e2"/><text transform="translate(2099,699) rotate(-15.8)" font-size="13.5" fill="#9a9a96" letter-spacing="0.18">Burgemeester Schneiderlaan</text><text transform="translate(2263.5,684) rotate(72)" font-size="14" fill="#9a9a96" letter-spacing="0">Langdonk</text><text transform="translate(2439,764.5) rotate(-20.5)" font-size="14.5" fill="#9a9a96" letter-spacing="0.3">Onyxdijk</text><text transform="translate(2433,806.5) rotate(18.5)" font-size="14" fill="#9a9a96" letter-spacing="0.2">Zundertseweg</text><text transform="translate(2089.5,979) rotate(-88)" font-size="16.5" fill="#7b5cb5" letter-spacing="0.3">Antwerpseweg</text><text transform="translate(635.5,613.2) rotate(5.5)" font-size="13.6" fill="#9a9a96" letter-spacing="0.35">Waterstraat</text></svg>
<span style="left:797.00px;top:680.73px;font-size:19.1px;color:#444;">Wouw</span>
<span style="left:1337.90px;top:824.10px;font-size:17.6px;color:#444;">Bulkenaar</span>
<span style="left:557.90px;top:920.64px;font-size:14.72px;color:#8d8383;">De Wijper</span>
<span style="left:914.90px;top:920.48px;font-size:17.62px;color:#444;">Oostlaar</span>
<span style="left:797.00px;top:986.49px;font-size:18.32px;color:#444;">Akker</span>
<span style="left:1280.30px;top:1039.67px;font-size:18.46px;color:#444;">Haiink</span>
<span style="left:2026.30px;top:801.40px;font-size:25.16px;color:#444;">Langdonk</span>
<span style="left:2296.50px;top:801.59px;font-size:24.94px;color:#444;">Visdonk</span>
<span style="left:2159.20px;top:739.53px;font-size:18.16px;color:#444;">Langdonk</span>
<span style="left:2090.20px;top:982.93px;font-size:18.87px;color:#444;">Kruisstraat</span>
<span style="left:2335.30px;top:941.72px;font-size:18.17px;color:#444;">Visdonk</span>
<span style="left:2324.30px;top:1106.59px;font-size:12.3px;color:#222;letter-spacing:-0.332px;">1000 voet</span>
<span style="left:2469.40px;top:1106.59px;font-size:12.3px;color:#222;letter-spacing:-0.274px;">500 m</span>
<div style="left:496.5px;top:622px;width:143.2px;height:37.2px;background:#fff;border:2px solid #505050;border-radius:18.6px;box-sizing:border-box"></div>
<div style="left:655.3px;top:622px;width:149.6px;height:37.2px;background:#fff;border:2px solid #505050;border-radius:18.6px;box-sizing:border-box"></div>
<div style="left:820.9px;top:622px;width:193.6px;height:37.2px;background:#fff;border:2px solid #505050;border-radius:18.6px;box-sizing:border-box"></div>
<svg style="left:507px;top:626px" width="27" height="27" viewBox="0 0 27 27"><circle cx="13.2" cy="13.4" r="12.4" fill="#444"/><polygon points="19.6,7.2 16.8,16.0 7.0,19.8 9.8,10.9" fill="#fff"/><circle cx="13.3" cy="13.4" r="1.6" fill="#444"/></svg>
<span style="left:541.80px;top:631.41px;font-size:18.3px;color:#444;transform:scaleX(1.0330);transform-origin:0 0;">Lokaliseer</span>
<svg style="left:666px;top:627px" width="27" height="27" viewBox="0 0 27 27"><g fill="#444">
<path d="M20.2,0.8 a4.6,4.6 0 0 1 4.6,4.6 c0,2.6 -3,5.6 -4.6,7.4 c-1.6,-1.8 -4.6,-4.8 -4.6,-7.4 a4.6,4.6 0 0 1 4.6,-4.6z M20.2,3.8 a1.7,1.7 0 1 0 0.01,0z" fill-rule="evenodd"/>
<path d="M5,12.6 a4.2,4.2 0 0 1 4.2,4.2 c0,2.4 -2.8,5.4 -4.2,7 c-1.4,-1.6 -4.2,-4.6 -4.2,-7 a4.2,4.2 0 0 1 4.2,-4.2z M5,15.3 a1.6,1.6 0 1 0 0.01,0z" fill-rule="evenodd"/></g>
<path d="M9,23.6 H20.6 a3.3,3.3 0 0 0 0,-6.6 H15.4 a3.2,3.2 0 0 1 0,-6.4 H16.6" fill="none" stroke="#444" stroke-width="2.7" stroke-linecap="round"/></svg>
<span style="left:700.10px;top:631.41px;font-size:18.3px;color:#444;transform:scaleX(1.0779);transform-origin:0 0;">Toon route</span>
<svg style="left:0;top:0" width="900" height="700"><polygon points="833.20,629.20 842.11,629.20 833.20,638.11" fill="#555"/><polygon points="854.80,629.20 845.89,629.20 854.80,638.11" fill="#555"/><polygon points="833.20,650.80 842.11,650.80 833.20,641.89" fill="#555"/><polygon points="854.80,650.80 845.89,650.80 854.80,641.89" fill="#555"/><path d="M836.58,632.58 L851.43,647.43 M851.43,632.58 L836.58,647.43" stroke="#555" stroke-width="5.54" fill="none"/></svg>
<span style="left:865.50px;top:631.41px;font-size:18.3px;color:#444;transform:scaleX(1.0619);transform-origin:0 0;">Volledig scherm</span>
<div style="left:2264.0px;top:622.5px;width:35.6px;height:35.6px;border-radius:50%;background:#fff;border:1.9px solid #2a2a2a;box-sizing:border-box"></div>
<div style="left:2272.3px;top:639.4px;width:19px;height:1.8px;background:#333"></div>
<div style="left:2316.9px;top:622.5px;width:35.6px;height:35.6px;border-radius:50%;background:#fff;border:1.9px solid #2a2a2a;box-sizing:border-box"></div>
<div style="left:2325.2px;top:639.4px;width:19px;height:1.8px;background:#333"></div>
<div style="left:2333.8px;top:630.8px;width:1.8px;height:19px;background:#333"></div>
<div style="left:2371px;top:623.2px;width:145.5px;height:34.6px;border-radius:17.3px;background:#fff;border:1.9px solid #2a2a2a;box-sizing:border-box"></div>
<svg style="left:2372.5px;top:625.4px" width="31" height="31" viewBox="0 0 31 31"><defs><clipPath id="wc"><circle cx="15.2" cy="15.2" r="14.4"/></clipPath></defs>
<circle cx="15.2" cy="15.2" r="14.6" fill="#efece6"/><g clip-path="url(#wc)"><path d="M6,0 L9,30 M0,20 L30,24 M22,0 L18,31 M10,8 L30,4" stroke="#f3e3a0" stroke-width="2.2" fill="none"/><path d="M0,11 C6,9 9,13 13,17 C17,21 22,23 29,26" stroke="#b088dc" stroke-width="3.2" fill="none"/></g><circle cx="15.2" cy="15.2" r="14.6" fill="none" stroke="#c9b9b9" stroke-width="1"/></svg>
<span style="left:2410.20px;top:632.40px;font-size:17.6px;color:#222;letter-spacing:-1.202px;">Weg</span>
<svg style="left:2494px;top:635px" width="14" height="9" viewBox="0 0 14 9"><polygon points="0.6,0.8 13.2,0.8 6.9,7.6" fill="#111"/></svg>
</section>
<section id="map-popup">
<div style="left:1571px;top:1050.5px;width:49px;height:19.5px;background:#c9c9c9;border-radius:4px 6px 5px 3px;filter:blur(.6px)"></div>
<span style="left:1619.60px;top:1056.00px;font-size:13px;color:#777;">s</span>
<span style="left:1629.80px;top:1051.76px;font-size:18px;color:#111;letter-spacing:0.024px;">150 kVA-5</span>
<svg style="left:1631px;top:1029.6px" width="22" height="22" viewBox="0 0 22 22"><defs><radialGradient id="mk" cx="40%" cy="30%" r="75%"><stop offset="0" stop-color="#f04a4a"/><stop offset="1" stop-color="#b50f14"/></radialGradient></defs>
<circle cx="10.8" cy="10.7" r="9.7" fill="url(#mk)"/><rect x="9.5" y="4.2" width="2.7" height="8.4" rx="1.2" fill="#fff"/><circle cx="10.85" cy="15.6" r="1.55" fill="#fff"/></svg>
<div style="left:1483.3px;top:522.3px;width:531.2px;height:476.6px;background:#fff;border-radius:3px;box-shadow:0 1px 7px rgba(0,0,0,.42),0 0 2px rgba(0,0,0,.25)"></div>
<svg style="left:1618px;top:997.5px" width="50" height="24" viewBox="1618 997.5 50 24"><defs><filter id="ts" x="-20%" y="-20%" width="140%" height="160%"><feGaussianBlur stdDeviation="1.6"/></filter></defs><polygon points="1624,1000.5 1660,1000.5 1642,1018.5" fill="rgba(0,0,0,.28)" filter="url(#ts)"/><polygon points="1622.5,997 1661.5,997 1642,1017.2" fill="#fff"/></svg>
<span style="left:1499.40px;top:542.72px;font-size:21.6px;color:#1b8a1b;letter-spacing:0.324px;transform:scaleX(1.0850);transform-origin:0 0;">150 kVA-5</span>
<svg style="left:0;top:0" width="2560" height="600"><defs><filter id="bl"><feGaussianBlur stdDeviation="0.7"/></filter></defs><rect x="1500" y="582.6" width="304" height="1.3" fill="#7f9fc8"/><path d="M1496.0,570.5 L1503.0,572.1 L1510.0,566.8 L1517.1,566.4 L1524.1,568.2 L1531.1,566.2 L1538.1,564.9 L1545.2,567.9 L1552.2,568.3 L1559.2,566.4 L1566.2,568.3 L1573.2,569.2 L1580.3,566.1 L1587.3,566.0 L1594.3,567.9 L1601.3,566.1 L1608.4,565.5 L1615.4,568.7 L1622.4,568.5 L1629.4,566.5 L1636.5,568.3 L1643.5,568.5 L1650.5,565.3 L1657.5,565.9 L1664.5,568.0 L1671.6,566.3 L1678.6,566.3 L1685.6,569.4 L1692.6,568.4 L1699.7,566.2 L1706.7,567.9 L1713.7,567.8 L1720.7,564.9 L1727.8,566.2 L1734.8,568.5 L1741.8,566.7 L1748.8,566.9 L1755.8,569.6 L1762.9,567.9 L1769.9,565.6 L1776.9,567.5 L1783.9,567.3 L1791.0,564.9 L1798.0,567.0 L1805.0,569.0 L1805.0,583.9 L1798.0,583.7 L1791.0,581.6 L1783.9,583.1 L1776.9,581.5 L1769.9,581.5 L1762.9,584.1 L1755.8,582.4 L1748.8,583.3 L1741.8,583.5 L1734.8,580.8 L1727.8,582.5 L1720.7,582.4 L1713.7,581.9 L1706.7,584.5 L1699.7,582.8 L1692.6,582.2 L1685.6,583.2 L1678.6,580.8 L1671.6,582.4 L1664.5,583.6 L1657.5,582.2 L1650.5,584.1 L1643.5,582.7 L1636.5,581.1 L1629.4,583.0 L1622.4,581.6 L1615.4,582.6 L1608.4,584.4 L1601.3,582.1 L1594.3,583.0 L1587.3,582.5 L1580.3,580.7 L1573.2,583.2 L1566.2,582.8 L1559.2,582.6 L1552.2,584.4 L1545.2,581.8 L1538.1,581.9 L1531.1,582.8 L1524.1,581.1 L1517.1,583.5 L1510.0,583.8 L1503.0,582.1 L1496.0,583.7Z" fill="#cbcbcc" filter="url(#bl)"/><path d="M1504,574 h4 M1530,577 h22 M1560,573 h8 M1600,578 h30 M1655,574 h40 M1716,576 h26 M1760,573 h30" stroke="#b6bcc6" stroke-width="2.2" opacity=".55" filter="url(#bl)"/></svg>
<span style="left:1503.40px;top:589.83px;font-size:16.5px;color:#333;transform:scaleX(1.0746);transform-origin:0 0;">Laatste GPS fix:</span>
<span style="left:1638.40px;top:589.83px;font-size:16.5px;color:#333;letter-spacing:0.521px;transform:scaleX(1.0850);transform-origin:0 0;">20-2-2024 10:01:42</span>
<span style="left:1503.40px;top:614.23px;font-size:16.5px;color:#333;letter-spacing:0.046px;transform:scaleX(1.0850);transform-origin:0 0;">Laatst online</span>
<span style="left:1638.40px;top:614.23px;font-size:16.5px;color:#333;letter-spacing:0.521px;transform:scaleX(1.0850);transform-origin:0 0;">20-2-2024 16:48:51</span>
<div style="left:1499.4px;top:643.2px;width:498.6px;height:1px;background:#d9d9d9"></div>
<span style="left:1503.40px;top:659.73px;font-size:16.5px;color:#333;letter-spacing:0.166px;transform:scaleX(1.0850);transform-origin:0 0;">Brandstof niveau intern</span>
<span style="left:1705.20px;top:659.73px;font-size:16.5px;color:#333;">:</span>
<span style="left:1715.50px;top:659.73px;font-size:16.5px;color:#222;font-weight:700;-webkit-text-stroke:0.5px currentColor;letter-spacing:1.05px;">98</span>
<span style="left:1743.27px;top:659.73px;font-size:16.5px;color:#333;letter-spacing:.6px;">%</span>
<span style="left:1816.50px;top:659.73px;font-size:16.5px;color:#333;letter-spacing:0.581px;transform:scaleX(1.0850);transform-origin:0 0;">20-2-2024 16:42:20</span>
<span style="left:1503.40px;top:684.32px;font-size:16.5px;color:#333;letter-spacing:0.149px;transform:scaleX(1.0850);transform-origin:0 0;">Brandstof niveau extern</span>
<span style="left:1705.20px;top:684.32px;font-size:16.5px;color:#333;">:</span>
<span style="left:1715.50px;top:684.32px;font-size:16.5px;color:#222;font-weight:700;-webkit-text-stroke:0.5px currentColor;letter-spacing:1.05px;">0</span>
<span style="left:1733.06px;top:684.32px;font-size:16.5px;color:#333;letter-spacing:.6px;">%</span>
<span style="left:1816.50px;top:684.32px;font-size:16.5px;color:#333;letter-spacing:0.585px;transform:scaleX(1.0850);transform-origin:0 0;">1-1-1900 01:00:00</span>
<span style="left:1503.40px;top:708.91px;font-size:16.5px;color:#333;letter-spacing:0.097px;transform:scaleX(1.0850);transform-origin:0 0;">Running time</span>
<span style="left:1705.20px;top:708.91px;font-size:16.5px;color:#333;">:</span>
<span style="left:1715.50px;top:708.91px;font-size:16.5px;color:#222;font-weight:700;-webkit-text-stroke:0.5px currentColor;letter-spacing:1.05px;">7380</span>
<span style="left:1763.76px;top:708.91px;font-size:16.5px;color:#333;letter-spacing:.6px;">hours</span>
<span style="left:1816.50px;top:708.91px;font-size:16.5px;color:#333;letter-spacing:0.554px;transform:scaleX(1.0850);transform-origin:0 0;">20-2-2024 16:46:51</span>
<span style="left:1503.40px;top:733.50px;font-size:16.5px;color:#333;letter-spacing:0.176px;">UL1_N</span>
<span style="left:1705.20px;top:733.50px;font-size:16.5px;color:#333;">:</span>
<span style="left:1715.50px;top:733.50px;font-size:16.5px;color:#222;font-weight:700;-webkit-text-stroke:0.5px currentColor;letter-spacing:1.05px;">234</span>
<span style="left:1753.56px;top:733.50px;font-size:16.5px;color:#333;letter-spacing:.6px;">V</span>
<span style="left:1816.50px;top:733.50px;font-size:16.5px;color:#333;letter-spacing:0.554px;transform:scaleX(1.0850);transform-origin:0 0;">20-2-2024 16:48:41</span>
<span style="left:1503.40px;top:758.09px;font-size:16.5px;color:#333;letter-spacing:0.176px;">UL2_N</span>
<span style="left:1705.20px;top:758.09px;font-size:16.5px;color:#333;">:</span>
<span style="left:1715.50px;top:758.09px;font-size:16.5px;color:#222;font-weight:700;-webkit-text-stroke:0.5px currentColor;letter-spacing:1.05px;">230</span>
<span style="left:1753.56px;top:758.09px;font-size:16.5px;color:#333;letter-spacing:.6px;">V</span>
<span style="left:1816.50px;top:758.09px;font-size:16.5px;color:#333;letter-spacing:0.554px;transform:scaleX(1.0850);transform-origin:0 0;">20-2-2024 16:48:41</span>
<span style="left:1503.40px;top:782.68px;font-size:16.5px;color:#333;letter-spacing:0.176px;">UL3_N</span>
<span style="left:1705.20px;top:782.68px;font-size:16.5px;color:#333;">:</span>
<span style="left:1715.50px;top:782.68px;font-size:16.5px;color:#222;font-weight:700;-webkit-text-stroke:0.5px currentColor;letter-spacing:1.05px;">231</span>
<span style="left:1753.56px;top:782.68px;font-size:16.5px;color:#333;letter-spacing:.6px;">V</span>
<span style="left:1816.50px;top:782.68px;font-size:16.5px;color:#333;letter-spacing:0.554px;transform:scaleX(1.0850);transform-origin:0 0;">20-2-2024 16:48:41</span>
<span style="left:1503.40px;top:807.27px;font-size:16.5px;color:#333;transform:scaleX(1.0781);transform-origin:0 0;">IL_1</span>
<span style="left:1705.20px;top:807.27px;font-size:16.5px;color:#333;">:</span>
<span style="left:1715.50px;top:807.27px;font-size:16.5px;color:#222;font-weight:700;-webkit-text-stroke:0.5px currentColor;letter-spacing:1.05px;">39</span>
<span style="left:1743.27px;top:807.27px;font-size:16.5px;color:#333;letter-spacing:.6px;">A</span>
<span style="left:1816.50px;top:807.27px;font-size:16.5px;color:#333;letter-spacing:0.554px;transform:scaleX(1.0850);transform-origin:0 0;">20-2-2024 16:48:41</span>
<span style="left:1503.40px;top:831.86px;font-size:16.5px;color:#333;letter-spacing:0.117px;transform:scaleX(1.0850);transform-origin:0 0;">IL_2</span>
<span style="left:1705.20px;top:831.86px;font-size:16.5px;color:#333;">:</span>
<span style="left:1715.50px;top:831.86px;font-size:16.5px;color:#222;font-weight:700;-webkit-text-stroke:0.5px currentColor;letter-spacing:1.05px;">44</span>
<span style="left:1743.27px;top:831.86px;font-size:16.5px;color:#333;letter-spacing:.6px;">A</span>
<span style="left:1816.50px;top:831.86px;font-size:16.5px;color:#333;letter-spacing:0.554px;transform:scaleX(1.0850);transform-origin:0 0;">20-2-2024 16:48:41</span>
<span style="left:1503.40px;top:856.45px;font-size:16.5px;color:#333;letter-spacing:0.117px;transform:scaleX(1.0850);transform-origin:0 0;">IL_3</span>
<span style="left:1705.20px;top:856.45px;font-size:16.5px;color:#333;">:</span>
<span style="left:1715.50px;top:856.45px;font-size:16.5px;color:#222;font-weight:700;-webkit-text-stroke:0.5px currentColor;letter-spacing:1.05px;">81</span>
<span style="left:1743.27px;top:856.45px;font-size:16.5px;color:#333;letter-spacing:.6px;">A</span>
<span style="left:1816.50px;top:856.45px;font-size:16.5px;color:#333;letter-spacing:0.554px;transform:scaleX(1.0850);transform-origin:0 0;">20-2-2024 16:48:41</span>
<span style="left:1503.40px;top:881.04px;font-size:16.5px;color:#333;letter-spacing:-0.107px;">Fgen</span>
<span style="left:1705.20px;top:881.04px;font-size:16.5px;color:#333;">:</span>
<span style="left:1715.50px;top:881.04px;font-size:16.5px;color:#222;font-weight:700;-webkit-text-stroke:0.5px currentColor;letter-spacing:1.05px;">50,22</span>
<span style="left:1769.43px;top:881.04px;font-size:16.5px;color:#333;letter-spacing:.6px;">Hz</span>
<span style="left:1816.50px;top:881.04px;font-size:16.5px;color:#333;letter-spacing:0.554px;transform:scaleX(1.0850);transform-origin:0 0;">20-2-2024 16:48:41</span>
<span style="left:1503.40px;top:905.63px;font-size:16.5px;color:#333;letter-spacing:0.229px;">P_gen</span>
<span style="left:1705.20px;top:905.63px;font-size:16.5px;color:#333;">:</span>
<span style="left:1715.50px;top:905.63px;font-size:16.5px;color:#222;font-weight:700;-webkit-text-stroke:0.5px currentColor;letter-spacing:1.05px;">37</span>
<span style="left:1743.27px;top:905.63px;font-size:16.5px;color:#333;letter-spacing:.6px;">kW</span>
<span style="left:1816.50px;top:905.63px;font-size:16.5px;color:#333;letter-spacing:0.554px;transform:scaleX(1.0850);transform-origin:0 0;">20-2-2024 16:48:41</span>
<div style="left:1499.4px;top:935.6px;width:483.6px;height:1px;background:#d9d9d9"></div>
<span style="left:1499.40px;top:945.42px;font-size:16.4px;color:#d4232b;letter-spacing:0.238px;transform:scaleX(1.0850);transform-origin:0 0;text-decoration:underline;text-decoration-thickness:1.2px;text-underline-offset:2.5px;">150 kVA-5 2150 Phas seq err DG 20/02/2024 09:21</span>
<span style="left:1499.40px;top:965.02px;font-size:16.4px;color:#d4232b;transform:scaleX(1.0344);transform-origin:0 0;text-decoration:underline;text-decoration-thickness:1.2px;text-underline-offset:2.5px;">UTC+1</span>
</section>
<section id="footer">
<span style="left:1426.40px;top:1156.53px;font-size:20.4px;color:#222;font-weight:700;-webkit-text-stroke:0.5px currentColor;letter-spacing:0.793px;transform:scaleX(1.0850);transform-origin:0 0;">Rit registratie</span>
<div style="left:0;top:1180px;width:2560px;height:46px;background:#222"></div>
<div style="left:0;top:1180px;width:2560px;height:35px;background:linear-gradient(#404040,#404040 73%,#363636 77%,#353535);border-left:1.6px solid #6a6a6a;box-sizing:border-box"></div>
<div style="left:0;top:1180px;width:2560px;height:1.2px;background:#5a5a5a"></div>
<div style="left:0;top:1214.8px;width:2560px;height:1.9px;background:#6e6e6e"></div>
<div style="left:1435.5px;top:1222.6px;width:60px;height:10px;background:#2c2c2c;border:1.2px solid #4a4a4a;border-radius:6px"></div>
<div style="left:1655px;top:1221.8px;width:61px;height:10px;background:#4a2424;border-radius:6px"></div>
<span style="left:1229.70px;top:1185.21px;font-size:19.6px;color:#fff;letter-spacing:0.283px;transform:scaleX(1.0850);transform-origin:0 0;text-decoration:underline;text-decoration-thickness:1.3px;text-underline-offset:2.6px;">Meldingen</span>
<span style="left:2473.00px;top:1190.31px;font-size:14.4px;color:#8c8c8c;letter-spacing:0.030px;font-family:'Liberation Mono',monospace;">v9899.144</span>
</section>
</body></html>
